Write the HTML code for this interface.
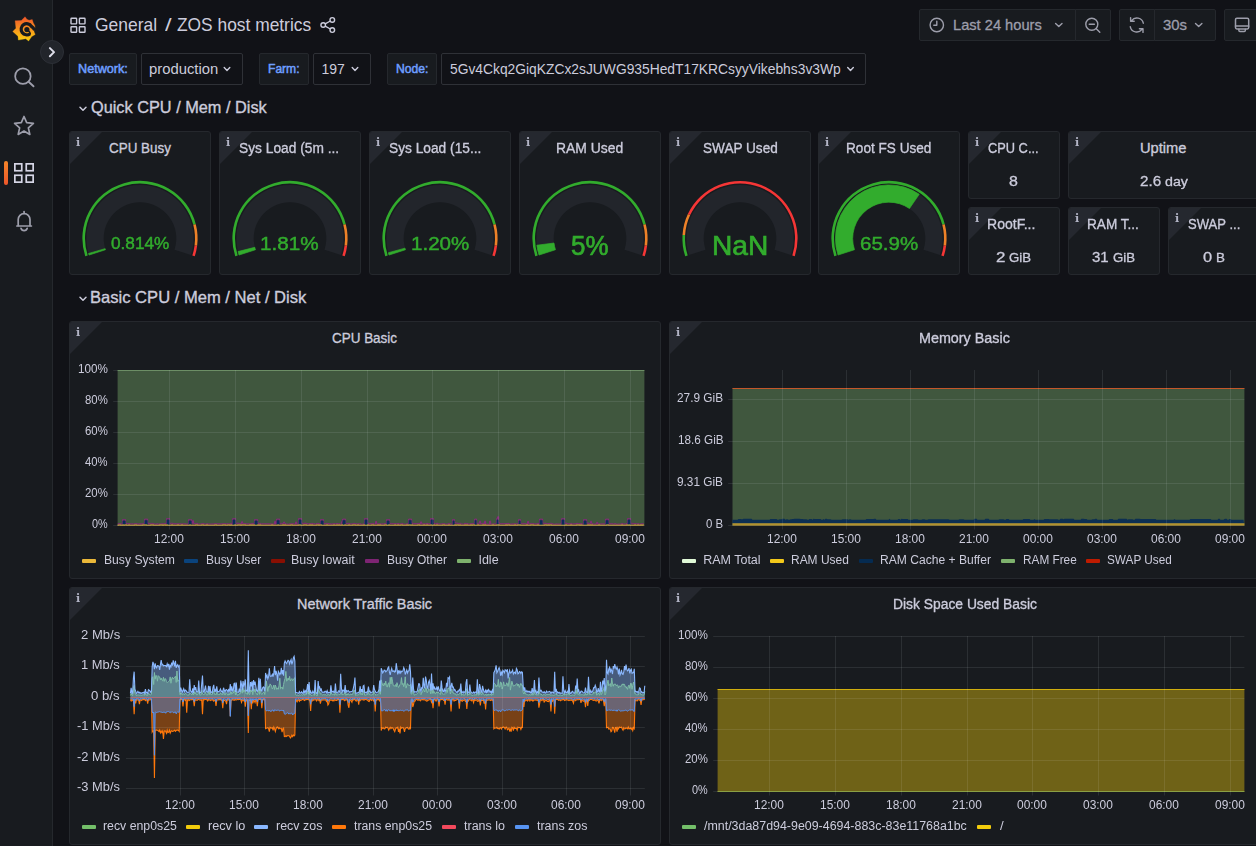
<!DOCTYPE html>
<html lang="en"><head><meta charset="utf-8"><title>ZOS host metrics - Grafana</title>
<style>
html,body{margin:0;padding:0;}
body{width:1256px;height:846px;overflow:hidden;background:#111217;position:relative;
font-family:"Liberation Sans",sans-serif;color:#ccccdc;}
.b{position:absolute;display:block;overflow:hidden;}
.t{position:absolute;display:block;white-space:pre;transform-origin:0 50%;}
</style></head><body>
<div class="b" style="left:0px;top:0px;width:53px;height:846px;background:#181b1f;border-right:1px solid #25282d;width:52px;"></div>
<svg class="b" style="left:8px;top:12px;" width="32" height="34" viewBox="0 0 32 34"><defs><linearGradient id="lg" gradientUnits="userSpaceOnUse" x1="0" y1="29" x2="0" y2="4.5"><stop offset="0" stop-color="#fdd20d"/><stop offset=".45" stop-color="#f8981d"/><stop offset="1" stop-color="#f0532a"/></linearGradient></defs><path fill="url(#lg)" stroke="url(#lg)" stroke-width=".3" stroke-linejoin="round" d="M17.09 4.74 L18.89 7.24 L21.11 8.24 L24.24 7.48 L25.25 10.65 L26.85 13.67 L27.02 15.88 L26.53 16.80 L26.05 16.40 L25.73 17.77 L26.13 20.10 L27.18 22.51 L23.72 24.60 L20.58 29.03 L17.69 26.85 L10.37 28.06 L9.97 24.20 L4.74 19.54 L7.96 16.16 L7.08 8.76 L13.27 8.52Z"/><path d="M26.61 17.93 Q25.41 15.76 23.40 14.35 A5.55 5.55 0 1 0 22.11 21.66" fill="none" stroke="#181b1f" stroke-width="3.2" stroke-linecap="butt"/><path d="M22.26 21.54 Q22.03 19.90 20.30 18.57" fill="none" stroke="#181b1f" stroke-width="1.6" stroke-linecap="round"/><circle cx="18.89" cy="17.53" r="2.6" fill="#181b1f"/></svg>
<svg class="b" style="left:12px;top:65px;" width="24" height="24" viewBox="0 0 24 24"><circle cx="10.9" cy="11.2" r="7.75" fill="none" stroke="#9d9eab" stroke-width="1.75"/><path d="M16.6 16.8 L21.5 21.3" stroke="#9d9eab" stroke-width="1.9" stroke-linecap="round"/></svg>
<svg class="b" style="left:12px;top:113px;" width="24" height="24" viewBox="0 0 24 24"><path d="M12.00 3.50 L14.70 9.68 L21.42 10.34 L16.37 14.82 L17.82 21.41 L12.00 18.00 L6.18 21.41 L7.63 14.82 L2.58 10.34 L9.30 9.68Z" fill="none" stroke="#9d9eab" stroke-width="1.7" stroke-linejoin="round"/></svg>
<div class="b" style="left:4px;top:161px;width:4px;height:24px;background:linear-gradient(#f6862a,#ee572b);border-radius:2px;"></div>
<svg class="b" style="left:12px;top:161px;" width="24" height="24" viewBox="0 0 24 24"><rect x="2.85" y="2.85" width="6.9" height="6.9" fill="none" stroke="#d6d6e6" stroke-width="1.7"/><rect x="2.85" y="14.25" width="6.9" height="6.9" fill="none" stroke="#d6d6e6" stroke-width="1.7"/><rect x="14.25" y="2.85" width="6.9" height="6.9" fill="none" stroke="#d6d6e6" stroke-width="1.7"/><rect x="14.25" y="14.25" width="6.9" height="6.9" fill="none" stroke="#d6d6e6" stroke-width="1.7"/></svg>
<svg class="b" style="left:12px;top:209px;" width="24" height="24" viewBox="0 0 24 24"><g fill="none" stroke="#9d9eab" stroke-width="1.7" stroke-linecap="round" stroke-linejoin="round"><path d="M12.1 2.6 V4.2"/><path d="M6.2 16.6 V10.6 A5.9 5.9 0 0 1 18 10.6 V16.6"/><path d="M4.9 17 H19.4"/><path d="M9 19.3 A3.2 3.2 0 0 0 15.2 19.3"/></g></svg>
<div class="b" style="left:40px;top:40px;width:24px;height:24px;background:#22252b;border:1px solid #2c2f36;border-radius:12px;box-sizing:border-box;"></div>
<svg class="b" style="left:40px;top:40px;" width="24" height="24" viewBox="0 0 24 24"><path d="M9.9 8.1 L14 12.15 L9.9 16.2" fill="none" stroke="#dedeea" stroke-width="2" stroke-linecap="round" stroke-linejoin="round"/></svg>
<svg class="b" style="left:68px;top:15px;" width="20" height="20" viewBox="0 0 20 20"><rect x="3.0" y="3.3" width="5.6" height="5.6" rx=".6" fill="none" stroke="#ccccdc" stroke-width="1.4"/><rect x="3.0" y="11.7" width="5.6" height="5.6" rx=".6" fill="none" stroke="#ccccdc" stroke-width="1.4"/><rect x="11.4" y="3.3" width="5.6" height="5.6" rx=".6" fill="none" stroke="#ccccdc" stroke-width="1.4"/><rect x="11.4" y="11.7" width="5.6" height="5.6" rx=".6" fill="none" stroke="#ccccdc" stroke-width="1.4"/></svg>
<span class="t" style="left:95.02px;top:11px;font-size:19px;line-height:28px;color:#ccccdc;transform:scaleX(0.9177);">General</span>
<span class="t" style="left:165.40px;top:11px;font-size:19px;line-height:28px;color:#ccccdc;transform:scaleX(1.2497);">/</span>
<span class="t" style="left:177.25px;top:11px;font-size:19px;line-height:28px;color:#ccccdc;transform:scaleX(0.9140);">ZOS host metrics</span>
<svg class="b" style="left:318px;top:15px;" width="20" height="20" viewBox="0 0 20 20"><g fill="none" stroke="#ccccdc" stroke-width="1.4"><circle cx="14.3" cy="4.9" r="2.3"/><circle cx="5.2" cy="10" r="2.3"/><circle cx="14.3" cy="15.1" r="2.3"/><path d="M7.2 8.9 L12.3 6 M7.2 11.1 L12.3 14"/></g></svg>
<div class="b" style="left:919px;top:9px;width:157px;height:32px;background:#181b1f;border:1px solid #25282d;box-sizing:border-box;border-radius:2px 0 0 2px;"></div>
<div class="b" style="left:1075px;top:9px;width:36px;height:32px;background:#181b1f;border:1px solid #25282d;box-sizing:border-box;border-radius:0 2px 2px 0;"></div>
<div class="b" style="left:1119px;top:9px;width:36px;height:32px;background:#181b1f;border:1px solid #25282d;box-sizing:border-box;border-radius:2px 0 0 2px;"></div>
<div class="b" style="left:1154px;top:9px;width:62px;height:32px;background:#181b1f;border:1px solid #25282d;box-sizing:border-box;border-radius:0 2px 2px 0;"></div>
<div class="b" style="left:1224px;top:9px;width:40px;height:32px;background:#181b1f;border:1px solid #25282d;box-sizing:border-box;border-radius:2px;"></div>
<svg class="b" style="left:928px;top:16px;" width="18" height="18" viewBox="0 0 18 18"><circle cx="8.8" cy="9" r="6.7" fill="none" stroke="#9d9eab" stroke-width="1.4"/><path d="M8.8 5.2 V9.2 H5.8" fill="none" stroke="#9d9eab" stroke-width="1.4" stroke-linecap="round" stroke-linejoin="round"/></svg>
<span class="t" style="left:952.80px;top:14px;font-size:15px;line-height:22px;color:#9d9eab;-webkit-text-stroke:0.3px #9d9eab;transform:scaleX(0.9761);">Last 24 hours</span>
<svg class="b" style="left:1053px;top:19px;" width="12" height="12" viewBox="0 0 12 12"><path d="M2.60 4.40 l3.2 3.2 l3.2 -3.2" fill="none" stroke="#9d9eab" stroke-width="1.4" stroke-linecap="round" stroke-linejoin="round"/></svg>
<svg class="b" style="left:1083px;top:15px;" width="20" height="20" viewBox="0 0 20 20"><circle cx="8.8" cy="9.2" r="6" fill="none" stroke="#9d9eab" stroke-width="1.4"/><path d="M6.2 9.2 H11.4 M13.3 13.7 L16.8 17.2" stroke="#9d9eab" stroke-width="1.4" stroke-linecap="round"/></svg>
<svg class="b" style="left:1127px;top:15px;" width="20" height="20" viewBox="0 0 20 20"><g fill="none" stroke="#9d9eab" stroke-width="1.4" stroke-linecap="round" stroke-linejoin="round"><path d="M16.3 8.2 A6.6 6.6 0 0 0 4.6 5.6 M3.6 2.6 V6.2 H7.2"/><path d="M3.3 11.8 A6.6 6.6 0 0 0 15 14.4 M16 17.4 V13.8 H12.4"/></g></svg>
<span class="t" style="left:1162.83px;top:14px;font-size:15px;line-height:22px;color:#9d9eab;-webkit-text-stroke:0.3px #9d9eab;transform:scaleX(0.9924);">30s</span>
<svg class="b" style="left:1193px;top:19px;" width="12" height="12" viewBox="0 0 12 12"><path d="M2.50 4.40 l3.2 3.2 l3.2 -3.2" fill="none" stroke="#9d9eab" stroke-width="1.4" stroke-linecap="round" stroke-linejoin="round"/></svg>
<svg class="b" style="left:1232px;top:15px;" width="20" height="20" viewBox="0 0 20 20"><g fill="none" stroke="#9d9eab" stroke-width="1.5" stroke-linejoin="round" stroke-linecap="round"><rect x="3.5" y="3.3" width="13.2" height="10.6" rx="1.4"/><path d="M3.6 11 H16.6" stroke-width="1.7"/><path d="M6.9 14.2 V15.6 Q6.9 16.6 7.9 16.6 H12.3 Q13.3 16.6 13.3 15.6 V14.2"/></g></svg>
<div class="b" style="left:69px;top:53px;width:68px;height:32px;background:#181b1f;border:1px solid #25282d;border-radius:2px;box-sizing:border-box;"></div>
<span class="t" style="left:77.96px;top:60px;font-size:12.5px;line-height:19px;color:#6e9fff;-webkit-text-stroke:0.5px #6e9fff;transform:scaleX(1.0114);">Network:</span>
<div class="b" style="left:141px;top:53px;width:102px;height:32px;background:#111217;border:1px solid #2f3137;border-radius:2px;box-sizing:border-box;"></div>
<span class="t" style="left:148.54px;top:59px;font-size:14px;line-height:21px;color:#ccccdc;transform:scaleX(1.0593);">production</span>
<svg class="b" style="left:221px;top:63px;" width="12" height="12" viewBox="0 0 12 12"><path d="M3.20 4.60 l2.8 2.8 l2.8 -2.8" fill="none" stroke="#ccccdc" stroke-width="1.4" stroke-linecap="round" stroke-linejoin="round"/></svg>
<div class="b" style="left:259px;top:53px;width:50px;height:32px;background:#181b1f;border:1px solid #25282d;border-radius:2px;box-sizing:border-box;"></div>
<span class="t" style="left:268.01px;top:60px;font-size:12.5px;line-height:19px;color:#6e9fff;-webkit-text-stroke:0.5px #6e9fff;transform:scaleX(0.9664);">Farm:</span>
<div class="b" style="left:313px;top:53px;width:58px;height:32px;background:#111217;border:1px solid #2f3137;border-radius:2px;box-sizing:border-box;"></div>
<span class="t" style="left:321.43px;top:59px;font-size:14px;line-height:21px;color:#ccccdc;">197</span>
<svg class="b" style="left:349px;top:63px;" width="12" height="12" viewBox="0 0 12 12"><path d="M3.20 4.60 l2.8 2.8 l2.8 -2.8" fill="none" stroke="#ccccdc" stroke-width="1.4" stroke-linecap="round" stroke-linejoin="round"/></svg>
<div class="b" style="left:387px;top:53px;width:50px;height:32px;background:#181b1f;border:1px solid #25282d;border-radius:2px;box-sizing:border-box;"></div>
<span class="t" style="left:396.01px;top:60px;font-size:12.5px;line-height:19px;color:#6e9fff;-webkit-text-stroke:0.5px #6e9fff;transform:scaleX(0.9682);">Node:</span>
<div class="b" style="left:441px;top:53px;width:425px;height:32px;background:#111217;border:1px solid #2f3137;border-radius:2px;box-sizing:border-box;"></div>
<span class="t" style="left:450.45px;top:59px;font-size:14px;line-height:21px;color:#ccccdc;transform:scaleX(0.9872);">5Gv4Ckq2GiqKZCx2sJUWG935HedT17KRCsyyVikebhs3v3Wp</span>
<svg class="b" style="left:844px;top:63px;" width="12" height="12" viewBox="0 0 12 12"><path d="M3.70 4.60 l2.8 2.8 l2.8 -2.8" fill="none" stroke="#ccccdc" stroke-width="1.4" stroke-linecap="round" stroke-linejoin="round"/></svg>
<svg class="b" style="left:77px;top:103px;" width="12" height="12" viewBox="0 0 12 12"><path d="M3.00 4.20 l3.0 3.0 l3.0 -3.0" fill="none" stroke="#ccccdc" stroke-width="1.5" stroke-linecap="round" stroke-linejoin="round"/></svg>
<span class="t" style="left:90.73px;top:95px;font-size:16.5px;line-height:25px;color:#ccccdc;-webkit-text-stroke:0.35px #ccccdc;transform:scaleX(0.9881);">Quick CPU / Mem / Disk</span>
<svg class="b" style="left:77px;top:293px;" width="12" height="12" viewBox="0 0 12 12"><path d="M3.00 4.20 l3.0 3.0 l3.0 -3.0" fill="none" stroke="#ccccdc" stroke-width="1.5" stroke-linecap="round" stroke-linejoin="round"/></svg>
<span class="t" style="left:89.89px;top:285px;font-size:16.5px;line-height:25px;color:#ccccdc;-webkit-text-stroke:0.35px #ccccdc;transform:scaleX(1.0041);">Basic CPU / Mem / Net / Disk</span>
<div class="b" style="left:69px;top:131px;width:142px;height:144px;background:#181b1f;border:1px solid #25282d;border-radius:3px;box-sizing:border-box;"></div>
<svg class="b" style="left:70px;top:132px;border-top-left-radius:2px;" width="32" height="32" viewBox="0 0 32 32"><path d="M0 0 H32 L0 32 Z" fill="#25282f"/></svg>
<span class="t" style="left:76.23px;top:135px;font-size:11px;line-height:16px;color:#b3b5c6;font-weight:700;font-family:'DejaVu Serif','Liberation Serif',serif;will-change:transform;">i</span>
<span class="t" style="left:108.57px;top:136px;font-size:15.5px;line-height:23px;color:#ccccdc;-webkit-text-stroke:0.35px #ccccdc;transform:scaleX(0.8665);">CPU Busy</span>
<svg class="b" style="left:69px;top:131px;" width="142" height="144" viewBox="0 0 142 144"><path d="M20.02 124.06 A53.6 53.6 0 1 1 121.98 124.06 L105.52 118.72 A36.3 36.3 0 1 0 36.48 118.72 Z" fill="#22252b"/><path d="M20.02 124.06 A53.6 53.6 0 0 1 19.54 122.49 L36.15 117.65 A36.3 36.3 0 0 0 36.48 118.72 Z" fill="#32ac2d" stroke="#32ac2d" stroke-width="0.7"/><path d="M16.22 125.30 A57.6 57.6 0 1 1 126.79 93.18 L124.27 93.82 A55.0 55.0 0 1 0 18.69 124.50 Z" fill="#32ac2d"/><path d="M126.79 93.18 A57.6 57.6 0 0 1 128.15 114.72 L125.57 114.39 A55.0 55.0 0 0 0 124.27 93.82 Z" fill="#ed8128"/><path d="M128.15 114.72 A57.6 57.6 0 0 1 125.78 125.30 L123.31 124.50 A55.0 55.0 0 0 0 125.57 114.39 Z" fill="#f53636"/></svg>
<span class="t" style="left:110.73px;top:232px;font-size:16px;line-height:24px;color:#32ac2d;-webkit-text-stroke:0.45px #32ac2d;transform:scaleX(1.0740);">0.814%</span>
<div class="b" style="left:219px;top:131px;width:142px;height:144px;background:#181b1f;border:1px solid #25282d;border-radius:3px;box-sizing:border-box;"></div>
<svg class="b" style="left:220px;top:132px;border-top-left-radius:2px;" width="32" height="32" viewBox="0 0 32 32"><path d="M0 0 H32 L0 32 Z" fill="#25282f"/></svg>
<span class="t" style="left:226.23px;top:135px;font-size:11px;line-height:16px;color:#b3b5c6;font-weight:700;font-family:'DejaVu Serif','Liberation Serif',serif;will-change:transform;">i</span>
<span class="t" style="left:238.63px;top:136px;font-size:15.5px;line-height:23px;color:#ccccdc;-webkit-text-stroke:0.35px #ccccdc;transform:scaleX(0.8872);">Sys Load (5m ...</span>
<svg class="b" style="left:219px;top:131px;" width="142" height="144" viewBox="0 0 142 144"><path d="M20.02 124.06 A53.6 53.6 0 1 1 121.98 124.06 L105.52 118.72 A36.3 36.3 0 1 0 36.48 118.72 Z" fill="#22252b"/><path d="M20.02 124.06 A53.6 53.6 0 0 1 19.01 120.55 L35.79 116.34 A36.3 36.3 0 0 0 36.48 118.72 Z" fill="#32ac2d" stroke="#32ac2d" stroke-width="0.7"/><path d="M16.22 125.30 A57.6 57.6 0 1 1 126.79 93.18 L124.27 93.82 A55.0 55.0 0 1 0 18.69 124.50 Z" fill="#32ac2d"/><path d="M126.79 93.18 A57.6 57.6 0 0 1 128.15 114.72 L125.57 114.39 A55.0 55.0 0 0 0 124.27 93.82 Z" fill="#ed8128"/><path d="M128.15 114.72 A57.6 57.6 0 0 1 125.78 125.30 L123.31 124.50 A55.0 55.0 0 0 0 125.57 114.39 Z" fill="#f53636"/></svg>
<span class="t" style="left:260.43px;top:230px;font-size:18.5px;line-height:28px;color:#32ac2d;-webkit-text-stroke:0.45px #32ac2d;transform:scaleX(1.1161);">1.81%</span>
<div class="b" style="left:369px;top:131px;width:142px;height:144px;background:#181b1f;border:1px solid #25282d;border-radius:3px;box-sizing:border-box;"></div>
<svg class="b" style="left:370px;top:132px;border-top-left-radius:2px;" width="32" height="32" viewBox="0 0 32 32"><path d="M0 0 H32 L0 32 Z" fill="#25282f"/></svg>
<span class="t" style="left:376.23px;top:135px;font-size:11px;line-height:16px;color:#b3b5c6;font-weight:700;font-family:'DejaVu Serif','Liberation Serif',serif;will-change:transform;">i</span>
<span class="t" style="left:388.68px;top:136px;font-size:15.5px;line-height:23px;color:#ccccdc;-webkit-text-stroke:0.35px #ccccdc;transform:scaleX(0.8860);">Sys Load (15...</span>
<svg class="b" style="left:369px;top:131px;" width="142" height="144" viewBox="0 0 142 144"><path d="M20.02 124.06 A53.6 53.6 0 1 1 121.98 124.06 L105.52 118.72 A36.3 36.3 0 1 0 36.48 118.72 Z" fill="#22252b"/><path d="M20.02 124.06 A53.6 53.6 0 0 1 19.33 121.74 L36.00 117.14 A36.3 36.3 0 0 0 36.48 118.72 Z" fill="#32ac2d" stroke="#32ac2d" stroke-width="0.7"/><path d="M16.22 125.30 A57.6 57.6 0 1 1 126.79 93.18 L124.27 93.82 A55.0 55.0 0 1 0 18.69 124.50 Z" fill="#32ac2d"/><path d="M126.79 93.18 A57.6 57.6 0 0 1 128.15 114.72 L125.57 114.39 A55.0 55.0 0 0 0 124.27 93.82 Z" fill="#ed8128"/><path d="M128.15 114.72 A57.6 57.6 0 0 1 125.78 125.30 L123.31 124.50 A55.0 55.0 0 0 0 125.57 114.39 Z" fill="#f53636"/></svg>
<span class="t" style="left:410.83px;top:230px;font-size:18.5px;line-height:28px;color:#32ac2d;-webkit-text-stroke:0.45px #32ac2d;transform:scaleX(1.1111);">1.20%</span>
<div class="b" style="left:519px;top:131px;width:142px;height:144px;background:#181b1f;border:1px solid #25282d;border-radius:3px;box-sizing:border-box;"></div>
<svg class="b" style="left:520px;top:132px;border-top-left-radius:2px;" width="32" height="32" viewBox="0 0 32 32"><path d="M0 0 H32 L0 32 Z" fill="#25282f"/></svg>
<span class="t" style="left:526.23px;top:135px;font-size:11px;line-height:16px;color:#b3b5c6;font-weight:700;font-family:'DejaVu Serif','Liberation Serif',serif;will-change:transform;">i</span>
<span class="t" style="left:556.26px;top:136px;font-size:15.5px;line-height:23px;color:#ccccdc;-webkit-text-stroke:0.35px #ccccdc;transform:scaleX(0.8972);">RAM Used</span>
<svg class="b" style="left:519px;top:131px;" width="142" height="144" viewBox="0 0 142 144"><path d="M20.02 124.06 A53.6 53.6 0 1 1 121.98 124.06 L105.52 118.72 A36.3 36.3 0 1 0 36.48 118.72 Z" fill="#22252b"/><path d="M20.02 124.06 A53.6 53.6 0 0 1 17.82 114.22 L34.99 112.05 A36.3 36.3 0 0 0 36.48 118.72 Z" fill="#32ac2d" stroke="#32ac2d" stroke-width="0.7"/><path d="M16.22 125.30 A57.6 57.6 0 1 1 126.79 93.18 L124.27 93.82 A55.0 55.0 0 1 0 18.69 124.50 Z" fill="#32ac2d"/><path d="M126.79 93.18 A57.6 57.6 0 0 1 128.15 114.72 L125.57 114.39 A55.0 55.0 0 0 0 124.27 93.82 Z" fill="#ed8128"/><path d="M128.15 114.72 A57.6 57.6 0 0 1 125.78 125.30 L123.31 124.50 A55.0 55.0 0 0 0 125.57 114.39 Z" fill="#f53636"/></svg>
<span class="t" style="left:571.46px;top:226px;font-size:27px;line-height:40px;color:#32ac2d;-webkit-text-stroke:0.7px #32ac2d;transform:scaleX(0.9598);">5%</span>
<div class="b" style="left:669px;top:131px;width:142px;height:144px;background:#181b1f;border:1px solid #25282d;border-radius:3px;box-sizing:border-box;"></div>
<svg class="b" style="left:670px;top:132px;border-top-left-radius:2px;" width="32" height="32" viewBox="0 0 32 32"><path d="M0 0 H32 L0 32 Z" fill="#25282f"/></svg>
<span class="t" style="left:676.23px;top:135px;font-size:11px;line-height:16px;color:#b3b5c6;font-weight:700;font-family:'DejaVu Serif','Liberation Serif',serif;will-change:transform;">i</span>
<span class="t" style="left:702.58px;top:136px;font-size:15.5px;line-height:23px;color:#ccccdc;-webkit-text-stroke:0.35px #ccccdc;transform:scaleX(0.8770);">SWAP Used</span>
<svg class="b" style="left:669px;top:131px;" width="142" height="144" viewBox="0 0 142 144"><path d="M20.02 124.06 A53.6 53.6 0 1 1 121.98 124.06 L105.52 118.72 A36.3 36.3 0 1 0 36.48 118.72 Z" fill="#22252b"/><path d="M16.22 125.30 A57.6 57.6 0 0 1 13.51 103.88 L16.11 104.05 A55.0 55.0 0 0 0 18.69 124.50 Z" fill="#32ac2d"/><path d="M13.51 103.88 A57.6 57.6 0 0 1 18.88 82.98 L21.23 84.08 A55.0 55.0 0 0 0 16.11 104.05 Z" fill="#ed8128"/><path d="M18.88 82.98 A57.6 57.6 0 0 1 125.78 125.30 L123.31 124.50 A55.0 55.0 0 0 0 21.23 84.08 Z" fill="#f53636"/></svg>
<span class="t" style="left:711.59px;top:226px;font-size:27px;line-height:40px;color:#32ac2d;-webkit-text-stroke:0.7px #32ac2d;transform:scaleX(1.0424);">NaN</span>
<div class="b" style="left:818px;top:131px;width:142px;height:144px;background:#181b1f;border:1px solid #25282d;border-radius:3px;box-sizing:border-box;"></div>
<svg class="b" style="left:819px;top:132px;border-top-left-radius:2px;" width="32" height="32" viewBox="0 0 32 32"><path d="M0 0 H32 L0 32 Z" fill="#25282f"/></svg>
<span class="t" style="left:825.23px;top:135px;font-size:11px;line-height:16px;color:#b3b5c6;font-weight:700;font-family:'DejaVu Serif','Liberation Serif',serif;will-change:transform;">i</span>
<span class="t" style="left:846.18px;top:136px;font-size:15.5px;line-height:23px;color:#ccccdc;-webkit-text-stroke:0.35px #ccccdc;transform:scaleX(0.8771);">Root FS Used</span>
<svg class="b" style="left:818px;top:131px;" width="142" height="144" viewBox="0 0 142 144"><path d="M20.02 124.06 A53.6 53.6 0 1 1 121.98 124.06 L105.52 118.72 A36.3 36.3 0 1 0 36.48 118.72 Z" fill="#22252b"/><path d="M20.02 124.06 A53.6 53.6 0 0 1 101.24 63.24 L91.48 77.53 A36.3 36.3 0 0 0 36.48 118.72 Z" fill="#32ac2d" stroke="#32ac2d" stroke-width="0.7"/><path d="M16.22 125.30 A57.6 57.6 0 1 1 126.79 93.18 L124.27 93.82 A55.0 55.0 0 1 0 18.69 124.50 Z" fill="#32ac2d"/><path d="M126.79 93.18 A57.6 57.6 0 0 1 128.15 114.72 L125.57 114.39 A55.0 55.0 0 0 0 124.27 93.82 Z" fill="#ed8128"/><path d="M128.15 114.72 A57.6 57.6 0 0 1 125.78 125.30 L123.31 124.50 A55.0 55.0 0 0 0 125.57 114.39 Z" fill="#f53636"/></svg>
<span class="t" style="left:859.96px;top:230px;font-size:18.5px;line-height:28px;color:#32ac2d;-webkit-text-stroke:0.45px #32ac2d;transform:scaleX(1.1107);">65.9%</span>
<div class="b" style="left:968px;top:131px;width:92px;height:68px;background:#181b1f;border:1px solid #25282d;border-radius:3px;box-sizing:border-box;"></div>
<svg class="b" style="left:969px;top:132px;border-top-left-radius:2px;" width="32" height="32" viewBox="0 0 32 32"><path d="M0 0 H32 L0 32 Z" fill="#25282f"/></svg>
<span class="t" style="left:975.23px;top:135px;font-size:11px;line-height:16px;color:#b3b5c6;font-weight:700;font-family:'DejaVu Serif','Liberation Serif',serif;will-change:transform;">i</span>
<span class="t" style="left:987.60px;top:136px;font-size:15.5px;line-height:23px;color:#ccccdc;-webkit-text-stroke:0.35px #ccccdc;transform:scaleX(0.8269);">CPU C...</span>
<span class="t" style="left:1009.31px;top:170px;font-size:14.5px;line-height:22px;color:#ccccdc;-webkit-text-stroke:0.3px #ccccdc;transform:scaleX(1.1001);">8</span>
<div class="b" style="left:1068px;top:131px;width:192px;height:68px;background:#181b1f;border:1px solid #25282d;border-radius:3px;box-sizing:border-box;"></div>
<svg class="b" style="left:1069px;top:132px;border-top-left-radius:2px;" width="32" height="32" viewBox="0 0 32 32"><path d="M0 0 H32 L0 32 Z" fill="#25282f"/></svg>
<span class="t" style="left:1075.23px;top:135px;font-size:11px;line-height:16px;color:#b3b5c6;font-weight:700;font-family:'DejaVu Serif','Liberation Serif',serif;will-change:transform;">i</span>
<span class="t" style="left:1140.37px;top:136px;font-size:15.5px;line-height:23px;color:#ccccdc;-webkit-text-stroke:0.35px #ccccdc;transform:scaleX(0.9476);">Uptime</span>
<span class="t" style="left:1139.98px;top:170px;font-size:14.5px;line-height:22px;color:#ccccdc;-webkit-text-stroke:0.3px #ccccdc;transform:scaleX(1.0502);">2.6</span>
<span class="t" style="left:1164.60px;top:173px;font-size:12.5px;line-height:19px;color:#ccccdc;-webkit-text-stroke:0.3px #ccccdc;transform:scaleX(1.1374);">day</span>
<div class="b" style="left:968px;top:207px;width:92px;height:68px;background:#181b1f;border:1px solid #25282d;border-radius:3px;box-sizing:border-box;"></div>
<svg class="b" style="left:969px;top:208px;border-top-left-radius:2px;" width="32" height="32" viewBox="0 0 32 32"><path d="M0 0 H32 L0 32 Z" fill="#25282f"/></svg>
<span class="t" style="left:975.23px;top:211px;font-size:11px;line-height:16px;color:#b3b5c6;font-weight:700;font-family:'DejaVu Serif','Liberation Serif',serif;will-change:transform;">i</span>
<span class="t" style="left:987.35px;top:212px;font-size:15.5px;line-height:23px;color:#ccccdc;-webkit-text-stroke:0.35px #ccccdc;transform:scaleX(0.9067);">RootF...</span>
<span class="t" style="left:996.40px;top:246px;font-size:14.5px;line-height:22px;color:#ccccdc;-webkit-text-stroke:0.3px #ccccdc;transform:scaleX(1.1708);">2</span>
<span class="t" style="left:1008.94px;top:249px;font-size:12px;line-height:18px;color:#ccccdc;-webkit-text-stroke:0.3px #ccccdc;transform:scaleX(1.0996);">GiB</span>
<div class="b" style="left:1068px;top:207px;width:92px;height:68px;background:#181b1f;border:1px solid #25282d;border-radius:3px;box-sizing:border-box;"></div>
<svg class="b" style="left:1069px;top:208px;border-top-left-radius:2px;" width="32" height="32" viewBox="0 0 32 32"><path d="M0 0 H32 L0 32 Z" fill="#25282f"/></svg>
<span class="t" style="left:1075.23px;top:211px;font-size:11px;line-height:16px;color:#b3b5c6;font-weight:700;font-family:'DejaVu Serif','Liberation Serif',serif;will-change:transform;">i</span>
<span class="t" style="left:1087.14px;top:212px;font-size:15.5px;line-height:23px;color:#ccccdc;-webkit-text-stroke:0.35px #ccccdc;transform:scaleX(0.8768);">RAM T...</span>
<span class="t" style="left:1092.43px;top:246px;font-size:14.5px;line-height:22px;color:#ccccdc;-webkit-text-stroke:0.3px #ccccdc;transform:scaleX(1.0349);">31</span>
<span class="t" style="left:1113.13px;top:249px;font-size:12px;line-height:18px;color:#ccccdc;-webkit-text-stroke:0.3px #ccccdc;transform:scaleX(1.1023);">GiB</span>
<div class="b" style="left:1168px;top:207px;width:92px;height:68px;background:#181b1f;border:1px solid #25282d;border-radius:3px;box-sizing:border-box;"></div>
<svg class="b" style="left:1169px;top:208px;border-top-left-radius:2px;" width="32" height="32" viewBox="0 0 32 32"><path d="M0 0 H32 L0 32 Z" fill="#25282f"/></svg>
<span class="t" style="left:1175.23px;top:211px;font-size:11px;line-height:16px;color:#b3b5c6;font-weight:700;font-family:'DejaVu Serif','Liberation Serif',serif;will-change:transform;">i</span>
<span class="t" style="left:1187.66px;top:212px;font-size:15.5px;line-height:23px;color:#ccccdc;-webkit-text-stroke:0.35px #ccccdc;transform:scaleX(0.8431);">SWAP ...</span>
<span class="t" style="left:1203.11px;top:246px;font-size:14.5px;line-height:22px;color:#ccccdc;-webkit-text-stroke:0.3px #ccccdc;transform:scaleX(1.1303);">0</span>
<span class="t" style="left:1215.50px;top:249px;font-size:12px;line-height:18px;color:#ccccdc;-webkit-text-stroke:0.3px #ccccdc;transform:scaleX(1.1175);">B</span>
<div class="b" style="left:69px;top:321px;width:592px;height:258px;background:#181b1f;border:1px solid #25282d;border-radius:3px;box-sizing:border-box;"></div>
<svg class="b" style="left:70px;top:322px;border-top-left-radius:2px;" width="32" height="32" viewBox="0 0 32 32"><path d="M0 0 H32 L0 32 Z" fill="#25282f"/></svg>
<span class="t" style="left:76.23px;top:325px;font-size:11px;line-height:16px;color:#b3b5c6;font-weight:700;font-family:'DejaVu Serif','Liberation Serif',serif;will-change:transform;">i</span>
<span class="t" style="left:332.32px;top:326px;font-size:15.5px;line-height:23px;color:#ccccdc;-webkit-text-stroke:0.35px #ccccdc;transform:scaleX(0.8679);">CPU Basic</span>
<svg class="b" style="left:69px;top:321px;" width="592" height="258" viewBox="0 0 592 258"><rect x="48.60" y="49.00" width="526.80" height="156.00" fill="#7eb26d" fill-opacity="0.4"/><path d="M48.60 49.50 H575.40" stroke="#7eb26d" stroke-opacity=".5" stroke-width="1"/><polygon points="48.6,205.00 48.6,203.21 49.6,203.21 49.6,202.58 50.6,202.58 50.6,202.60 51.6,202.60 51.6,203.26 52.6,203.26 52.6,202.80 53.6,202.80 53.6,198.60 54.6,198.60 54.6,198.60 55.6,198.60 55.6,198.60 56.6,198.60 56.6,202.15 57.6,202.15 57.6,202.61 58.6,202.61 58.6,202.59 59.6,202.59 59.6,202.47 60.6,202.47 60.6,202.75 61.6,202.75 61.6,202.82 62.6,202.82 62.6,202.77 63.6,202.77 63.6,202.97 64.6,202.97 64.6,203.13 65.6,203.13 65.6,202.65 66.6,202.65 66.6,202.61 67.6,202.61 67.6,202.84 68.6,202.84 68.6,203.11 69.6,203.11 69.6,202.95 70.6,202.95 70.6,202.73 71.6,202.73 71.6,203.26 72.6,203.26 72.6,202.70 73.6,202.70 73.6,202.67 74.6,202.67 74.6,202.62 75.6,202.62 75.6,198.10 76.6,198.10 76.6,198.10 77.6,198.10 77.6,198.10 78.6,198.10 78.6,202.10 79.6,202.10 79.6,202.56 80.6,202.56 80.6,202.29 81.6,202.29 81.6,202.41 82.6,202.41 82.6,202.32 83.6,202.32 83.6,202.70 84.6,202.70 84.6,202.86 85.6,202.86 85.6,202.98 86.6,202.98 86.6,203.27 87.6,203.27 87.6,202.78 88.6,202.78 88.6,203.06 89.6,203.06 89.6,203.26 90.6,203.26 90.6,202.80 91.6,202.80 91.6,202.90 92.6,202.90 92.6,202.68 93.6,202.68 93.6,202.93 94.6,202.93 94.6,202.69 95.6,202.69 95.6,202.39 96.6,202.39 96.6,203.01 97.6,203.01 97.6,197.60 98.6,197.60 98.6,197.60 99.6,197.60 99.6,197.60 100.6,197.60 100.6,202.62 101.6,202.62 101.6,202.21 102.6,202.21 102.6,202.20 103.6,202.20 103.6,202.60 104.6,202.60 104.6,202.88 105.6,202.88 105.6,202.59 106.6,202.59 106.6,202.76 107.6,202.76 107.6,203.08 108.6,203.08 108.6,202.73 109.6,202.73 109.6,202.73 110.6,202.73 110.6,202.71 111.6,202.71 111.6,203.17 112.6,203.17 112.6,202.78 113.6,202.78 113.6,202.80 114.6,202.80 114.6,202.82 115.6,202.82 115.6,202.75 116.6,202.75 116.6,203.01 117.6,203.01 117.6,203.10 118.6,203.10 118.6,203.06 119.6,203.06 119.6,198.60 120.6,198.60 120.6,198.60 121.6,198.60 121.6,198.60 122.6,198.60 122.6,202.24 123.6,202.24 123.6,199.70 124.6,199.70 124.6,202.51 125.6,202.51 125.6,202.40 126.6,202.40 126.6,202.47 127.6,202.47 127.6,202.36 128.6,202.36 128.6,203.13 129.6,203.13 129.6,203.03 130.6,203.03 130.6,203.05 131.6,203.05 131.6,202.98 132.6,202.98 132.6,202.64 133.6,202.64 133.6,202.42 134.6,202.42 134.6,202.86 135.6,202.86 135.6,202.99 136.6,202.99 136.6,203.24 137.6,203.24 137.6,202.73 138.6,202.73 138.6,202.96 139.6,202.96 139.6,203.03 140.6,203.03 140.6,202.99 141.6,202.99 141.6,202.98 142.6,202.98 142.6,202.88 143.6,202.88 143.6,203.14 144.6,203.14 144.6,202.80 145.6,202.80 145.6,202.63 146.6,202.63 146.6,202.86 147.6,202.86 147.6,202.76 148.6,202.76 148.6,202.90 149.6,202.90 149.6,202.72 150.6,202.72 150.6,203.06 151.6,203.06 151.6,202.80 152.6,202.80 152.6,202.99 153.6,202.99 153.6,202.71 154.6,202.71 154.6,202.57 155.6,202.57 155.6,202.70 156.6,202.70 156.6,203.26 157.6,203.26 157.6,202.72 158.6,202.72 158.6,202.88 159.6,202.88 159.6,202.82 160.6,202.82 160.6,202.81 161.6,202.81 161.6,202.35 162.6,202.35 162.6,203.25 163.6,203.25 163.6,197.60 164.6,197.60 164.6,197.60 165.6,197.60 165.6,197.60 166.6,197.60 166.6,202.38 167.6,202.38 167.6,202.19 168.6,202.19 168.6,202.12 169.6,202.12 169.6,202.43 170.6,202.43 170.6,202.44 171.6,202.44 171.6,202.95 172.6,202.95 172.6,200.73 173.6,200.73 173.6,202.46 174.6,202.46 174.6,202.62 175.6,202.62 175.6,202.41 176.6,202.41 176.6,202.80 177.6,202.80 177.6,202.89 178.6,202.89 178.6,202.80 179.6,202.80 179.6,203.06 180.6,203.06 180.6,202.82 181.6,202.82 181.6,203.15 182.6,203.15 182.6,202.40 183.6,202.40 183.6,203.13 184.6,203.13 184.6,202.62 185.6,202.62 185.6,198.60 186.6,198.60 186.6,198.60 187.6,198.60 187.6,198.60 188.6,198.60 188.6,202.02 189.6,202.02 189.6,202.63 190.6,202.63 190.6,202.28 191.6,202.28 191.6,202.91 192.6,202.91 192.6,202.89 193.6,202.89 193.6,202.67 194.6,202.67 194.6,202.69 195.6,202.69 195.6,202.71 196.6,202.71 196.6,202.91 197.6,202.91 197.6,202.76 198.6,202.76 198.6,202.81 199.6,202.81 199.6,203.00 200.6,203.00 200.6,202.80 201.6,202.80 201.6,202.89 202.6,202.89 202.6,202.88 203.6,202.88 203.6,203.24 204.6,203.24 204.6,202.92 205.6,202.92 205.6,200.31 206.6,200.31 206.6,203.00 207.6,203.00 207.6,198.10 208.6,198.10 208.6,198.10 209.6,198.10 209.6,198.10 210.6,198.10 210.6,202.36 211.6,202.36 211.6,202.34 212.6,202.34 212.6,202.46 213.6,202.46 213.6,202.39 214.6,202.39 214.6,201.10 215.6,201.10 215.6,202.33 216.6,202.33 216.6,203.05 217.6,203.05 217.6,203.02 218.6,203.02 218.6,203.18 219.6,203.18 219.6,203.29 220.6,203.29 220.6,202.72 221.6,202.72 221.6,202.77 222.6,202.77 222.6,202.55 223.6,202.55 223.6,202.73 224.6,202.73 224.6,202.99 225.6,202.99 225.6,203.16 226.6,203.16 226.6,201.05 227.6,201.05 227.6,203.12 228.6,203.12 228.6,203.11 229.6,203.11 229.6,197.60 230.6,197.60 230.6,197.60 231.6,197.60 231.6,197.60 232.6,197.60 232.6,202.06 233.6,202.06 233.6,202.50 234.6,202.50 234.6,202.39 235.6,202.39 235.6,201.98 236.6,201.98 236.6,202.33 237.6,202.33 237.6,202.56 238.6,202.56 238.6,202.85 239.6,202.85 239.6,202.97 240.6,202.97 240.6,202.46 241.6,202.46 241.6,202.91 242.6,202.91 242.6,202.34 243.6,202.34 243.6,203.09 244.6,203.09 244.6,202.71 245.6,202.71 245.6,203.12 246.6,203.12 246.6,203.20 247.6,203.20 247.6,202.36 248.6,202.36 248.6,202.36 249.6,202.36 249.6,203.22 250.6,203.22 250.6,202.69 251.6,202.69 251.6,198.60 252.6,198.60 252.6,198.60 253.6,198.60 253.6,198.60 254.6,198.60 254.6,202.63 255.6,202.63 255.6,202.69 256.6,202.69 256.6,202.34 257.6,202.34 257.6,202.40 258.6,202.40 258.6,202.47 259.6,202.47 259.6,203.13 260.6,203.13 260.6,202.70 261.6,202.70 261.6,203.30 262.6,203.30 262.6,202.80 263.6,202.80 263.6,203.15 264.6,203.15 264.6,202.59 265.6,202.59 265.6,202.87 266.6,202.87 266.6,203.03 267.6,203.03 267.6,202.43 268.6,202.43 268.6,202.91 269.6,202.91 269.6,202.75 270.6,202.75 270.6,203.23 271.6,203.23 271.6,202.95 272.6,202.95 272.6,200.59 273.6,200.59 273.6,198.10 274.6,198.10 274.6,198.10 275.6,198.10 275.6,198.10 276.6,198.10 276.6,202.66 277.6,202.66 277.6,202.51 278.6,202.51 278.6,202.31 279.6,202.31 279.6,202.35 280.6,202.35 280.6,202.93 281.6,202.93 281.6,202.84 282.6,202.84 282.6,203.05 283.6,203.05 283.6,202.77 284.6,202.77 284.6,202.33 285.6,202.33 285.6,202.77 286.6,202.77 286.6,202.73 287.6,202.73 287.6,203.17 288.6,203.17 288.6,202.87 289.6,202.87 289.6,202.76 290.6,202.76 290.6,202.70 291.6,202.70 291.6,203.19 292.6,203.19 292.6,203.28 293.6,203.28 293.6,203.08 294.6,203.08 294.6,202.90 295.6,202.90 295.6,197.60 296.6,197.60 296.6,197.60 297.6,197.60 297.6,197.60 298.6,197.60 298.6,201.99 299.6,201.99 299.6,202.65 300.6,202.65 300.6,202.85 301.6,202.85 301.6,202.50 302.6,202.50 302.6,202.62 303.6,202.62 303.6,202.30 304.6,202.30 304.6,203.08 305.6,203.08 305.6,203.14 306.6,203.14 306.6,200.50 307.6,200.50 307.6,202.92 308.6,202.92 308.6,202.76 309.6,202.76 309.6,202.73 310.6,202.73 310.6,202.64 311.6,202.64 311.6,203.19 312.6,203.19 312.6,202.81 313.6,202.81 313.6,203.10 314.6,203.10 314.6,202.83 315.6,202.83 315.6,202.45 316.6,202.45 316.6,202.88 317.6,202.88 317.6,198.60 318.6,198.60 318.6,198.60 319.6,198.60 319.6,198.60 320.6,198.60 320.6,202.54 321.6,202.54 321.6,202.37 322.6,202.37 322.6,202.47 323.6,202.47 323.6,202.79 324.6,202.79 324.6,202.62 325.6,202.62 325.6,202.61 326.6,202.61 326.6,202.90 327.6,202.90 327.6,202.70 328.6,202.70 328.6,202.41 329.6,202.41 329.6,203.24 330.6,203.24 330.6,202.80 331.6,202.80 331.6,202.72 332.6,202.72 332.6,202.32 333.6,202.32 333.6,203.08 334.6,203.08 334.6,203.14 335.6,203.14 335.6,203.24 336.6,203.24 336.6,203.17 337.6,203.17 337.6,202.78 338.6,202.78 338.6,202.91 339.6,202.91 339.6,198.10 340.6,198.10 340.6,198.10 341.6,198.10 341.6,198.10 342.6,198.10 342.6,202.05 343.6,202.05 343.6,202.73 344.6,202.73 344.6,202.63 345.6,202.63 345.6,202.40 346.6,202.40 346.6,202.85 347.6,202.85 347.6,202.56 348.6,202.56 348.6,202.42 349.6,202.42 349.6,202.36 350.6,202.36 350.6,203.06 351.6,203.06 351.6,200.88 352.6,200.88 352.6,202.75 353.6,202.75 353.6,203.08 354.6,203.08 354.6,202.73 355.6,202.73 355.6,203.23 356.6,203.23 356.6,202.72 357.6,202.72 357.6,202.33 358.6,202.33 358.6,203.27 359.6,203.27 359.6,202.76 360.6,202.76 360.6,203.20 361.6,203.20 361.6,197.60 362.6,197.60 362.6,197.60 363.6,197.60 363.6,197.60 364.6,197.60 364.6,202.14 365.6,202.14 365.6,202.76 366.6,202.76 366.6,202.86 367.6,202.86 367.6,202.21 368.6,202.21 368.6,202.88 369.6,202.88 369.6,202.91 370.6,202.91 370.6,202.99 371.6,202.99 371.6,203.01 372.6,203.01 372.6,202.83 373.6,202.83 373.6,202.62 374.6,202.62 374.6,202.64 375.6,202.64 375.6,202.99 376.6,202.99 376.6,203.25 377.6,203.25 377.6,202.99 378.6,202.99 378.6,203.07 379.6,203.07 379.6,202.39 380.6,202.39 380.6,202.81 381.6,202.81 381.6,203.00 382.6,203.00 382.6,203.20 383.6,203.20 383.6,198.60 384.6,198.60 384.6,198.60 385.6,198.60 385.6,201.71 386.6,201.71 386.6,202.14 387.6,202.14 387.6,202.09 388.6,202.09 388.6,202.37 389.6,202.37 389.6,202.57 390.6,202.57 390.6,202.20 391.6,202.20 391.6,202.79 392.6,202.79 392.6,202.93 393.6,202.93 393.6,203.24 394.6,203.24 394.6,203.06 395.6,203.06 395.6,202.31 396.6,202.31 396.6,202.84 397.6,202.84 397.6,202.45 398.6,202.45 398.6,203.15 399.6,203.15 399.6,202.95 400.6,202.95 400.6,203.30 401.6,203.30 401.6,202.53 402.6,202.53 402.6,202.76 403.6,202.76 403.6,202.51 404.6,202.51 404.6,202.69 405.6,202.69 405.6,198.10 406.6,198.10 406.6,198.10 407.6,198.10 407.6,202.52 408.6,202.52 408.6,202.21 409.6,202.21 409.6,202.27 410.6,202.27 410.6,200.26 411.6,200.26 411.6,202.77 412.6,202.77 412.6,202.52 413.6,202.52 413.6,202.23 414.6,202.23 414.6,203.02 415.6,203.02 415.6,200.11 416.6,200.11 416.6,203.21 417.6,203.21 417.6,203.00 418.6,203.00 418.6,203.20 419.6,203.20 419.6,203.27 420.6,203.27 420.6,200.10 421.6,200.10 421.6,203.02 422.6,203.02 422.6,203.16 423.6,203.16 423.6,202.88 424.6,202.88 424.6,202.88 425.6,202.88 425.6,203.14 426.6,203.14 426.6,202.83 427.6,202.83 427.6,197.60 428.6,197.60 428.6,195.71 429.6,195.71 429.6,201.76 430.6,201.76 430.6,202.51 431.6,202.51 431.6,202.66 432.6,202.66 432.6,202.48 433.6,202.48 433.6,202.71 434.6,202.71 434.6,202.57 435.6,202.57 435.6,202.83 436.6,202.83 436.6,202.50 437.6,202.50 437.6,203.21 438.6,203.21 438.6,202.34 439.6,202.34 439.6,202.88 440.6,202.88 440.6,202.92 441.6,202.92 441.6,203.26 442.6,203.26 442.6,202.81 443.6,202.81 443.6,203.26 444.6,203.26 444.6,202.73 445.6,202.73 445.6,202.83 446.6,202.83 446.6,202.81 447.6,202.81 447.6,202.92 448.6,202.92 448.6,202.84 449.6,202.84 449.6,198.60 450.6,198.60 450.6,198.60 451.6,198.60 451.6,202.39 452.6,202.39 452.6,202.41 453.6,202.41 453.6,202.78 454.6,202.78 454.6,202.43 455.6,202.43 455.6,202.67 456.6,202.67 456.6,203.03 457.6,203.03 457.6,202.78 458.6,202.78 458.6,200.45 459.6,200.45 459.6,202.82 460.6,202.82 460.6,203.09 461.6,203.09 461.6,202.33 462.6,202.33 462.6,202.48 463.6,202.48 463.6,202.52 464.6,202.52 464.6,202.88 465.6,202.88 465.6,203.09 466.6,203.09 466.6,202.77 467.6,202.77 467.6,203.28 468.6,203.28 468.6,202.36 469.6,202.36 469.6,202.77 470.6,202.77 470.6,198.10 471.6,198.10 471.6,198.10 472.6,198.10 472.6,198.10 473.6,198.10 473.6,202.17 474.6,202.17 474.6,202.25 475.6,202.25 475.6,202.13 476.6,202.13 476.6,202.39 477.6,202.39 477.6,202.49 478.6,202.49 478.6,202.54 479.6,202.54 479.6,203.09 480.6,203.09 480.6,202.30 481.6,202.30 481.6,202.32 482.6,202.32 482.6,202.71 483.6,202.71 483.6,203.04 484.6,203.04 484.6,203.24 485.6,203.24 485.6,203.28 486.6,203.28 486.6,202.88 487.6,202.88 487.6,203.02 488.6,203.02 488.6,203.06 489.6,203.06 489.6,203.04 490.6,203.04 490.6,203.05 491.6,203.05 491.6,202.77 492.6,202.77 492.6,197.60 493.6,197.60 493.6,197.60 494.6,197.60 494.6,197.60 495.6,197.60 495.6,202.20 496.6,202.20 496.6,202.06 497.6,202.06 497.6,202.57 498.6,202.57 498.6,202.80 499.6,202.80 499.6,202.77 500.6,202.77 500.6,203.07 501.6,203.07 501.6,202.32 502.6,202.32 502.6,203.23 503.6,203.23 503.6,202.87 504.6,202.87 504.6,202.80 505.6,202.80 505.6,202.73 506.6,202.73 506.6,203.06 507.6,203.06 507.6,202.31 508.6,202.31 508.6,202.74 509.6,202.74 509.6,202.65 510.6,202.65 510.6,203.09 511.6,203.09 511.6,202.46 512.6,202.46 512.6,203.17 513.6,203.17 513.6,203.17 514.6,203.17 514.6,198.60 515.6,198.60 515.6,198.60 516.6,198.60 516.6,198.60 517.6,198.60 517.6,202.14 518.6,202.14 518.6,201.99 519.6,201.99 519.6,202.60 520.6,202.60 520.6,202.29 521.6,202.29 521.6,200.31 522.6,200.31 522.6,202.55 523.6,202.55 523.6,202.94 524.6,202.94 524.6,203.07 525.6,203.07 525.6,203.27 526.6,203.27 526.6,202.83 527.6,202.83 527.6,201.40 528.6,201.40 528.6,202.91 529.6,202.91 529.6,202.81 530.6,202.81 530.6,203.09 531.6,203.09 531.6,202.82 532.6,202.82 532.6,202.93 533.6,202.93 533.6,202.76 534.6,202.76 534.6,203.18 535.6,203.18 535.6,202.85 536.6,202.85 536.6,198.10 537.6,198.10 537.6,198.10 538.6,198.10 538.6,198.10 539.6,198.10 539.6,202.33 540.6,202.33 540.6,202.72 541.6,202.72 541.6,202.48 542.6,202.48 542.6,202.69 543.6,202.69 543.6,202.97 544.6,202.97 544.6,203.09 545.6,203.09 545.6,202.64 546.6,202.64 546.6,202.99 547.6,202.99 547.6,203.28 548.6,203.28 548.6,203.10 549.6,203.10 549.6,203.02 550.6,203.02 550.6,203.17 551.6,203.17 551.6,202.97 552.6,202.97 552.6,202.40 553.6,202.40 553.6,203.14 554.6,203.14 554.6,202.91 555.6,202.91 555.6,203.11 556.6,203.11 556.6,202.92 557.6,202.92 557.6,202.47 558.6,202.47 558.6,197.60 559.6,197.60 559.6,197.60 560.6,197.60 560.6,197.60 561.6,197.60 561.6,202.27 562.6,202.27 562.6,202.31 563.6,202.31 563.6,202.70 564.6,202.70 564.6,202.46 565.6,202.46 565.6,202.59 566.6,202.59 566.6,202.72 567.6,202.72 567.6,202.73 568.6,202.73 568.6,202.72 569.6,202.72 569.6,203.04 570.6,203.04 570.6,203.27 571.6,203.27 571.6,202.83 572.6,202.83 572.6,202.75 573.6,202.75 573.6,202.67 574.6,202.67 574.6,202.71 575.4,205.00" fill="#6d1f62" fill-opacity=".45"/><polyline points="48.6,203.21 49.6,203.21 49.6,202.58 50.6,202.58 50.6,202.60 51.6,202.60 51.6,203.26 52.6,203.26 52.6,202.80 53.6,202.80 53.6,198.60 54.6,198.60 54.6,198.60 55.6,198.60 55.6,198.60 56.6,198.60 56.6,202.15 57.6,202.15 57.6,202.61 58.6,202.61 58.6,202.59 59.6,202.59 59.6,202.47 60.6,202.47 60.6,202.75 61.6,202.75 61.6,202.82 62.6,202.82 62.6,202.77 63.6,202.77 63.6,202.97 64.6,202.97 64.6,203.13 65.6,203.13 65.6,202.65 66.6,202.65 66.6,202.61 67.6,202.61 67.6,202.84 68.6,202.84 68.6,203.11 69.6,203.11 69.6,202.95 70.6,202.95 70.6,202.73 71.6,202.73 71.6,203.26 72.6,203.26 72.6,202.70 73.6,202.70 73.6,202.67 74.6,202.67 74.6,202.62 75.6,202.62 75.6,198.10 76.6,198.10 76.6,198.10 77.6,198.10 77.6,198.10 78.6,198.10 78.6,202.10 79.6,202.10 79.6,202.56 80.6,202.56 80.6,202.29 81.6,202.29 81.6,202.41 82.6,202.41 82.6,202.32 83.6,202.32 83.6,202.70 84.6,202.70 84.6,202.86 85.6,202.86 85.6,202.98 86.6,202.98 86.6,203.27 87.6,203.27 87.6,202.78 88.6,202.78 88.6,203.06 89.6,203.06 89.6,203.26 90.6,203.26 90.6,202.80 91.6,202.80 91.6,202.90 92.6,202.90 92.6,202.68 93.6,202.68 93.6,202.93 94.6,202.93 94.6,202.69 95.6,202.69 95.6,202.39 96.6,202.39 96.6,203.01 97.6,203.01 97.6,197.60 98.6,197.60 98.6,197.60 99.6,197.60 99.6,197.60 100.6,197.60 100.6,202.62 101.6,202.62 101.6,202.21 102.6,202.21 102.6,202.20 103.6,202.20 103.6,202.60 104.6,202.60 104.6,202.88 105.6,202.88 105.6,202.59 106.6,202.59 106.6,202.76 107.6,202.76 107.6,203.08 108.6,203.08 108.6,202.73 109.6,202.73 109.6,202.73 110.6,202.73 110.6,202.71 111.6,202.71 111.6,203.17 112.6,203.17 112.6,202.78 113.6,202.78 113.6,202.80 114.6,202.80 114.6,202.82 115.6,202.82 115.6,202.75 116.6,202.75 116.6,203.01 117.6,203.01 117.6,203.10 118.6,203.10 118.6,203.06 119.6,203.06 119.6,198.60 120.6,198.60 120.6,198.60 121.6,198.60 121.6,198.60 122.6,198.60 122.6,202.24 123.6,202.24 123.6,199.70 124.6,199.70 124.6,202.51 125.6,202.51 125.6,202.40 126.6,202.40 126.6,202.47 127.6,202.47 127.6,202.36 128.6,202.36 128.6,203.13 129.6,203.13 129.6,203.03 130.6,203.03 130.6,203.05 131.6,203.05 131.6,202.98 132.6,202.98 132.6,202.64 133.6,202.64 133.6,202.42 134.6,202.42 134.6,202.86 135.6,202.86 135.6,202.99 136.6,202.99 136.6,203.24 137.6,203.24 137.6,202.73 138.6,202.73 138.6,202.96 139.6,202.96 139.6,203.03 140.6,203.03 140.6,202.99 141.6,202.99 141.6,202.98 142.6,202.98 142.6,202.88 143.6,202.88 143.6,203.14 144.6,203.14 144.6,202.80 145.6,202.80 145.6,202.63 146.6,202.63 146.6,202.86 147.6,202.86 147.6,202.76 148.6,202.76 148.6,202.90 149.6,202.90 149.6,202.72 150.6,202.72 150.6,203.06 151.6,203.06 151.6,202.80 152.6,202.80 152.6,202.99 153.6,202.99 153.6,202.71 154.6,202.71 154.6,202.57 155.6,202.57 155.6,202.70 156.6,202.70 156.6,203.26 157.6,203.26 157.6,202.72 158.6,202.72 158.6,202.88 159.6,202.88 159.6,202.82 160.6,202.82 160.6,202.81 161.6,202.81 161.6,202.35 162.6,202.35 162.6,203.25 163.6,203.25 163.6,197.60 164.6,197.60 164.6,197.60 165.6,197.60 165.6,197.60 166.6,197.60 166.6,202.38 167.6,202.38 167.6,202.19 168.6,202.19 168.6,202.12 169.6,202.12 169.6,202.43 170.6,202.43 170.6,202.44 171.6,202.44 171.6,202.95 172.6,202.95 172.6,200.73 173.6,200.73 173.6,202.46 174.6,202.46 174.6,202.62 175.6,202.62 175.6,202.41 176.6,202.41 176.6,202.80 177.6,202.80 177.6,202.89 178.6,202.89 178.6,202.80 179.6,202.80 179.6,203.06 180.6,203.06 180.6,202.82 181.6,202.82 181.6,203.15 182.6,203.15 182.6,202.40 183.6,202.40 183.6,203.13 184.6,203.13 184.6,202.62 185.6,202.62 185.6,198.60 186.6,198.60 186.6,198.60 187.6,198.60 187.6,198.60 188.6,198.60 188.6,202.02 189.6,202.02 189.6,202.63 190.6,202.63 190.6,202.28 191.6,202.28 191.6,202.91 192.6,202.91 192.6,202.89 193.6,202.89 193.6,202.67 194.6,202.67 194.6,202.69 195.6,202.69 195.6,202.71 196.6,202.71 196.6,202.91 197.6,202.91 197.6,202.76 198.6,202.76 198.6,202.81 199.6,202.81 199.6,203.00 200.6,203.00 200.6,202.80 201.6,202.80 201.6,202.89 202.6,202.89 202.6,202.88 203.6,202.88 203.6,203.24 204.6,203.24 204.6,202.92 205.6,202.92 205.6,200.31 206.6,200.31 206.6,203.00 207.6,203.00 207.6,198.10 208.6,198.10 208.6,198.10 209.6,198.10 209.6,198.10 210.6,198.10 210.6,202.36 211.6,202.36 211.6,202.34 212.6,202.34 212.6,202.46 213.6,202.46 213.6,202.39 214.6,202.39 214.6,201.10 215.6,201.10 215.6,202.33 216.6,202.33 216.6,203.05 217.6,203.05 217.6,203.02 218.6,203.02 218.6,203.18 219.6,203.18 219.6,203.29 220.6,203.29 220.6,202.72 221.6,202.72 221.6,202.77 222.6,202.77 222.6,202.55 223.6,202.55 223.6,202.73 224.6,202.73 224.6,202.99 225.6,202.99 225.6,203.16 226.6,203.16 226.6,201.05 227.6,201.05 227.6,203.12 228.6,203.12 228.6,203.11 229.6,203.11 229.6,197.60 230.6,197.60 230.6,197.60 231.6,197.60 231.6,197.60 232.6,197.60 232.6,202.06 233.6,202.06 233.6,202.50 234.6,202.50 234.6,202.39 235.6,202.39 235.6,201.98 236.6,201.98 236.6,202.33 237.6,202.33 237.6,202.56 238.6,202.56 238.6,202.85 239.6,202.85 239.6,202.97 240.6,202.97 240.6,202.46 241.6,202.46 241.6,202.91 242.6,202.91 242.6,202.34 243.6,202.34 243.6,203.09 244.6,203.09 244.6,202.71 245.6,202.71 245.6,203.12 246.6,203.12 246.6,203.20 247.6,203.20 247.6,202.36 248.6,202.36 248.6,202.36 249.6,202.36 249.6,203.22 250.6,203.22 250.6,202.69 251.6,202.69 251.6,198.60 252.6,198.60 252.6,198.60 253.6,198.60 253.6,198.60 254.6,198.60 254.6,202.63 255.6,202.63 255.6,202.69 256.6,202.69 256.6,202.34 257.6,202.34 257.6,202.40 258.6,202.40 258.6,202.47 259.6,202.47 259.6,203.13 260.6,203.13 260.6,202.70 261.6,202.70 261.6,203.30 262.6,203.30 262.6,202.80 263.6,202.80 263.6,203.15 264.6,203.15 264.6,202.59 265.6,202.59 265.6,202.87 266.6,202.87 266.6,203.03 267.6,203.03 267.6,202.43 268.6,202.43 268.6,202.91 269.6,202.91 269.6,202.75 270.6,202.75 270.6,203.23 271.6,203.23 271.6,202.95 272.6,202.95 272.6,200.59 273.6,200.59 273.6,198.10 274.6,198.10 274.6,198.10 275.6,198.10 275.6,198.10 276.6,198.10 276.6,202.66 277.6,202.66 277.6,202.51 278.6,202.51 278.6,202.31 279.6,202.31 279.6,202.35 280.6,202.35 280.6,202.93 281.6,202.93 281.6,202.84 282.6,202.84 282.6,203.05 283.6,203.05 283.6,202.77 284.6,202.77 284.6,202.33 285.6,202.33 285.6,202.77 286.6,202.77 286.6,202.73 287.6,202.73 287.6,203.17 288.6,203.17 288.6,202.87 289.6,202.87 289.6,202.76 290.6,202.76 290.6,202.70 291.6,202.70 291.6,203.19 292.6,203.19 292.6,203.28 293.6,203.28 293.6,203.08 294.6,203.08 294.6,202.90 295.6,202.90 295.6,197.60 296.6,197.60 296.6,197.60 297.6,197.60 297.6,197.60 298.6,197.60 298.6,201.99 299.6,201.99 299.6,202.65 300.6,202.65 300.6,202.85 301.6,202.85 301.6,202.50 302.6,202.50 302.6,202.62 303.6,202.62 303.6,202.30 304.6,202.30 304.6,203.08 305.6,203.08 305.6,203.14 306.6,203.14 306.6,200.50 307.6,200.50 307.6,202.92 308.6,202.92 308.6,202.76 309.6,202.76 309.6,202.73 310.6,202.73 310.6,202.64 311.6,202.64 311.6,203.19 312.6,203.19 312.6,202.81 313.6,202.81 313.6,203.10 314.6,203.10 314.6,202.83 315.6,202.83 315.6,202.45 316.6,202.45 316.6,202.88 317.6,202.88 317.6,198.60 318.6,198.60 318.6,198.60 319.6,198.60 319.6,198.60 320.6,198.60 320.6,202.54 321.6,202.54 321.6,202.37 322.6,202.37 322.6,202.47 323.6,202.47 323.6,202.79 324.6,202.79 324.6,202.62 325.6,202.62 325.6,202.61 326.6,202.61 326.6,202.90 327.6,202.90 327.6,202.70 328.6,202.70 328.6,202.41 329.6,202.41 329.6,203.24 330.6,203.24 330.6,202.80 331.6,202.80 331.6,202.72 332.6,202.72 332.6,202.32 333.6,202.32 333.6,203.08 334.6,203.08 334.6,203.14 335.6,203.14 335.6,203.24 336.6,203.24 336.6,203.17 337.6,203.17 337.6,202.78 338.6,202.78 338.6,202.91 339.6,202.91 339.6,198.10 340.6,198.10 340.6,198.10 341.6,198.10 341.6,198.10 342.6,198.10 342.6,202.05 343.6,202.05 343.6,202.73 344.6,202.73 344.6,202.63 345.6,202.63 345.6,202.40 346.6,202.40 346.6,202.85 347.6,202.85 347.6,202.56 348.6,202.56 348.6,202.42 349.6,202.42 349.6,202.36 350.6,202.36 350.6,203.06 351.6,203.06 351.6,200.88 352.6,200.88 352.6,202.75 353.6,202.75 353.6,203.08 354.6,203.08 354.6,202.73 355.6,202.73 355.6,203.23 356.6,203.23 356.6,202.72 357.6,202.72 357.6,202.33 358.6,202.33 358.6,203.27 359.6,203.27 359.6,202.76 360.6,202.76 360.6,203.20 361.6,203.20 361.6,197.60 362.6,197.60 362.6,197.60 363.6,197.60 363.6,197.60 364.6,197.60 364.6,202.14 365.6,202.14 365.6,202.76 366.6,202.76 366.6,202.86 367.6,202.86 367.6,202.21 368.6,202.21 368.6,202.88 369.6,202.88 369.6,202.91 370.6,202.91 370.6,202.99 371.6,202.99 371.6,203.01 372.6,203.01 372.6,202.83 373.6,202.83 373.6,202.62 374.6,202.62 374.6,202.64 375.6,202.64 375.6,202.99 376.6,202.99 376.6,203.25 377.6,203.25 377.6,202.99 378.6,202.99 378.6,203.07 379.6,203.07 379.6,202.39 380.6,202.39 380.6,202.81 381.6,202.81 381.6,203.00 382.6,203.00 382.6,203.20 383.6,203.20 383.6,198.60 384.6,198.60 384.6,198.60 385.6,198.60 385.6,201.71 386.6,201.71 386.6,202.14 387.6,202.14 387.6,202.09 388.6,202.09 388.6,202.37 389.6,202.37 389.6,202.57 390.6,202.57 390.6,202.20 391.6,202.20 391.6,202.79 392.6,202.79 392.6,202.93 393.6,202.93 393.6,203.24 394.6,203.24 394.6,203.06 395.6,203.06 395.6,202.31 396.6,202.31 396.6,202.84 397.6,202.84 397.6,202.45 398.6,202.45 398.6,203.15 399.6,203.15 399.6,202.95 400.6,202.95 400.6,203.30 401.6,203.30 401.6,202.53 402.6,202.53 402.6,202.76 403.6,202.76 403.6,202.51 404.6,202.51 404.6,202.69 405.6,202.69 405.6,198.10 406.6,198.10 406.6,198.10 407.6,198.10 407.6,202.52 408.6,202.52 408.6,202.21 409.6,202.21 409.6,202.27 410.6,202.27 410.6,200.26 411.6,200.26 411.6,202.77 412.6,202.77 412.6,202.52 413.6,202.52 413.6,202.23 414.6,202.23 414.6,203.02 415.6,203.02 415.6,200.11 416.6,200.11 416.6,203.21 417.6,203.21 417.6,203.00 418.6,203.00 418.6,203.20 419.6,203.20 419.6,203.27 420.6,203.27 420.6,200.10 421.6,200.10 421.6,203.02 422.6,203.02 422.6,203.16 423.6,203.16 423.6,202.88 424.6,202.88 424.6,202.88 425.6,202.88 425.6,203.14 426.6,203.14 426.6,202.83 427.6,202.83 427.6,197.60 428.6,197.60 428.6,195.71 429.6,195.71 429.6,201.76 430.6,201.76 430.6,202.51 431.6,202.51 431.6,202.66 432.6,202.66 432.6,202.48 433.6,202.48 433.6,202.71 434.6,202.71 434.6,202.57 435.6,202.57 435.6,202.83 436.6,202.83 436.6,202.50 437.6,202.50 437.6,203.21 438.6,203.21 438.6,202.34 439.6,202.34 439.6,202.88 440.6,202.88 440.6,202.92 441.6,202.92 441.6,203.26 442.6,203.26 442.6,202.81 443.6,202.81 443.6,203.26 444.6,203.26 444.6,202.73 445.6,202.73 445.6,202.83 446.6,202.83 446.6,202.81 447.6,202.81 447.6,202.92 448.6,202.92 448.6,202.84 449.6,202.84 449.6,198.60 450.6,198.60 450.6,198.60 451.6,198.60 451.6,202.39 452.6,202.39 452.6,202.41 453.6,202.41 453.6,202.78 454.6,202.78 454.6,202.43 455.6,202.43 455.6,202.67 456.6,202.67 456.6,203.03 457.6,203.03 457.6,202.78 458.6,202.78 458.6,200.45 459.6,200.45 459.6,202.82 460.6,202.82 460.6,203.09 461.6,203.09 461.6,202.33 462.6,202.33 462.6,202.48 463.6,202.48 463.6,202.52 464.6,202.52 464.6,202.88 465.6,202.88 465.6,203.09 466.6,203.09 466.6,202.77 467.6,202.77 467.6,203.28 468.6,203.28 468.6,202.36 469.6,202.36 469.6,202.77 470.6,202.77 470.6,198.10 471.6,198.10 471.6,198.10 472.6,198.10 472.6,198.10 473.6,198.10 473.6,202.17 474.6,202.17 474.6,202.25 475.6,202.25 475.6,202.13 476.6,202.13 476.6,202.39 477.6,202.39 477.6,202.49 478.6,202.49 478.6,202.54 479.6,202.54 479.6,203.09 480.6,203.09 480.6,202.30 481.6,202.30 481.6,202.32 482.6,202.32 482.6,202.71 483.6,202.71 483.6,203.04 484.6,203.04 484.6,203.24 485.6,203.24 485.6,203.28 486.6,203.28 486.6,202.88 487.6,202.88 487.6,203.02 488.6,203.02 488.6,203.06 489.6,203.06 489.6,203.04 490.6,203.04 490.6,203.05 491.6,203.05 491.6,202.77 492.6,202.77 492.6,197.60 493.6,197.60 493.6,197.60 494.6,197.60 494.6,197.60 495.6,197.60 495.6,202.20 496.6,202.20 496.6,202.06 497.6,202.06 497.6,202.57 498.6,202.57 498.6,202.80 499.6,202.80 499.6,202.77 500.6,202.77 500.6,203.07 501.6,203.07 501.6,202.32 502.6,202.32 502.6,203.23 503.6,203.23 503.6,202.87 504.6,202.87 504.6,202.80 505.6,202.80 505.6,202.73 506.6,202.73 506.6,203.06 507.6,203.06 507.6,202.31 508.6,202.31 508.6,202.74 509.6,202.74 509.6,202.65 510.6,202.65 510.6,203.09 511.6,203.09 511.6,202.46 512.6,202.46 512.6,203.17 513.6,203.17 513.6,203.17 514.6,203.17 514.6,198.60 515.6,198.60 515.6,198.60 516.6,198.60 516.6,198.60 517.6,198.60 517.6,202.14 518.6,202.14 518.6,201.99 519.6,201.99 519.6,202.60 520.6,202.60 520.6,202.29 521.6,202.29 521.6,200.31 522.6,200.31 522.6,202.55 523.6,202.55 523.6,202.94 524.6,202.94 524.6,203.07 525.6,203.07 525.6,203.27 526.6,203.27 526.6,202.83 527.6,202.83 527.6,201.40 528.6,201.40 528.6,202.91 529.6,202.91 529.6,202.81 530.6,202.81 530.6,203.09 531.6,203.09 531.6,202.82 532.6,202.82 532.6,202.93 533.6,202.93 533.6,202.76 534.6,202.76 534.6,203.18 535.6,203.18 535.6,202.85 536.6,202.85 536.6,198.10 537.6,198.10 537.6,198.10 538.6,198.10 538.6,198.10 539.6,198.10 539.6,202.33 540.6,202.33 540.6,202.72 541.6,202.72 541.6,202.48 542.6,202.48 542.6,202.69 543.6,202.69 543.6,202.97 544.6,202.97 544.6,203.09 545.6,203.09 545.6,202.64 546.6,202.64 546.6,202.99 547.6,202.99 547.6,203.28 548.6,203.28 548.6,203.10 549.6,203.10 549.6,203.02 550.6,203.02 550.6,203.17 551.6,203.17 551.6,202.97 552.6,202.97 552.6,202.40 553.6,202.40 553.6,203.14 554.6,203.14 554.6,202.91 555.6,202.91 555.6,203.11 556.6,203.11 556.6,202.92 557.6,202.92 557.6,202.47 558.6,202.47 558.6,197.60 559.6,197.60 559.6,197.60 560.6,197.60 560.6,197.60 561.6,197.60 561.6,202.27 562.6,202.27 562.6,202.31 563.6,202.31 563.6,202.70 564.6,202.70 564.6,202.46 565.6,202.46 565.6,202.59 566.6,202.59 566.6,202.72 567.6,202.72 567.6,202.73 568.6,202.73 568.6,202.72 569.6,202.72 569.6,203.04 570.6,203.04 570.6,203.27 571.6,203.27 571.6,202.83 572.6,202.83 572.6,202.75 573.6,202.75 573.6,202.67 574.6,202.67 574.6,202.71" fill="none" stroke="#8a2a7e" stroke-width="1"/><polygon points="48.6,205.00 48.6,204.20 49.6,204.20 49.6,203.80 50.6,203.80 50.6,203.80 51.6,203.80 51.6,204.20 52.6,204.20 52.6,204.20 53.6,204.20 53.6,199.80 54.6,199.80 54.6,199.80 55.6,199.80 55.6,199.80 56.6,199.80 56.6,203.80 57.6,203.80 57.6,204.20 58.6,204.20 58.6,204.20 59.6,204.20 59.6,203.80 60.6,203.80 60.6,204.20 61.6,204.20 61.6,204.20 62.6,204.20 62.6,204.20 63.6,204.20 63.6,204.20 64.6,204.20 64.6,204.20 65.6,204.20 65.6,203.80 66.6,203.80 66.6,203.80 67.6,203.80 67.6,204.20 68.6,204.20 68.6,204.20 69.6,204.20 69.6,204.20 70.6,204.20 70.6,204.20 71.6,204.20 71.6,204.20 72.6,204.20 72.6,204.20 73.6,204.20 73.6,203.80 74.6,203.80 74.6,203.80 75.6,203.80 75.6,199.30 76.6,199.30 76.6,199.30 77.6,199.30 77.6,199.30 78.6,199.30 78.6,204.20 79.6,204.20 79.6,204.20 80.6,204.20 80.6,204.20 81.6,204.20 81.6,203.80 82.6,203.80 82.6,203.80 83.6,203.80 83.6,203.80 84.6,203.80 84.6,204.20 85.6,204.20 85.6,204.20 86.6,204.20 86.6,204.20 87.6,204.20 87.6,204.20 88.6,204.20 88.6,204.20 89.6,204.20 89.6,204.20 90.6,204.20 90.6,203.80 91.6,203.80 91.6,203.80 92.6,203.80 92.6,203.80 93.6,203.80 93.6,204.20 94.6,204.20 94.6,203.80 95.6,203.80 95.6,203.80 96.6,203.80 96.6,204.20 97.6,204.20 97.6,198.80 98.6,198.80 98.6,198.80 99.6,198.80 99.6,198.80 100.6,198.80 100.6,204.20 101.6,204.20 101.6,204.20 102.6,204.20 102.6,203.80 103.6,203.80 103.6,204.20 104.6,204.20 104.6,204.20 105.6,204.20 105.6,204.20 106.6,204.20 106.6,204.20 107.6,204.20 107.6,204.20 108.6,204.20 108.6,203.80 109.6,203.80 109.6,204.20 110.6,204.20 110.6,204.20 111.6,204.20 111.6,204.20 112.6,204.20 112.6,203.80 113.6,203.80 113.6,204.20 114.6,204.20 114.6,204.20 115.6,204.20 115.6,204.20 116.6,204.20 116.6,204.20 117.6,204.20 117.6,204.20 118.6,204.20 118.6,204.20 119.6,204.20 119.6,199.80 120.6,199.80 120.6,199.80 121.6,199.80 121.6,199.80 122.6,199.80 122.6,204.20 123.6,204.20 123.6,204.20 124.6,204.20 124.6,204.20 125.6,204.20 125.6,204.20 126.6,204.20 126.6,203.80 127.6,203.80 127.6,203.80 128.6,203.80 128.6,204.20 129.6,204.20 129.6,204.20 130.6,204.20 130.6,204.20 131.6,204.20 131.6,204.20 132.6,204.20 132.6,203.80 133.6,203.80 133.6,203.80 134.6,203.80 134.6,204.20 135.6,204.20 135.6,204.20 136.6,204.20 136.6,204.20 137.6,204.20 137.6,203.80 138.6,203.80 138.6,204.20 139.6,204.20 139.6,204.20 140.6,204.20 140.6,204.20 141.6,204.20 141.6,204.20 142.6,204.20 142.6,204.20 143.6,204.20 143.6,204.20 144.6,204.20 144.6,204.20 145.6,204.20 145.6,203.80 146.6,203.80 146.6,203.80 147.6,203.80 147.6,204.20 148.6,204.20 148.6,204.20 149.6,204.20 149.6,204.20 150.6,204.20 150.6,204.20 151.6,204.20 151.6,204.20 152.6,204.20 152.6,204.20 153.6,204.20 153.6,203.80 154.6,203.80 154.6,203.80 155.6,203.80 155.6,203.80 156.6,203.80 156.6,204.20 157.6,204.20 157.6,204.20 158.6,204.20 158.6,203.80 159.6,203.80 159.6,203.80 160.6,203.80 160.6,204.20 161.6,204.20 161.6,203.80 162.6,203.80 162.6,204.20 163.6,204.20 163.6,198.80 164.6,198.80 164.6,198.80 165.6,198.80 165.6,198.80 166.6,198.80 166.6,204.20 167.6,204.20 167.6,204.20 168.6,204.20 168.6,203.80 169.6,203.80 169.6,203.80 170.6,203.80 170.6,203.80 171.6,203.80 171.6,204.20 172.6,204.20 172.6,203.80 173.6,203.80 173.6,203.80 174.6,203.80 174.6,203.80 175.6,203.80 175.6,203.80 176.6,203.80 176.6,204.20 177.6,204.20 177.6,204.20 178.6,204.20 178.6,204.20 179.6,204.20 179.6,204.20 180.6,204.20 180.6,203.80 181.6,203.80 181.6,204.20 182.6,204.20 182.6,203.80 183.6,203.80 183.6,204.20 184.6,204.20 184.6,203.80 185.6,203.80 185.6,199.80 186.6,199.80 186.6,199.80 187.6,199.80 187.6,199.80 188.6,199.80 188.6,203.80 189.6,203.80 189.6,204.20 190.6,204.20 190.6,203.80 191.6,203.80 191.6,204.20 192.6,204.20 192.6,204.20 193.6,204.20 193.6,204.20 194.6,204.20 194.6,204.20 195.6,204.20 195.6,204.20 196.6,204.20 196.6,204.20 197.6,204.20 197.6,204.20 198.6,204.20 198.6,204.20 199.6,204.20 199.6,204.20 200.6,204.20 200.6,204.20 201.6,204.20 201.6,204.20 202.6,204.20 202.6,203.80 203.6,203.80 203.6,204.20 204.6,204.20 204.6,204.20 205.6,204.20 205.6,204.20 206.6,204.20 206.6,204.20 207.6,204.20 207.6,199.30 208.6,199.30 208.6,199.30 209.6,199.30 209.6,199.30 210.6,199.30 210.6,204.20 211.6,204.20 211.6,204.20 212.6,204.20 212.6,204.20 213.6,204.20 213.6,203.80 214.6,203.80 214.6,204.20 215.6,204.20 215.6,203.80 216.6,203.80 216.6,204.20 217.6,204.20 217.6,204.20 218.6,204.20 218.6,204.20 219.6,204.20 219.6,204.20 220.6,204.20 220.6,204.20 221.6,204.20 221.6,203.80 222.6,203.80 222.6,203.80 223.6,203.80 223.6,204.20 224.6,204.20 224.6,204.20 225.6,204.20 225.6,204.20 226.6,204.20 226.6,204.20 227.6,204.20 227.6,204.20 228.6,204.20 228.6,204.20 229.6,204.20 229.6,198.80 230.6,198.80 230.6,198.80 231.6,198.80 231.6,198.80 232.6,198.80 232.6,204.20 233.6,204.20 233.6,204.20 234.6,204.20 234.6,203.80 235.6,203.80 235.6,203.80 236.6,203.80 236.6,203.80 237.6,203.80 237.6,204.20 238.6,204.20 238.6,204.20 239.6,204.20 239.6,204.20 240.6,204.20 240.6,203.80 241.6,203.80 241.6,204.20 242.6,204.20 242.6,203.80 243.6,203.80 243.6,204.20 244.6,204.20 244.6,204.20 245.6,204.20 245.6,204.20 246.6,204.20 246.6,204.20 247.6,204.20 247.6,203.80 248.6,203.80 248.6,203.80 249.6,203.80 249.6,204.20 250.6,204.20 250.6,203.80 251.6,203.80 251.6,199.80 252.6,199.80 252.6,199.80 253.6,199.80 253.6,199.80 254.6,199.80 254.6,204.20 255.6,204.20 255.6,204.20 256.6,204.20 256.6,204.20 257.6,204.20 257.6,203.80 258.6,203.80 258.6,204.20 259.6,204.20 259.6,204.20 260.6,204.20 260.6,204.20 261.6,204.20 261.6,204.20 262.6,204.20 262.6,204.20 263.6,204.20 263.6,204.20 264.6,204.20 264.6,203.80 265.6,203.80 265.6,204.20 266.6,204.20 266.6,204.20 267.6,204.20 267.6,203.80 268.6,203.80 268.6,204.20 269.6,204.20 269.6,203.80 270.6,203.80 270.6,204.20 271.6,204.20 271.6,204.20 272.6,204.20 272.6,203.80 273.6,203.80 273.6,199.30 274.6,199.30 274.6,199.30 275.6,199.30 275.6,199.30 276.6,199.30 276.6,204.20 277.6,204.20 277.6,204.20 278.6,204.20 278.6,204.20 279.6,204.20 279.6,203.80 280.6,203.80 280.6,204.20 281.6,204.20 281.6,204.20 282.6,204.20 282.6,204.20 283.6,204.20 283.6,203.80 284.6,203.80 284.6,203.80 285.6,203.80 285.6,203.80 286.6,203.80 286.6,204.20 287.6,204.20 287.6,204.20 288.6,204.20 288.6,203.80 289.6,203.80 289.6,204.20 290.6,204.20 290.6,204.20 291.6,204.20 291.6,204.20 292.6,204.20 292.6,204.20 293.6,204.20 293.6,204.20 294.6,204.20 294.6,203.80 295.6,203.80 295.6,198.80 296.6,198.80 296.6,198.80 297.6,198.80 297.6,198.80 298.6,198.80 298.6,203.80 299.6,203.80 299.6,204.20 300.6,204.20 300.6,204.20 301.6,204.20 301.6,204.20 302.6,204.20 302.6,203.80 303.6,203.80 303.6,203.80 304.6,203.80 304.6,204.20 305.6,204.20 305.6,204.20 306.6,204.20 306.6,204.20 307.6,204.20 307.6,204.20 308.6,204.20 308.6,203.80 309.6,203.80 309.6,204.20 310.6,204.20 310.6,203.80 311.6,203.80 311.6,204.20 312.6,204.20 312.6,204.20 313.6,204.20 313.6,204.20 314.6,204.20 314.6,204.20 315.6,204.20 315.6,203.80 316.6,203.80 316.6,203.80 317.6,203.80 317.6,199.80 318.6,199.80 318.6,199.80 319.6,199.80 319.6,199.80 320.6,199.80 320.6,204.20 321.6,204.20 321.6,204.20 322.6,204.20 322.6,204.20 323.6,204.20 323.6,204.20 324.6,204.20 324.6,204.20 325.6,204.20 325.6,203.80 326.6,203.80 326.6,204.20 327.6,204.20 327.6,204.20 328.6,204.20 328.6,203.80 329.6,203.80 329.6,204.20 330.6,204.20 330.6,204.20 331.6,204.20 331.6,203.80 332.6,203.80 332.6,203.80 333.6,203.80 333.6,204.20 334.6,204.20 334.6,204.20 335.6,204.20 335.6,204.20 336.6,204.20 336.6,204.20 337.6,204.20 337.6,203.80 338.6,203.80 338.6,204.20 339.6,204.20 339.6,199.30 340.6,199.30 340.6,199.30 341.6,199.30 341.6,199.30 342.6,199.30 342.6,203.80 343.6,203.80 343.6,204.20 344.6,204.20 344.6,204.20 345.6,204.20 345.6,204.20 346.6,204.20 346.6,204.20 347.6,204.20 347.6,204.20 348.6,204.20 348.6,203.80 349.6,203.80 349.6,203.80 350.6,203.80 350.6,204.20 351.6,204.20 351.6,204.20 352.6,204.20 352.6,204.20 353.6,204.20 353.6,204.20 354.6,204.20 354.6,203.80 355.6,203.80 355.6,204.20 356.6,204.20 356.6,204.20 357.6,204.20 357.6,203.80 358.6,203.80 358.6,204.20 359.6,204.20 359.6,204.20 360.6,204.20 360.6,204.20 361.6,204.20 361.6,198.80 362.6,198.80 362.6,198.80 363.6,198.80 363.6,198.80 364.6,198.80 364.6,203.80 365.6,203.80 365.6,204.20 366.6,204.20 366.6,204.20 367.6,204.20 367.6,203.80 368.6,203.80 368.6,204.20 369.6,204.20 369.6,204.20 370.6,204.20 370.6,204.20 371.6,204.20 371.6,204.20 372.6,204.20 372.6,204.20 373.6,204.20 373.6,203.80 374.6,203.80 374.6,203.80 375.6,203.80 375.6,204.20 376.6,204.20 376.6,204.20 377.6,204.20 377.6,204.20 378.6,204.20 378.6,204.20 379.6,204.20 379.6,203.80 380.6,203.80 380.6,204.20 381.6,204.20 381.6,204.20 382.6,204.20 382.6,204.20 383.6,204.20 383.6,199.80 384.6,199.80 384.6,199.80 385.6,199.80 385.6,203.80 386.6,203.80 386.6,204.20 387.6,204.20 387.6,203.80 388.6,203.80 388.6,203.80 389.6,203.80 389.6,204.20 390.6,204.20 390.6,203.80 391.6,203.80 391.6,204.20 392.6,204.20 392.6,204.20 393.6,204.20 393.6,204.20 394.6,204.20 394.6,204.20 395.6,204.20 395.6,203.80 396.6,203.80 396.6,204.20 397.6,204.20 397.6,203.80 398.6,203.80 398.6,204.20 399.6,204.20 399.6,204.20 400.6,204.20 400.6,204.20 401.6,204.20 401.6,203.80 402.6,203.80 402.6,204.20 403.6,204.20 403.6,203.80 404.6,203.80 404.6,203.80 405.6,203.80 405.6,199.30 406.6,199.30 406.6,199.30 407.6,199.30 407.6,204.20 408.6,204.20 408.6,203.80 409.6,203.80 409.6,204.20 410.6,204.20 410.6,204.20 411.6,204.20 411.6,204.20 412.6,204.20 412.6,204.20 413.6,204.20 413.6,203.80 414.6,203.80 414.6,204.20 415.6,204.20 415.6,203.80 416.6,203.80 416.6,204.20 417.6,204.20 417.6,204.20 418.6,204.20 418.6,204.20 419.6,204.20 419.6,204.20 420.6,204.20 420.6,204.20 421.6,204.20 421.6,204.20 422.6,204.20 422.6,204.20 423.6,204.20 423.6,203.80 424.6,203.80 424.6,204.20 425.6,204.20 425.6,204.20 426.6,204.20 426.6,204.20 427.6,204.20 427.6,198.80 428.6,198.80 428.6,198.80 429.6,198.80 429.6,203.80 430.6,203.80 430.6,204.20 431.6,204.20 431.6,204.20 432.6,204.20 432.6,204.20 433.6,204.20 433.6,204.20 434.6,204.20 434.6,204.20 435.6,204.20 435.6,204.20 436.6,204.20 436.6,203.80 437.6,203.80 437.6,204.20 438.6,204.20 438.6,203.80 439.6,203.80 439.6,203.80 440.6,203.80 440.6,204.20 441.6,204.20 441.6,204.20 442.6,204.20 442.6,204.20 443.6,204.20 443.6,204.20 444.6,204.20 444.6,204.20 445.6,204.20 445.6,203.80 446.6,203.80 446.6,204.20 447.6,204.20 447.6,204.20 448.6,204.20 448.6,203.80 449.6,203.80 449.6,199.80 450.6,199.80 450.6,199.80 451.6,199.80 451.6,204.20 452.6,204.20 452.6,204.20 453.6,204.20 453.6,204.20 454.6,204.20 454.6,204.20 455.6,204.20 455.6,204.20 456.6,204.20 456.6,204.20 457.6,204.20 457.6,203.80 458.6,203.80 458.6,204.20 459.6,204.20 459.6,204.20 460.6,204.20 460.6,204.20 461.6,204.20 461.6,203.80 462.6,203.80 462.6,203.80 463.6,203.80 463.6,203.80 464.6,203.80 464.6,204.20 465.6,204.20 465.6,204.20 466.6,204.20 466.6,204.20 467.6,204.20 467.6,204.20 468.6,204.20 468.6,203.80 469.6,203.80 469.6,204.20 470.6,204.20 470.6,199.30 471.6,199.30 471.6,199.30 472.6,199.30 472.6,199.30 473.6,199.30 473.6,204.20 474.6,204.20 474.6,204.20 475.6,204.20 475.6,203.80 476.6,203.80 476.6,203.80 477.6,203.80 477.6,204.20 478.6,204.20 478.6,203.80 479.6,203.80 479.6,204.20 480.6,204.20 480.6,203.80 481.6,203.80 481.6,203.80 482.6,203.80 482.6,204.20 483.6,204.20 483.6,204.20 484.6,204.20 484.6,204.20 485.6,204.20 485.6,204.20 486.6,204.20 486.6,204.20 487.6,204.20 487.6,204.20 488.6,204.20 488.6,204.20 489.6,204.20 489.6,204.20 490.6,204.20 490.6,204.20 491.6,204.20 491.6,204.20 492.6,204.20 492.6,198.80 493.6,198.80 493.6,198.80 494.6,198.80 494.6,198.80 495.6,198.80 495.6,204.20 496.6,204.20 496.6,203.80 497.6,203.80 497.6,204.20 498.6,204.20 498.6,204.20 499.6,204.20 499.6,204.20 500.6,204.20 500.6,204.20 501.6,204.20 501.6,203.80 502.6,203.80 502.6,204.20 503.6,204.20 503.6,204.20 504.6,204.20 504.6,204.20 505.6,204.20 505.6,204.20 506.6,204.20 506.6,204.20 507.6,204.20 507.6,203.80 508.6,203.80 508.6,203.80 509.6,203.80 509.6,203.80 510.6,203.80 510.6,204.20 511.6,204.20 511.6,203.80 512.6,203.80 512.6,204.20 513.6,204.20 513.6,204.20 514.6,204.20 514.6,199.80 515.6,199.80 515.6,199.80 516.6,199.80 516.6,199.80 517.6,199.80 517.6,204.20 518.6,204.20 518.6,203.80 519.6,203.80 519.6,204.20 520.6,204.20 520.6,203.80 521.6,203.80 521.6,204.20 522.6,204.20 522.6,203.80 523.6,203.80 523.6,204.20 524.6,204.20 524.6,204.20 525.6,204.20 525.6,204.20 526.6,204.20 526.6,204.20 527.6,204.20 527.6,204.20 528.6,204.20 528.6,204.20 529.6,204.20 529.6,203.80 530.6,203.80 530.6,204.20 531.6,204.20 531.6,204.20 532.6,204.20 532.6,204.20 533.6,204.20 533.6,204.20 534.6,204.20 534.6,204.20 535.6,204.20 535.6,204.20 536.6,204.20 536.6,199.30 537.6,199.30 537.6,199.30 538.6,199.30 538.6,199.30 539.6,199.30 539.6,204.20 540.6,204.20 540.6,204.20 541.6,204.20 541.6,204.20 542.6,204.20 542.6,204.20 543.6,204.20 543.6,204.20 544.6,204.20 544.6,204.20 545.6,204.20 545.6,204.20 546.6,204.20 546.6,204.20 547.6,204.20 547.6,204.20 548.6,204.20 548.6,204.20 549.6,204.20 549.6,204.20 550.6,204.20 550.6,204.20 551.6,204.20 551.6,204.20 552.6,204.20 552.6,203.80 553.6,203.80 553.6,204.20 554.6,204.20 554.6,204.20 555.6,204.20 555.6,204.20 556.6,204.20 556.6,204.20 557.6,204.20 557.6,203.80 558.6,203.80 558.6,198.80 559.6,198.80 559.6,198.80 560.6,198.80 560.6,198.80 561.6,198.80 561.6,204.20 562.6,204.20 562.6,204.20 563.6,204.20 563.6,204.20 564.6,204.20 564.6,204.20 565.6,204.20 565.6,203.80 566.6,203.80 566.6,204.20 567.6,204.20 567.6,204.20 568.6,204.20 568.6,203.80 569.6,203.80 569.6,204.20 570.6,204.20 570.6,204.20 571.6,204.20 571.6,203.80 572.6,203.80 572.6,204.20 573.6,204.20 573.6,203.80 574.6,203.80 574.6,204.20 575.4,205.00" fill="#0a2c5a"/><polygon points="48.6,205.00 48.6,204.20 49.6,204.20 49.6,203.80 50.6,203.80 50.6,203.80 51.6,203.80 51.6,204.20 52.6,204.20 52.6,204.20 53.6,204.20 53.6,203.80 54.6,203.80 54.6,204.20 55.6,204.20 55.6,203.80 56.6,203.80 56.6,203.80 57.6,203.80 57.6,204.20 58.6,204.20 58.6,204.20 59.6,204.20 59.6,203.80 60.6,203.80 60.6,204.20 61.6,204.20 61.6,204.20 62.6,204.20 62.6,204.20 63.6,204.20 63.6,204.20 64.6,204.20 64.6,204.20 65.6,204.20 65.6,203.80 66.6,203.80 66.6,203.80 67.6,203.80 67.6,204.20 68.6,204.20 68.6,204.20 69.6,204.20 69.6,204.20 70.6,204.20 70.6,204.20 71.6,204.20 71.6,204.20 72.6,204.20 72.6,204.20 73.6,204.20 73.6,203.80 74.6,203.80 74.6,203.80 75.6,203.80 75.6,203.80 76.6,203.80 76.6,203.80 77.6,203.80 77.6,204.20 78.6,204.20 78.6,204.20 79.6,204.20 79.6,204.20 80.6,204.20 80.6,204.20 81.6,204.20 81.6,203.80 82.6,203.80 82.6,203.80 83.6,203.80 83.6,203.80 84.6,203.80 84.6,204.20 85.6,204.20 85.6,204.20 86.6,204.20 86.6,204.20 87.6,204.20 87.6,204.20 88.6,204.20 88.6,204.20 89.6,204.20 89.6,204.20 90.6,204.20 90.6,203.80 91.6,203.80 91.6,203.80 92.6,203.80 92.6,203.80 93.6,203.80 93.6,204.20 94.6,204.20 94.6,203.80 95.6,203.80 95.6,203.80 96.6,203.80 96.6,204.20 97.6,204.20 97.6,203.80 98.6,203.80 98.6,204.20 99.6,204.20 99.6,204.20 100.6,204.20 100.6,204.20 101.6,204.20 101.6,204.20 102.6,204.20 102.6,203.80 103.6,203.80 103.6,204.20 104.6,204.20 104.6,204.20 105.6,204.20 105.6,204.20 106.6,204.20 106.6,204.20 107.6,204.20 107.6,204.20 108.6,204.20 108.6,203.80 109.6,203.80 109.6,204.20 110.6,204.20 110.6,204.20 111.6,204.20 111.6,204.20 112.6,204.20 112.6,203.80 113.6,203.80 113.6,204.20 114.6,204.20 114.6,204.20 115.6,204.20 115.6,204.20 116.6,204.20 116.6,204.20 117.6,204.20 117.6,204.20 118.6,204.20 118.6,204.20 119.6,204.20 119.6,204.20 120.6,204.20 120.6,203.80 121.6,203.80 121.6,204.20 122.6,204.20 122.6,204.20 123.6,204.20 123.6,204.20 124.6,204.20 124.6,204.20 125.6,204.20 125.6,204.20 126.6,204.20 126.6,203.80 127.6,203.80 127.6,203.80 128.6,203.80 128.6,204.20 129.6,204.20 129.6,204.20 130.6,204.20 130.6,204.20 131.6,204.20 131.6,204.20 132.6,204.20 132.6,203.80 133.6,203.80 133.6,203.80 134.6,203.80 134.6,204.20 135.6,204.20 135.6,204.20 136.6,204.20 136.6,204.20 137.6,204.20 137.6,203.80 138.6,203.80 138.6,204.20 139.6,204.20 139.6,204.20 140.6,204.20 140.6,204.20 141.6,204.20 141.6,204.20 142.6,204.20 142.6,204.20 143.6,204.20 143.6,204.20 144.6,204.20 144.6,204.20 145.6,204.20 145.6,203.80 146.6,203.80 146.6,203.80 147.6,203.80 147.6,204.20 148.6,204.20 148.6,204.20 149.6,204.20 149.6,204.20 150.6,204.20 150.6,204.20 151.6,204.20 151.6,204.20 152.6,204.20 152.6,204.20 153.6,204.20 153.6,203.80 154.6,203.80 154.6,203.80 155.6,203.80 155.6,203.80 156.6,203.80 156.6,204.20 157.6,204.20 157.6,204.20 158.6,204.20 158.6,203.80 159.6,203.80 159.6,203.80 160.6,203.80 160.6,204.20 161.6,204.20 161.6,203.80 162.6,203.80 162.6,204.20 163.6,204.20 163.6,204.20 164.6,204.20 164.6,204.20 165.6,204.20 165.6,203.80 166.6,203.80 166.6,204.20 167.6,204.20 167.6,204.20 168.6,204.20 168.6,203.80 169.6,203.80 169.6,203.80 170.6,203.80 170.6,203.80 171.6,203.80 171.6,204.20 172.6,204.20 172.6,203.80 173.6,203.80 173.6,203.80 174.6,203.80 174.6,203.80 175.6,203.80 175.6,203.80 176.6,203.80 176.6,204.20 177.6,204.20 177.6,204.20 178.6,204.20 178.6,204.20 179.6,204.20 179.6,204.20 180.6,204.20 180.6,203.80 181.6,203.80 181.6,204.20 182.6,204.20 182.6,203.80 183.6,203.80 183.6,204.20 184.6,204.20 184.6,203.80 185.6,203.80 185.6,204.20 186.6,204.20 186.6,204.20 187.6,204.20 187.6,204.20 188.6,204.20 188.6,203.80 189.6,203.80 189.6,204.20 190.6,204.20 190.6,203.80 191.6,203.80 191.6,204.20 192.6,204.20 192.6,204.20 193.6,204.20 193.6,204.20 194.6,204.20 194.6,204.20 195.6,204.20 195.6,204.20 196.6,204.20 196.6,204.20 197.6,204.20 197.6,204.20 198.6,204.20 198.6,204.20 199.6,204.20 199.6,204.20 200.6,204.20 200.6,204.20 201.6,204.20 201.6,204.20 202.6,204.20 202.6,203.80 203.6,203.80 203.6,204.20 204.6,204.20 204.6,204.20 205.6,204.20 205.6,204.20 206.6,204.20 206.6,204.20 207.6,204.20 207.6,204.20 208.6,204.20 208.6,203.80 209.6,203.80 209.6,204.20 210.6,204.20 210.6,204.20 211.6,204.20 211.6,204.20 212.6,204.20 212.6,204.20 213.6,204.20 213.6,203.80 214.6,203.80 214.6,204.20 215.6,204.20 215.6,203.80 216.6,203.80 216.6,204.20 217.6,204.20 217.6,204.20 218.6,204.20 218.6,204.20 219.6,204.20 219.6,204.20 220.6,204.20 220.6,204.20 221.6,204.20 221.6,203.80 222.6,203.80 222.6,203.80 223.6,203.80 223.6,204.20 224.6,204.20 224.6,204.20 225.6,204.20 225.6,204.20 226.6,204.20 226.6,204.20 227.6,204.20 227.6,204.20 228.6,204.20 228.6,204.20 229.6,204.20 229.6,203.80 230.6,203.80 230.6,203.80 231.6,203.80 231.6,204.20 232.6,204.20 232.6,204.20 233.6,204.20 233.6,204.20 234.6,204.20 234.6,203.80 235.6,203.80 235.6,203.80 236.6,203.80 236.6,203.80 237.6,203.80 237.6,204.20 238.6,204.20 238.6,204.20 239.6,204.20 239.6,204.20 240.6,204.20 240.6,203.80 241.6,203.80 241.6,204.20 242.6,204.20 242.6,203.80 243.6,203.80 243.6,204.20 244.6,204.20 244.6,204.20 245.6,204.20 245.6,204.20 246.6,204.20 246.6,204.20 247.6,204.20 247.6,203.80 248.6,203.80 248.6,203.80 249.6,203.80 249.6,204.20 250.6,204.20 250.6,203.80 251.6,203.80 251.6,203.80 252.6,203.80 252.6,204.20 253.6,204.20 253.6,204.20 254.6,204.20 254.6,204.20 255.6,204.20 255.6,204.20 256.6,204.20 256.6,204.20 257.6,204.20 257.6,203.80 258.6,203.80 258.6,204.20 259.6,204.20 259.6,204.20 260.6,204.20 260.6,204.20 261.6,204.20 261.6,204.20 262.6,204.20 262.6,204.20 263.6,204.20 263.6,204.20 264.6,204.20 264.6,203.80 265.6,203.80 265.6,204.20 266.6,204.20 266.6,204.20 267.6,204.20 267.6,203.80 268.6,203.80 268.6,204.20 269.6,204.20 269.6,203.80 270.6,203.80 270.6,204.20 271.6,204.20 271.6,204.20 272.6,204.20 272.6,203.80 273.6,203.80 273.6,204.20 274.6,204.20 274.6,204.20 275.6,204.20 275.6,203.80 276.6,203.80 276.6,204.20 277.6,204.20 277.6,204.20 278.6,204.20 278.6,204.20 279.6,204.20 279.6,203.80 280.6,203.80 280.6,204.20 281.6,204.20 281.6,204.20 282.6,204.20 282.6,204.20 283.6,204.20 283.6,203.80 284.6,203.80 284.6,203.80 285.6,203.80 285.6,203.80 286.6,203.80 286.6,204.20 287.6,204.20 287.6,204.20 288.6,204.20 288.6,203.80 289.6,203.80 289.6,204.20 290.6,204.20 290.6,204.20 291.6,204.20 291.6,204.20 292.6,204.20 292.6,204.20 293.6,204.20 293.6,204.20 294.6,204.20 294.6,203.80 295.6,203.80 295.6,204.20 296.6,204.20 296.6,204.20 297.6,204.20 297.6,204.20 298.6,204.20 298.6,203.80 299.6,203.80 299.6,204.20 300.6,204.20 300.6,204.20 301.6,204.20 301.6,204.20 302.6,204.20 302.6,203.80 303.6,203.80 303.6,203.80 304.6,203.80 304.6,204.20 305.6,204.20 305.6,204.20 306.6,204.20 306.6,204.20 307.6,204.20 307.6,204.20 308.6,204.20 308.6,203.80 309.6,203.80 309.6,204.20 310.6,204.20 310.6,203.80 311.6,203.80 311.6,204.20 312.6,204.20 312.6,204.20 313.6,204.20 313.6,204.20 314.6,204.20 314.6,204.20 315.6,204.20 315.6,203.80 316.6,203.80 316.6,203.80 317.6,203.80 317.6,204.20 318.6,204.20 318.6,204.20 319.6,204.20 319.6,203.80 320.6,203.80 320.6,204.20 321.6,204.20 321.6,204.20 322.6,204.20 322.6,204.20 323.6,204.20 323.6,204.20 324.6,204.20 324.6,204.20 325.6,204.20 325.6,203.80 326.6,203.80 326.6,204.20 327.6,204.20 327.6,204.20 328.6,204.20 328.6,203.80 329.6,203.80 329.6,204.20 330.6,204.20 330.6,204.20 331.6,204.20 331.6,203.80 332.6,203.80 332.6,203.80 333.6,203.80 333.6,204.20 334.6,204.20 334.6,204.20 335.6,204.20 335.6,204.20 336.6,204.20 336.6,204.20 337.6,204.20 337.6,203.80 338.6,203.80 338.6,204.20 339.6,204.20 339.6,203.80 340.6,203.80 340.6,203.80 341.6,203.80 341.6,204.20 342.6,204.20 342.6,203.80 343.6,203.80 343.6,204.20 344.6,204.20 344.6,204.20 345.6,204.20 345.6,204.20 346.6,204.20 346.6,204.20 347.6,204.20 347.6,204.20 348.6,204.20 348.6,203.80 349.6,203.80 349.6,203.80 350.6,203.80 350.6,204.20 351.6,204.20 351.6,204.20 352.6,204.20 352.6,204.20 353.6,204.20 353.6,204.20 354.6,204.20 354.6,203.80 355.6,203.80 355.6,204.20 356.6,204.20 356.6,204.20 357.6,204.20 357.6,203.80 358.6,203.80 358.6,204.20 359.6,204.20 359.6,204.20 360.6,204.20 360.6,204.20 361.6,204.20 361.6,203.80 362.6,203.80 362.6,204.20 363.6,204.20 363.6,204.20 364.6,204.20 364.6,203.80 365.6,203.80 365.6,204.20 366.6,204.20 366.6,204.20 367.6,204.20 367.6,203.80 368.6,203.80 368.6,204.20 369.6,204.20 369.6,204.20 370.6,204.20 370.6,204.20 371.6,204.20 371.6,204.20 372.6,204.20 372.6,204.20 373.6,204.20 373.6,203.80 374.6,203.80 374.6,203.80 375.6,203.80 375.6,204.20 376.6,204.20 376.6,204.20 377.6,204.20 377.6,204.20 378.6,204.20 378.6,204.20 379.6,204.20 379.6,203.80 380.6,203.80 380.6,204.20 381.6,204.20 381.6,204.20 382.6,204.20 382.6,204.20 383.6,204.20 383.6,204.20 384.6,204.20 384.6,204.20 385.6,204.20 385.6,203.80 386.6,203.80 386.6,204.20 387.6,204.20 387.6,203.80 388.6,203.80 388.6,203.80 389.6,203.80 389.6,204.20 390.6,204.20 390.6,203.80 391.6,203.80 391.6,204.20 392.6,204.20 392.6,204.20 393.6,204.20 393.6,204.20 394.6,204.20 394.6,204.20 395.6,204.20 395.6,203.80 396.6,203.80 396.6,204.20 397.6,204.20 397.6,203.80 398.6,203.80 398.6,204.20 399.6,204.20 399.6,204.20 400.6,204.20 400.6,204.20 401.6,204.20 401.6,203.80 402.6,203.80 402.6,204.20 403.6,204.20 403.6,203.80 404.6,203.80 404.6,203.80 405.6,203.80 405.6,204.20 406.6,204.20 406.6,204.20 407.6,204.20 407.6,204.20 408.6,204.20 408.6,203.80 409.6,203.80 409.6,204.20 410.6,204.20 410.6,204.20 411.6,204.20 411.6,204.20 412.6,204.20 412.6,204.20 413.6,204.20 413.6,203.80 414.6,203.80 414.6,204.20 415.6,204.20 415.6,203.80 416.6,203.80 416.6,204.20 417.6,204.20 417.6,204.20 418.6,204.20 418.6,204.20 419.6,204.20 419.6,204.20 420.6,204.20 420.6,204.20 421.6,204.20 421.6,204.20 422.6,204.20 422.6,204.20 423.6,204.20 423.6,203.80 424.6,203.80 424.6,204.20 425.6,204.20 425.6,204.20 426.6,204.20 426.6,204.20 427.6,204.20 427.6,203.80 428.6,203.80 428.6,203.80 429.6,203.80 429.6,203.80 430.6,203.80 430.6,204.20 431.6,204.20 431.6,204.20 432.6,204.20 432.6,204.20 433.6,204.20 433.6,204.20 434.6,204.20 434.6,204.20 435.6,204.20 435.6,204.20 436.6,204.20 436.6,203.80 437.6,203.80 437.6,204.20 438.6,204.20 438.6,203.80 439.6,203.80 439.6,203.80 440.6,203.80 440.6,204.20 441.6,204.20 441.6,204.20 442.6,204.20 442.6,204.20 443.6,204.20 443.6,204.20 444.6,204.20 444.6,204.20 445.6,204.20 445.6,203.80 446.6,203.80 446.6,204.20 447.6,204.20 447.6,204.20 448.6,204.20 448.6,203.80 449.6,203.80 449.6,203.80 450.6,203.80 450.6,203.80 451.6,203.80 451.6,204.20 452.6,204.20 452.6,204.20 453.6,204.20 453.6,204.20 454.6,204.20 454.6,204.20 455.6,204.20 455.6,204.20 456.6,204.20 456.6,204.20 457.6,204.20 457.6,203.80 458.6,203.80 458.6,204.20 459.6,204.20 459.6,204.20 460.6,204.20 460.6,204.20 461.6,204.20 461.6,203.80 462.6,203.80 462.6,203.80 463.6,203.80 463.6,203.80 464.6,203.80 464.6,204.20 465.6,204.20 465.6,204.20 466.6,204.20 466.6,204.20 467.6,204.20 467.6,204.20 468.6,204.20 468.6,203.80 469.6,203.80 469.6,204.20 470.6,204.20 470.6,204.20 471.6,204.20 471.6,204.20 472.6,204.20 472.6,204.20 473.6,204.20 473.6,204.20 474.6,204.20 474.6,204.20 475.6,204.20 475.6,203.80 476.6,203.80 476.6,203.80 477.6,203.80 477.6,204.20 478.6,204.20 478.6,203.80 479.6,203.80 479.6,204.20 480.6,204.20 480.6,203.80 481.6,203.80 481.6,203.80 482.6,203.80 482.6,204.20 483.6,204.20 483.6,204.20 484.6,204.20 484.6,204.20 485.6,204.20 485.6,204.20 486.6,204.20 486.6,204.20 487.6,204.20 487.6,204.20 488.6,204.20 488.6,204.20 489.6,204.20 489.6,204.20 490.6,204.20 490.6,204.20 491.6,204.20 491.6,204.20 492.6,204.20 492.6,204.20 493.6,204.20 493.6,204.20 494.6,204.20 494.6,204.20 495.6,204.20 495.6,204.20 496.6,204.20 496.6,203.80 497.6,203.80 497.6,204.20 498.6,204.20 498.6,204.20 499.6,204.20 499.6,204.20 500.6,204.20 500.6,204.20 501.6,204.20 501.6,203.80 502.6,203.80 502.6,204.20 503.6,204.20 503.6,204.20 504.6,204.20 504.6,204.20 505.6,204.20 505.6,204.20 506.6,204.20 506.6,204.20 507.6,204.20 507.6,203.80 508.6,203.80 508.6,203.80 509.6,203.80 509.6,203.80 510.6,203.80 510.6,204.20 511.6,204.20 511.6,203.80 512.6,203.80 512.6,204.20 513.6,204.20 513.6,204.20 514.6,204.20 514.6,204.20 515.6,204.20 515.6,204.20 516.6,204.20 516.6,204.20 517.6,204.20 517.6,204.20 518.6,204.20 518.6,203.80 519.6,203.80 519.6,204.20 520.6,204.20 520.6,203.80 521.6,203.80 521.6,204.20 522.6,204.20 522.6,203.80 523.6,203.80 523.6,204.20 524.6,204.20 524.6,204.20 525.6,204.20 525.6,204.20 526.6,204.20 526.6,204.20 527.6,204.20 527.6,204.20 528.6,204.20 528.6,204.20 529.6,204.20 529.6,203.80 530.6,203.80 530.6,204.20 531.6,204.20 531.6,204.20 532.6,204.20 532.6,204.20 533.6,204.20 533.6,204.20 534.6,204.20 534.6,204.20 535.6,204.20 535.6,204.20 536.6,204.20 536.6,204.20 537.6,204.20 537.6,203.80 538.6,203.80 538.6,203.80 539.6,203.80 539.6,204.20 540.6,204.20 540.6,204.20 541.6,204.20 541.6,204.20 542.6,204.20 542.6,204.20 543.6,204.20 543.6,204.20 544.6,204.20 544.6,204.20 545.6,204.20 545.6,204.20 546.6,204.20 546.6,204.20 547.6,204.20 547.6,204.20 548.6,204.20 548.6,204.20 549.6,204.20 549.6,204.20 550.6,204.20 550.6,204.20 551.6,204.20 551.6,204.20 552.6,204.20 552.6,203.80 553.6,203.80 553.6,204.20 554.6,204.20 554.6,204.20 555.6,204.20 555.6,204.20 556.6,204.20 556.6,204.20 557.6,204.20 557.6,203.80 558.6,203.80 558.6,204.20 559.6,204.20 559.6,203.80 560.6,203.80 560.6,204.20 561.6,204.20 561.6,204.20 562.6,204.20 562.6,204.20 563.6,204.20 563.6,204.20 564.6,204.20 564.6,204.20 565.6,204.20 565.6,203.80 566.6,203.80 566.6,204.20 567.6,204.20 567.6,204.20 568.6,204.20 568.6,203.80 569.6,203.80 569.6,204.20 570.6,204.20 570.6,204.20 571.6,204.20 571.6,203.80 572.6,203.80 572.6,204.20 573.6,204.20 573.6,203.80 574.6,203.80 574.6,204.20 575.4,205.00" fill="#8a7127" fill-opacity=".8"/><polyline points="48.6,204.20 49.6,204.20 49.6,203.80 50.6,203.80 50.6,203.80 51.6,203.80 51.6,204.20 52.6,204.20 52.6,204.20 53.6,204.20 53.6,203.80 54.6,203.80 54.6,204.20 55.6,204.20 55.6,203.80 56.6,203.80 56.6,203.80 57.6,203.80 57.6,204.20 58.6,204.20 58.6,204.20 59.6,204.20 59.6,203.80 60.6,203.80 60.6,204.20 61.6,204.20 61.6,204.20 62.6,204.20 62.6,204.20 63.6,204.20 63.6,204.20 64.6,204.20 64.6,204.20 65.6,204.20 65.6,203.80 66.6,203.80 66.6,203.80 67.6,203.80 67.6,204.20 68.6,204.20 68.6,204.20 69.6,204.20 69.6,204.20 70.6,204.20 70.6,204.20 71.6,204.20 71.6,204.20 72.6,204.20 72.6,204.20 73.6,204.20 73.6,203.80 74.6,203.80 74.6,203.80 75.6,203.80 75.6,203.80 76.6,203.80 76.6,203.80 77.6,203.80 77.6,204.20 78.6,204.20 78.6,204.20 79.6,204.20 79.6,204.20 80.6,204.20 80.6,204.20 81.6,204.20 81.6,203.80 82.6,203.80 82.6,203.80 83.6,203.80 83.6,203.80 84.6,203.80 84.6,204.20 85.6,204.20 85.6,204.20 86.6,204.20 86.6,204.20 87.6,204.20 87.6,204.20 88.6,204.20 88.6,204.20 89.6,204.20 89.6,204.20 90.6,204.20 90.6,203.80 91.6,203.80 91.6,203.80 92.6,203.80 92.6,203.80 93.6,203.80 93.6,204.20 94.6,204.20 94.6,203.80 95.6,203.80 95.6,203.80 96.6,203.80 96.6,204.20 97.6,204.20 97.6,203.80 98.6,203.80 98.6,204.20 99.6,204.20 99.6,204.20 100.6,204.20 100.6,204.20 101.6,204.20 101.6,204.20 102.6,204.20 102.6,203.80 103.6,203.80 103.6,204.20 104.6,204.20 104.6,204.20 105.6,204.20 105.6,204.20 106.6,204.20 106.6,204.20 107.6,204.20 107.6,204.20 108.6,204.20 108.6,203.80 109.6,203.80 109.6,204.20 110.6,204.20 110.6,204.20 111.6,204.20 111.6,204.20 112.6,204.20 112.6,203.80 113.6,203.80 113.6,204.20 114.6,204.20 114.6,204.20 115.6,204.20 115.6,204.20 116.6,204.20 116.6,204.20 117.6,204.20 117.6,204.20 118.6,204.20 118.6,204.20 119.6,204.20 119.6,204.20 120.6,204.20 120.6,203.80 121.6,203.80 121.6,204.20 122.6,204.20 122.6,204.20 123.6,204.20 123.6,204.20 124.6,204.20 124.6,204.20 125.6,204.20 125.6,204.20 126.6,204.20 126.6,203.80 127.6,203.80 127.6,203.80 128.6,203.80 128.6,204.20 129.6,204.20 129.6,204.20 130.6,204.20 130.6,204.20 131.6,204.20 131.6,204.20 132.6,204.20 132.6,203.80 133.6,203.80 133.6,203.80 134.6,203.80 134.6,204.20 135.6,204.20 135.6,204.20 136.6,204.20 136.6,204.20 137.6,204.20 137.6,203.80 138.6,203.80 138.6,204.20 139.6,204.20 139.6,204.20 140.6,204.20 140.6,204.20 141.6,204.20 141.6,204.20 142.6,204.20 142.6,204.20 143.6,204.20 143.6,204.20 144.6,204.20 144.6,204.20 145.6,204.20 145.6,203.80 146.6,203.80 146.6,203.80 147.6,203.80 147.6,204.20 148.6,204.20 148.6,204.20 149.6,204.20 149.6,204.20 150.6,204.20 150.6,204.20 151.6,204.20 151.6,204.20 152.6,204.20 152.6,204.20 153.6,204.20 153.6,203.80 154.6,203.80 154.6,203.80 155.6,203.80 155.6,203.80 156.6,203.80 156.6,204.20 157.6,204.20 157.6,204.20 158.6,204.20 158.6,203.80 159.6,203.80 159.6,203.80 160.6,203.80 160.6,204.20 161.6,204.20 161.6,203.80 162.6,203.80 162.6,204.20 163.6,204.20 163.6,204.20 164.6,204.20 164.6,204.20 165.6,204.20 165.6,203.80 166.6,203.80 166.6,204.20 167.6,204.20 167.6,204.20 168.6,204.20 168.6,203.80 169.6,203.80 169.6,203.80 170.6,203.80 170.6,203.80 171.6,203.80 171.6,204.20 172.6,204.20 172.6,203.80 173.6,203.80 173.6,203.80 174.6,203.80 174.6,203.80 175.6,203.80 175.6,203.80 176.6,203.80 176.6,204.20 177.6,204.20 177.6,204.20 178.6,204.20 178.6,204.20 179.6,204.20 179.6,204.20 180.6,204.20 180.6,203.80 181.6,203.80 181.6,204.20 182.6,204.20 182.6,203.80 183.6,203.80 183.6,204.20 184.6,204.20 184.6,203.80 185.6,203.80 185.6,204.20 186.6,204.20 186.6,204.20 187.6,204.20 187.6,204.20 188.6,204.20 188.6,203.80 189.6,203.80 189.6,204.20 190.6,204.20 190.6,203.80 191.6,203.80 191.6,204.20 192.6,204.20 192.6,204.20 193.6,204.20 193.6,204.20 194.6,204.20 194.6,204.20 195.6,204.20 195.6,204.20 196.6,204.20 196.6,204.20 197.6,204.20 197.6,204.20 198.6,204.20 198.6,204.20 199.6,204.20 199.6,204.20 200.6,204.20 200.6,204.20 201.6,204.20 201.6,204.20 202.6,204.20 202.6,203.80 203.6,203.80 203.6,204.20 204.6,204.20 204.6,204.20 205.6,204.20 205.6,204.20 206.6,204.20 206.6,204.20 207.6,204.20 207.6,204.20 208.6,204.20 208.6,203.80 209.6,203.80 209.6,204.20 210.6,204.20 210.6,204.20 211.6,204.20 211.6,204.20 212.6,204.20 212.6,204.20 213.6,204.20 213.6,203.80 214.6,203.80 214.6,204.20 215.6,204.20 215.6,203.80 216.6,203.80 216.6,204.20 217.6,204.20 217.6,204.20 218.6,204.20 218.6,204.20 219.6,204.20 219.6,204.20 220.6,204.20 220.6,204.20 221.6,204.20 221.6,203.80 222.6,203.80 222.6,203.80 223.6,203.80 223.6,204.20 224.6,204.20 224.6,204.20 225.6,204.20 225.6,204.20 226.6,204.20 226.6,204.20 227.6,204.20 227.6,204.20 228.6,204.20 228.6,204.20 229.6,204.20 229.6,203.80 230.6,203.80 230.6,203.80 231.6,203.80 231.6,204.20 232.6,204.20 232.6,204.20 233.6,204.20 233.6,204.20 234.6,204.20 234.6,203.80 235.6,203.80 235.6,203.80 236.6,203.80 236.6,203.80 237.6,203.80 237.6,204.20 238.6,204.20 238.6,204.20 239.6,204.20 239.6,204.20 240.6,204.20 240.6,203.80 241.6,203.80 241.6,204.20 242.6,204.20 242.6,203.80 243.6,203.80 243.6,204.20 244.6,204.20 244.6,204.20 245.6,204.20 245.6,204.20 246.6,204.20 246.6,204.20 247.6,204.20 247.6,203.80 248.6,203.80 248.6,203.80 249.6,203.80 249.6,204.20 250.6,204.20 250.6,203.80 251.6,203.80 251.6,203.80 252.6,203.80 252.6,204.20 253.6,204.20 253.6,204.20 254.6,204.20 254.6,204.20 255.6,204.20 255.6,204.20 256.6,204.20 256.6,204.20 257.6,204.20 257.6,203.80 258.6,203.80 258.6,204.20 259.6,204.20 259.6,204.20 260.6,204.20 260.6,204.20 261.6,204.20 261.6,204.20 262.6,204.20 262.6,204.20 263.6,204.20 263.6,204.20 264.6,204.20 264.6,203.80 265.6,203.80 265.6,204.20 266.6,204.20 266.6,204.20 267.6,204.20 267.6,203.80 268.6,203.80 268.6,204.20 269.6,204.20 269.6,203.80 270.6,203.80 270.6,204.20 271.6,204.20 271.6,204.20 272.6,204.20 272.6,203.80 273.6,203.80 273.6,204.20 274.6,204.20 274.6,204.20 275.6,204.20 275.6,203.80 276.6,203.80 276.6,204.20 277.6,204.20 277.6,204.20 278.6,204.20 278.6,204.20 279.6,204.20 279.6,203.80 280.6,203.80 280.6,204.20 281.6,204.20 281.6,204.20 282.6,204.20 282.6,204.20 283.6,204.20 283.6,203.80 284.6,203.80 284.6,203.80 285.6,203.80 285.6,203.80 286.6,203.80 286.6,204.20 287.6,204.20 287.6,204.20 288.6,204.20 288.6,203.80 289.6,203.80 289.6,204.20 290.6,204.20 290.6,204.20 291.6,204.20 291.6,204.20 292.6,204.20 292.6,204.20 293.6,204.20 293.6,204.20 294.6,204.20 294.6,203.80 295.6,203.80 295.6,204.20 296.6,204.20 296.6,204.20 297.6,204.20 297.6,204.20 298.6,204.20 298.6,203.80 299.6,203.80 299.6,204.20 300.6,204.20 300.6,204.20 301.6,204.20 301.6,204.20 302.6,204.20 302.6,203.80 303.6,203.80 303.6,203.80 304.6,203.80 304.6,204.20 305.6,204.20 305.6,204.20 306.6,204.20 306.6,204.20 307.6,204.20 307.6,204.20 308.6,204.20 308.6,203.80 309.6,203.80 309.6,204.20 310.6,204.20 310.6,203.80 311.6,203.80 311.6,204.20 312.6,204.20 312.6,204.20 313.6,204.20 313.6,204.20 314.6,204.20 314.6,204.20 315.6,204.20 315.6,203.80 316.6,203.80 316.6,203.80 317.6,203.80 317.6,204.20 318.6,204.20 318.6,204.20 319.6,204.20 319.6,203.80 320.6,203.80 320.6,204.20 321.6,204.20 321.6,204.20 322.6,204.20 322.6,204.20 323.6,204.20 323.6,204.20 324.6,204.20 324.6,204.20 325.6,204.20 325.6,203.80 326.6,203.80 326.6,204.20 327.6,204.20 327.6,204.20 328.6,204.20 328.6,203.80 329.6,203.80 329.6,204.20 330.6,204.20 330.6,204.20 331.6,204.20 331.6,203.80 332.6,203.80 332.6,203.80 333.6,203.80 333.6,204.20 334.6,204.20 334.6,204.20 335.6,204.20 335.6,204.20 336.6,204.20 336.6,204.20 337.6,204.20 337.6,203.80 338.6,203.80 338.6,204.20 339.6,204.20 339.6,203.80 340.6,203.80 340.6,203.80 341.6,203.80 341.6,204.20 342.6,204.20 342.6,203.80 343.6,203.80 343.6,204.20 344.6,204.20 344.6,204.20 345.6,204.20 345.6,204.20 346.6,204.20 346.6,204.20 347.6,204.20 347.6,204.20 348.6,204.20 348.6,203.80 349.6,203.80 349.6,203.80 350.6,203.80 350.6,204.20 351.6,204.20 351.6,204.20 352.6,204.20 352.6,204.20 353.6,204.20 353.6,204.20 354.6,204.20 354.6,203.80 355.6,203.80 355.6,204.20 356.6,204.20 356.6,204.20 357.6,204.20 357.6,203.80 358.6,203.80 358.6,204.20 359.6,204.20 359.6,204.20 360.6,204.20 360.6,204.20 361.6,204.20 361.6,203.80 362.6,203.80 362.6,204.20 363.6,204.20 363.6,204.20 364.6,204.20 364.6,203.80 365.6,203.80 365.6,204.20 366.6,204.20 366.6,204.20 367.6,204.20 367.6,203.80 368.6,203.80 368.6,204.20 369.6,204.20 369.6,204.20 370.6,204.20 370.6,204.20 371.6,204.20 371.6,204.20 372.6,204.20 372.6,204.20 373.6,204.20 373.6,203.80 374.6,203.80 374.6,203.80 375.6,203.80 375.6,204.20 376.6,204.20 376.6,204.20 377.6,204.20 377.6,204.20 378.6,204.20 378.6,204.20 379.6,204.20 379.6,203.80 380.6,203.80 380.6,204.20 381.6,204.20 381.6,204.20 382.6,204.20 382.6,204.20 383.6,204.20 383.6,204.20 384.6,204.20 384.6,204.20 385.6,204.20 385.6,203.80 386.6,203.80 386.6,204.20 387.6,204.20 387.6,203.80 388.6,203.80 388.6,203.80 389.6,203.80 389.6,204.20 390.6,204.20 390.6,203.80 391.6,203.80 391.6,204.20 392.6,204.20 392.6,204.20 393.6,204.20 393.6,204.20 394.6,204.20 394.6,204.20 395.6,204.20 395.6,203.80 396.6,203.80 396.6,204.20 397.6,204.20 397.6,203.80 398.6,203.80 398.6,204.20 399.6,204.20 399.6,204.20 400.6,204.20 400.6,204.20 401.6,204.20 401.6,203.80 402.6,203.80 402.6,204.20 403.6,204.20 403.6,203.80 404.6,203.80 404.6,203.80 405.6,203.80 405.6,204.20 406.6,204.20 406.6,204.20 407.6,204.20 407.6,204.20 408.6,204.20 408.6,203.80 409.6,203.80 409.6,204.20 410.6,204.20 410.6,204.20 411.6,204.20 411.6,204.20 412.6,204.20 412.6,204.20 413.6,204.20 413.6,203.80 414.6,203.80 414.6,204.20 415.6,204.20 415.6,203.80 416.6,203.80 416.6,204.20 417.6,204.20 417.6,204.20 418.6,204.20 418.6,204.20 419.6,204.20 419.6,204.20 420.6,204.20 420.6,204.20 421.6,204.20 421.6,204.20 422.6,204.20 422.6,204.20 423.6,204.20 423.6,203.80 424.6,203.80 424.6,204.20 425.6,204.20 425.6,204.20 426.6,204.20 426.6,204.20 427.6,204.20 427.6,203.80 428.6,203.80 428.6,203.80 429.6,203.80 429.6,203.80 430.6,203.80 430.6,204.20 431.6,204.20 431.6,204.20 432.6,204.20 432.6,204.20 433.6,204.20 433.6,204.20 434.6,204.20 434.6,204.20 435.6,204.20 435.6,204.20 436.6,204.20 436.6,203.80 437.6,203.80 437.6,204.20 438.6,204.20 438.6,203.80 439.6,203.80 439.6,203.80 440.6,203.80 440.6,204.20 441.6,204.20 441.6,204.20 442.6,204.20 442.6,204.20 443.6,204.20 443.6,204.20 444.6,204.20 444.6,204.20 445.6,204.20 445.6,203.80 446.6,203.80 446.6,204.20 447.6,204.20 447.6,204.20 448.6,204.20 448.6,203.80 449.6,203.80 449.6,203.80 450.6,203.80 450.6,203.80 451.6,203.80 451.6,204.20 452.6,204.20 452.6,204.20 453.6,204.20 453.6,204.20 454.6,204.20 454.6,204.20 455.6,204.20 455.6,204.20 456.6,204.20 456.6,204.20 457.6,204.20 457.6,203.80 458.6,203.80 458.6,204.20 459.6,204.20 459.6,204.20 460.6,204.20 460.6,204.20 461.6,204.20 461.6,203.80 462.6,203.80 462.6,203.80 463.6,203.80 463.6,203.80 464.6,203.80 464.6,204.20 465.6,204.20 465.6,204.20 466.6,204.20 466.6,204.20 467.6,204.20 467.6,204.20 468.6,204.20 468.6,203.80 469.6,203.80 469.6,204.20 470.6,204.20 470.6,204.20 471.6,204.20 471.6,204.20 472.6,204.20 472.6,204.20 473.6,204.20 473.6,204.20 474.6,204.20 474.6,204.20 475.6,204.20 475.6,203.80 476.6,203.80 476.6,203.80 477.6,203.80 477.6,204.20 478.6,204.20 478.6,203.80 479.6,203.80 479.6,204.20 480.6,204.20 480.6,203.80 481.6,203.80 481.6,203.80 482.6,203.80 482.6,204.20 483.6,204.20 483.6,204.20 484.6,204.20 484.6,204.20 485.6,204.20 485.6,204.20 486.6,204.20 486.6,204.20 487.6,204.20 487.6,204.20 488.6,204.20 488.6,204.20 489.6,204.20 489.6,204.20 490.6,204.20 490.6,204.20 491.6,204.20 491.6,204.20 492.6,204.20 492.6,204.20 493.6,204.20 493.6,204.20 494.6,204.20 494.6,204.20 495.6,204.20 495.6,204.20 496.6,204.20 496.6,203.80 497.6,203.80 497.6,204.20 498.6,204.20 498.6,204.20 499.6,204.20 499.6,204.20 500.6,204.20 500.6,204.20 501.6,204.20 501.6,203.80 502.6,203.80 502.6,204.20 503.6,204.20 503.6,204.20 504.6,204.20 504.6,204.20 505.6,204.20 505.6,204.20 506.6,204.20 506.6,204.20 507.6,204.20 507.6,203.80 508.6,203.80 508.6,203.80 509.6,203.80 509.6,203.80 510.6,203.80 510.6,204.20 511.6,204.20 511.6,203.80 512.6,203.80 512.6,204.20 513.6,204.20 513.6,204.20 514.6,204.20 514.6,204.20 515.6,204.20 515.6,204.20 516.6,204.20 516.6,204.20 517.6,204.20 517.6,204.20 518.6,204.20 518.6,203.80 519.6,203.80 519.6,204.20 520.6,204.20 520.6,203.80 521.6,203.80 521.6,204.20 522.6,204.20 522.6,203.80 523.6,203.80 523.6,204.20 524.6,204.20 524.6,204.20 525.6,204.20 525.6,204.20 526.6,204.20 526.6,204.20 527.6,204.20 527.6,204.20 528.6,204.20 528.6,204.20 529.6,204.20 529.6,203.80 530.6,203.80 530.6,204.20 531.6,204.20 531.6,204.20 532.6,204.20 532.6,204.20 533.6,204.20 533.6,204.20 534.6,204.20 534.6,204.20 535.6,204.20 535.6,204.20 536.6,204.20 536.6,204.20 537.6,204.20 537.6,203.80 538.6,203.80 538.6,203.80 539.6,203.80 539.6,204.20 540.6,204.20 540.6,204.20 541.6,204.20 541.6,204.20 542.6,204.20 542.6,204.20 543.6,204.20 543.6,204.20 544.6,204.20 544.6,204.20 545.6,204.20 545.6,204.20 546.6,204.20 546.6,204.20 547.6,204.20 547.6,204.20 548.6,204.20 548.6,204.20 549.6,204.20 549.6,204.20 550.6,204.20 550.6,204.20 551.6,204.20 551.6,204.20 552.6,204.20 552.6,203.80 553.6,203.80 553.6,204.20 554.6,204.20 554.6,204.20 555.6,204.20 555.6,204.20 556.6,204.20 556.6,204.20 557.6,204.20 557.6,203.80 558.6,203.80 558.6,204.20 559.6,204.20 559.6,203.80 560.6,203.80 560.6,204.20 561.6,204.20 561.6,204.20 562.6,204.20 562.6,204.20 563.6,204.20 563.6,204.20 564.6,204.20 564.6,204.20 565.6,204.20 565.6,203.80 566.6,203.80 566.6,204.20 567.6,204.20 567.6,204.20 568.6,204.20 568.6,203.80 569.6,203.80 569.6,204.20 570.6,204.20 570.6,204.20 571.6,204.20 571.6,203.80 572.6,203.80 572.6,204.20 573.6,204.20 573.6,203.80 574.6,203.80 574.6,204.20" fill="none" stroke="#d9aa33" stroke-width=".9"/><path d="M100.50 49.00 V208.50" stroke="rgba(240,250,255,0.09)" stroke-width="1"/><path d="M166.50 49.00 V208.50" stroke="rgba(240,250,255,0.09)" stroke-width="1"/><path d="M232.50 49.00 V208.50" stroke="rgba(240,250,255,0.09)" stroke-width="1"/><path d="M298.50 49.00 V208.50" stroke="rgba(240,250,255,0.09)" stroke-width="1"/><path d="M363.50 49.00 V208.50" stroke="rgba(240,250,255,0.09)" stroke-width="1"/><path d="M429.50 49.00 V208.50" stroke="rgba(240,250,255,0.09)" stroke-width="1"/><path d="M495.50 49.00 V208.50" stroke="rgba(240,250,255,0.09)" stroke-width="1"/><path d="M561.50 49.00 V208.50" stroke="rgba(240,250,255,0.09)" stroke-width="1"/><path d="M44.20 49.50 H575.40" stroke="rgba(240,250,255,0.09)" stroke-width="1"/><path d="M44.20 80.50 H575.40" stroke="rgba(240,250,255,0.09)" stroke-width="1"/><path d="M44.20 111.50 H575.40" stroke="rgba(240,250,255,0.09)" stroke-width="1"/><path d="M44.20 142.50 H575.40" stroke="rgba(240,250,255,0.09)" stroke-width="1"/><path d="M44.20 173.50 H575.40" stroke="rgba(240,250,255,0.09)" stroke-width="1"/><path d="M44.20 204.50 H575.40" stroke="rgba(240,250,255,0.09)" stroke-width="1"/></svg>
<span class="t" style="left:78.01px;top:360px;font-size:12.5px;line-height:19px;color:#ccccdc;transform:scaleX(0.9350);">100%</span>
<span class="t" style="left:85.11px;top:391px;font-size:12.5px;line-height:19px;color:#ccccdc;transform:scaleX(0.9109);">80%</span>
<span class="t" style="left:85.02px;top:422px;font-size:12.5px;line-height:19px;color:#ccccdc;transform:scaleX(0.9144);">60%</span>
<span class="t" style="left:85.34px;top:453px;font-size:12.5px;line-height:19px;color:#ccccdc;transform:scaleX(0.9013);">40%</span>
<span class="t" style="left:85.03px;top:484px;font-size:12.5px;line-height:19px;color:#ccccdc;transform:scaleX(0.9141);">20%</span>
<span class="t" style="left:92.18px;top:515px;font-size:12.5px;line-height:19px;color:#ccccdc;transform:scaleX(0.8691);">0%</span>
<span class="t" style="left:154.04px;top:530px;font-size:12.5px;line-height:19px;color:#ccccdc;transform:scaleX(0.9550);">12:00</span>
<span class="t" style="left:220.04px;top:530px;font-size:12.5px;line-height:19px;color:#ccccdc;transform:scaleX(0.9550);">15:00</span>
<span class="t" style="left:286.04px;top:530px;font-size:12.5px;line-height:19px;color:#ccccdc;transform:scaleX(0.9550);">18:00</span>
<span class="t" style="left:352.20px;top:530px;font-size:12.5px;line-height:19px;color:#ccccdc;transform:scaleX(0.9550);">21:00</span>
<span class="t" style="left:417.26px;top:530px;font-size:12.5px;line-height:19px;color:#ccccdc;transform:scaleX(0.9550);">00:00</span>
<span class="t" style="left:483.26px;top:530px;font-size:12.5px;line-height:19px;color:#ccccdc;transform:scaleX(0.9550);">03:00</span>
<span class="t" style="left:549.26px;top:530px;font-size:12.5px;line-height:19px;color:#ccccdc;transform:scaleX(0.9550);">06:00</span>
<span class="t" style="left:615.26px;top:530px;font-size:12.5px;line-height:19px;color:#ccccdc;transform:scaleX(0.9550);">09:00</span>
<div class="b" style="left:82px;top:559px;width:14px;height:4px;background:#eab839;border-radius:1px;"></div>
<span class="t" style="left:103.50px;top:551px;font-size:12.5px;line-height:19px;color:#ccccdc;transform:scaleX(0.9720);">Busy System</span>
<div class="b" style="left:184.25px;top:559px;width:14px;height:4px;background:#0a437c;border-radius:1px;"></div>
<span class="t" style="left:205.52px;top:551px;font-size:12.5px;line-height:19px;color:#ccccdc;transform:scaleX(0.9571);">Busy User</span>
<div class="b" style="left:271.25px;top:559px;width:14px;height:4px;background:#890f02;border-radius:1px;"></div>
<span class="t" style="left:291.48px;top:551px;font-size:12.5px;line-height:19px;color:#ccccdc;transform:scaleX(0.9951);">Busy Iowait</span>
<div class="b" style="left:365.2px;top:559px;width:14px;height:4px;background:#7d2473;border-radius:1px;"></div>
<span class="t" style="left:386.92px;top:551px;font-size:12.5px;line-height:19px;color:#ccccdc;transform:scaleX(0.9592);">Busy Other</span>
<div class="b" style="left:457.2px;top:559px;width:14px;height:4px;background:#7eb26d;border-radius:1px;"></div>
<span class="t" style="left:478.45px;top:551px;font-size:12.5px;line-height:19px;color:#ccccdc;">Idle</span>
<div class="b" style="left:669px;top:321px;width:592px;height:258px;background:#181b1f;border:1px solid #25282d;border-radius:3px;box-sizing:border-box;"></div>
<svg class="b" style="left:670px;top:322px;border-top-left-radius:2px;" width="32" height="32" viewBox="0 0 32 32"><path d="M0 0 H32 L0 32 Z" fill="#25282f"/></svg>
<span class="t" style="left:676.23px;top:325px;font-size:11px;line-height:16px;color:#b3b5c6;font-weight:700;font-family:'DejaVu Serif','Liberation Serif',serif;will-change:transform;">i</span>
<span class="t" style="left:919.32px;top:326px;font-size:15.5px;line-height:23px;color:#ccccdc;-webkit-text-stroke:0.35px #ccccdc;transform:scaleX(0.9253);">Memory Basic</span>
<svg class="b" style="left:669px;top:321px;" width="587" height="258" viewBox="0 0 587 258"><rect x="63.50" y="67.00" width="511.90" height="138.00" fill="#7eb26d" fill-opacity="0.4"/><path d="M63.50 67.50 H575.40" stroke="#c4572a" stroke-width="1"/><polygon points="63.5,205.00 63.5,198.80 64.5,198.80 65.5,198.80 66.5,198.80 67.5,198.80 68.5,198.80 69.5,198.00 70.5,198.00 71.5,198.00 72.5,198.30 73.5,198.30 74.5,197.70 75.5,197.70 76.5,197.70 77.5,197.70 78.5,197.70 79.5,197.70 80.5,197.70 81.5,197.70 82.5,197.70 83.5,198.80 84.5,198.80 85.5,198.80 86.5,198.80 87.5,198.80 88.5,198.80 89.5,198.80 90.5,198.80 91.5,198.80 92.5,198.80 93.5,198.80 94.5,198.80 95.5,198.80 96.5,198.80 97.5,198.80 98.5,198.80 99.5,198.80 100.5,198.80 101.5,198.00 102.5,198.00 103.5,198.00 104.5,198.00 105.5,198.00 106.5,198.00 107.5,198.00 108.5,198.80 109.5,198.80 110.5,198.30 111.5,198.30 112.5,198.30 113.5,197.70 114.5,197.70 115.5,197.70 116.5,198.80 117.5,198.30 118.5,198.30 119.5,198.80 120.5,198.80 121.5,198.30 122.5,198.30 123.5,198.00 124.5,198.00 125.5,197.70 126.5,197.70 127.5,197.70 128.5,197.70 129.5,197.70 130.5,197.70 131.5,198.00 132.5,198.00 133.5,198.00 134.5,198.30 135.5,198.30 136.5,198.30 137.5,198.30 138.5,198.80 139.5,198.80 140.5,198.00 141.5,198.00 142.5,198.00 143.5,198.80 144.5,197.70 145.5,198.00 146.5,198.00 147.5,198.00 148.5,198.00 149.5,198.00 150.5,198.00 151.5,198.00 152.5,198.80 153.5,198.80 154.5,198.00 155.5,198.80 156.5,197.70 157.5,197.70 158.5,198.30 159.5,198.30 160.5,198.30 161.5,198.30 162.5,198.80 163.5,198.80 164.5,198.80 165.5,198.80 166.5,198.80 167.5,198.80 168.5,198.80 169.5,198.80 170.5,198.80 171.5,198.80 172.5,198.80 173.5,198.30 174.5,198.30 175.5,198.30 176.5,198.30 177.5,198.30 178.5,198.30 179.5,198.80 180.5,198.30 181.5,198.30 182.5,198.80 183.5,198.80 184.5,198.80 185.5,198.80 186.5,198.80 187.5,198.80 188.5,198.80 189.5,198.80 190.5,198.80 191.5,198.80 192.5,198.80 193.5,198.80 194.5,198.80 195.5,198.80 196.5,198.80 197.5,198.00 198.5,198.00 199.5,198.00 200.5,198.00 201.5,198.00 202.5,198.00 203.5,198.00 204.5,198.00 205.5,197.70 206.5,197.70 207.5,198.80 208.5,198.80 209.5,198.80 210.5,198.80 211.5,198.80 212.5,198.80 213.5,198.80 214.5,198.80 215.5,198.80 216.5,198.80 217.5,198.80 218.5,198.80 219.5,198.80 220.5,197.70 221.5,198.80 222.5,198.80 223.5,198.80 224.5,198.80 225.5,198.80 226.5,198.80 227.5,198.80 228.5,198.80 229.5,198.00 230.5,198.00 231.5,198.80 232.5,197.70 233.5,198.00 234.5,198.00 235.5,198.00 236.5,198.00 237.5,198.00 238.5,198.00 239.5,198.80 240.5,198.80 241.5,198.80 242.5,198.80 243.5,198.80 244.5,198.30 245.5,198.30 246.5,198.30 247.5,198.30 248.5,198.30 249.5,198.80 250.5,198.80 251.5,198.80 252.5,198.80 253.5,198.30 254.5,198.30 255.5,198.30 256.5,198.80 257.5,198.80 258.5,198.80 259.5,198.30 260.5,198.30 261.5,198.30 262.5,198.30 263.5,198.30 264.5,198.30 265.5,198.30 266.5,198.30 267.5,198.30 268.5,198.30 269.5,198.30 270.5,198.30 271.5,198.30 272.5,198.30 273.5,198.30 274.5,198.30 275.5,198.30 276.5,198.30 277.5,198.30 278.5,198.30 279.5,198.30 280.5,198.80 281.5,198.80 282.5,198.80 283.5,198.80 284.5,198.80 285.5,198.80 286.5,198.80 287.5,198.80 288.5,198.80 289.5,198.80 290.5,198.30 291.5,198.30 292.5,198.30 293.5,198.30 294.5,198.30 295.5,198.80 296.5,198.80 297.5,198.80 298.5,198.80 299.5,198.80 300.5,198.80 301.5,198.80 302.5,198.80 303.5,198.80 304.5,198.80 305.5,197.70 306.5,197.70 307.5,197.70 308.5,198.80 309.5,198.80 310.5,198.80 311.5,198.80 312.5,198.80 313.5,198.80 314.5,198.80 315.5,198.80 316.5,197.70 317.5,197.70 318.5,197.70 319.5,197.70 320.5,198.80 321.5,198.80 322.5,198.80 323.5,198.80 324.5,198.80 325.5,198.80 326.5,198.80 327.5,198.80 328.5,198.80 329.5,198.80 330.5,198.30 331.5,198.30 332.5,198.30 333.5,198.30 334.5,198.30 335.5,198.80 336.5,198.80 337.5,198.00 338.5,198.00 339.5,198.00 340.5,198.80 341.5,198.80 342.5,198.80 343.5,198.80 344.5,198.80 345.5,198.80 346.5,198.80 347.5,198.80 348.5,198.80 349.5,198.80 350.5,198.80 351.5,198.80 352.5,198.80 353.5,198.80 354.5,198.00 355.5,198.00 356.5,198.00 357.5,198.00 358.5,198.00 359.5,198.00 360.5,198.00 361.5,198.80 362.5,198.80 363.5,198.80 364.5,198.80 365.5,198.00 366.5,198.80 367.5,198.80 368.5,198.80 369.5,198.80 370.5,198.80 371.5,198.80 372.5,198.80 373.5,198.80 374.5,198.80 375.5,198.00 376.5,198.00 377.5,198.00 378.5,198.00 379.5,198.00 380.5,198.30 381.5,198.30 382.5,198.30 383.5,198.30 384.5,198.30 385.5,198.30 386.5,198.30 387.5,198.30 388.5,198.30 389.5,198.80 390.5,198.80 391.5,197.70 392.5,197.70 393.5,197.70 394.5,198.30 395.5,197.70 396.5,197.70 397.5,197.70 398.5,197.70 399.5,197.70 400.5,197.70 401.5,197.70 402.5,197.70 403.5,197.70 404.5,197.70 405.5,198.80 406.5,198.80 407.5,198.80 408.5,198.80 409.5,198.80 410.5,198.80 411.5,198.80 412.5,197.70 413.5,197.70 414.5,197.70 415.5,198.00 416.5,198.00 417.5,198.00 418.5,198.80 419.5,198.80 420.5,198.80 421.5,198.80 422.5,198.80 423.5,198.30 424.5,198.30 425.5,198.30 426.5,197.70 427.5,197.70 428.5,198.80 429.5,198.80 430.5,198.80 431.5,198.80 432.5,198.80 433.5,198.80 434.5,198.80 435.5,198.80 436.5,198.80 437.5,198.80 438.5,198.80 439.5,198.80 440.5,198.00 441.5,198.00 442.5,198.00 443.5,198.00 444.5,198.80 445.5,198.80 446.5,198.80 447.5,198.80 448.5,198.80 449.5,197.70 450.5,197.70 451.5,197.70 452.5,197.70 453.5,197.70 454.5,197.70 455.5,197.70 456.5,197.70 457.5,197.70 458.5,198.80 459.5,198.30 460.5,198.30 461.5,198.30 462.5,198.30 463.5,198.30 464.5,198.80 465.5,198.80 466.5,197.70 467.5,197.70 468.5,197.70 469.5,197.70 470.5,197.70 471.5,198.00 472.5,198.00 473.5,198.00 474.5,198.00 475.5,198.00 476.5,198.00 477.5,198.00 478.5,198.00 479.5,198.00 480.5,198.00 481.5,198.00 482.5,198.00 483.5,198.00 484.5,198.00 485.5,198.00 486.5,198.00 487.5,198.80 488.5,198.80 489.5,198.80 490.5,198.80 491.5,198.80 492.5,198.80 493.5,198.80 494.5,198.80 495.5,198.80 496.5,198.80 497.5,198.80 498.5,198.80 499.5,198.80 500.5,198.80 501.5,198.80 502.5,198.80 503.5,198.80 504.5,198.80 505.5,198.00 506.5,198.80 507.5,198.80 508.5,198.80 509.5,198.80 510.5,198.80 511.5,198.80 512.5,198.80 513.5,198.80 514.5,198.80 515.5,198.80 516.5,198.80 517.5,198.80 518.5,198.80 519.5,198.80 520.5,198.80 521.5,198.00 522.5,198.00 523.5,198.00 524.5,198.00 525.5,198.00 526.5,198.00 527.5,198.00 528.5,198.00 529.5,198.00 530.5,198.00 531.5,198.00 532.5,198.00 533.5,198.00 534.5,198.00 535.5,198.00 536.5,198.00 537.5,198.00 538.5,198.00 539.5,198.00 540.5,198.00 541.5,198.00 542.5,198.80 543.5,198.80 544.5,198.80 545.5,198.80 546.5,198.80 547.5,198.80 548.5,198.80 549.5,197.70 550.5,197.70 551.5,198.80 552.5,198.80 553.5,198.80 554.5,198.80 555.5,198.00 556.5,197.70 557.5,197.70 558.5,198.80 559.5,198.80 560.5,198.00 561.5,198.00 562.5,198.80 563.5,198.80 564.5,198.80 565.5,198.80 566.5,198.80 567.5,198.80 568.5,198.80 569.5,198.80 570.5,198.80 571.5,198.80 572.5,198.80 573.5,198.80 574.5,198.80 575.4,205.00" fill="#0c2f52"/><rect x="63.50" y="202.60" width="511.90" height="2.4" fill="#7d6a27"/><path d="M63.50 203.00 H575.40" stroke="#e5b735" stroke-width="1.1"/><path d="M113.50 49.00 V208.50" stroke="rgba(240,250,255,0.09)" stroke-width="1"/><path d="M177.50 49.00 V208.50" stroke="rgba(240,250,255,0.09)" stroke-width="1"/><path d="M241.50 49.00 V208.50" stroke="rgba(240,250,255,0.09)" stroke-width="1"/><path d="M305.50 49.00 V208.50" stroke="rgba(240,250,255,0.09)" stroke-width="1"/><path d="M369.50 49.00 V208.50" stroke="rgba(240,250,255,0.09)" stroke-width="1"/><path d="M433.50 49.00 V208.50" stroke="rgba(240,250,255,0.09)" stroke-width="1"/><path d="M497.50 49.00 V208.50" stroke="rgba(240,250,255,0.09)" stroke-width="1"/><path d="M561.50 49.00 V208.50" stroke="rgba(240,250,255,0.09)" stroke-width="1"/><path d="M59.10 78.50 H575.40" stroke="rgba(240,250,255,0.09)" stroke-width="1"/><path d="M59.10 120.50 H575.40" stroke="rgba(240,250,255,0.09)" stroke-width="1"/><path d="M59.10 162.50 H575.40" stroke="rgba(240,250,255,0.09)" stroke-width="1"/><path d="M59.10 204.50 H575.40" stroke="rgba(240,250,255,0.09)" stroke-width="1"/></svg>
<span class="t" style="left:677.11px;top:389px;font-size:12.5px;line-height:19px;color:#ccccdc;transform:scaleX(0.9461);">27.9 GiB</span>
<span class="t" style="left:677.51px;top:431px;font-size:12.5px;line-height:19px;color:#ccccdc;transform:scaleX(0.9377);">18.6 GiB</span>
<span class="t" style="left:677.15px;top:473px;font-size:12.5px;line-height:19px;color:#ccccdc;transform:scaleX(0.9452);">9.31 GiB</span>
<span class="t" style="left:705.95px;top:515px;font-size:12.5px;line-height:19px;color:#ccccdc;transform:scaleX(0.9138);">0 B</span>
<span class="t" style="left:767.04px;top:530px;font-size:12.5px;line-height:19px;color:#ccccdc;transform:scaleX(0.9550);">12:00</span>
<span class="t" style="left:831.04px;top:530px;font-size:12.5px;line-height:19px;color:#ccccdc;transform:scaleX(0.9550);">15:00</span>
<span class="t" style="left:895.04px;top:530px;font-size:12.5px;line-height:19px;color:#ccccdc;transform:scaleX(0.9550);">18:00</span>
<span class="t" style="left:959.20px;top:530px;font-size:12.5px;line-height:19px;color:#ccccdc;transform:scaleX(0.9550);">21:00</span>
<span class="t" style="left:1023.26px;top:530px;font-size:12.5px;line-height:19px;color:#ccccdc;transform:scaleX(0.9550);">00:00</span>
<span class="t" style="left:1087.26px;top:530px;font-size:12.5px;line-height:19px;color:#ccccdc;transform:scaleX(0.9550);">03:00</span>
<span class="t" style="left:1151.26px;top:530px;font-size:12.5px;line-height:19px;color:#ccccdc;transform:scaleX(0.9550);">06:00</span>
<span class="t" style="left:1215.26px;top:530px;font-size:12.5px;line-height:19px;color:#ccccdc;transform:scaleX(0.9550);">09:00</span>
<div class="b" style="left:682px;top:559px;width:14px;height:4px;background:#e0f9d7;border-radius:1px;"></div>
<span class="t" style="left:703.17px;top:551px;font-size:12.5px;line-height:19px;color:#ccccdc;">RAM Total</span>
<div class="b" style="left:770.2px;top:559px;width:14px;height:4px;background:#f2c81a;border-radius:1px;"></div>
<span class="t" style="left:791.42px;top:551px;font-size:12.5px;line-height:19px;color:#ccccdc;transform:scaleX(0.9572);">RAM Used</span>
<div class="b" style="left:859.2px;top:559px;width:14px;height:4px;background:#052b51;border-radius:1px;"></div>
<span class="t" style="left:880.11px;top:551px;font-size:12.5px;line-height:19px;color:#ccccdc;transform:scaleX(0.9671);">RAM Cache + Buffer</span>
<div class="b" style="left:1001px;top:559px;width:14px;height:4px;background:#7eb26d;border-radius:1px;"></div>
<span class="t" style="left:1022.53px;top:551px;font-size:12.5px;line-height:19px;color:#ccccdc;transform:scaleX(0.9436);">RAM Free</span>
<div class="b" style="left:1086.25px;top:559px;width:14px;height:4px;background:#bf1b00;border-radius:1px;"></div>
<span class="t" style="left:1107.47px;top:551px;font-size:12.5px;line-height:19px;color:#ccccdc;transform:scaleX(0.9420);">SWAP Used</span>
<div class="b" style="left:69px;top:587px;width:592px;height:258px;background:#181b1f;border:1px solid #25282d;border-radius:3px;box-sizing:border-box;"></div>
<svg class="b" style="left:70px;top:588px;border-top-left-radius:2px;" width="32" height="32" viewBox="0 0 32 32"><path d="M0 0 H32 L0 32 Z" fill="#25282f"/></svg>
<span class="t" style="left:76.23px;top:591px;font-size:11px;line-height:16px;color:#b3b5c6;font-weight:700;font-family:'DejaVu Serif','Liberation Serif',serif;will-change:transform;">i</span>
<span class="t" style="left:297.32px;top:592px;font-size:15.5px;line-height:23px;color:#ccccdc;-webkit-text-stroke:0.35px #ccccdc;transform:scaleX(0.9296);">Network Traffic Basic</span>
<svg class="b" style="left:69px;top:587px;" width="592" height="258" viewBox="0 0 592 258"><polygon points="61.40,110.5 61.40,108.57 62.15,106.39 62.90,108.17 63.65,108.66 64.40,101.22 65.15,98.34 65.91,106.17 66.66,107.00 67.41,108.70 68.16,108.21 68.91,107.71 69.66,107.93 70.41,108.08 71.16,108.14 71.91,108.04 72.66,108.40 73.42,107.99 74.17,107.84 74.92,107.68 75.67,108.26 76.42,106.27 77.17,108.28 77.92,107.88 78.67,108.37 79.42,106.03 80.17,107.35 80.92,107.58 81.68,107.89 82.43,107.31 83.18,90.80 83.93,89.71 84.68,97.52 85.43,85.52 86.18,92.23 86.93,88.27 87.68,88.99 88.43,94.18 89.19,88.64 89.94,89.60 90.69,90.01 91.44,92.82 92.19,91.12 92.94,93.15 93.69,93.87 94.44,90.30 95.19,94.44 95.94,91.54 96.69,91.96 97.45,94.55 98.20,95.63 98.95,94.88 99.70,94.51 100.45,94.02 101.20,89.88 101.95,96.26 102.70,91.60 103.45,90.23 104.20,92.11 104.96,90.93 105.71,90.33 106.46,89.26 107.21,95.45 107.96,83.97 108.71,94.46 109.46,93.20 110.21,93.08 110.96,107.59 111.71,105.99 112.46,106.08 113.22,107.92 113.97,107.36 114.72,106.69 115.47,107.71 116.22,106.30 116.97,106.43 117.72,107.33 118.47,108.23 119.22,107.97 119.97,107.97 120.72,106.16 121.48,106.38 122.23,107.29 122.98,107.84 123.73,105.92 124.48,107.89 125.23,104.64 125.98,107.08 126.73,105.48 127.48,107.82 128.23,107.87 128.99,106.59 129.74,101.13 130.49,107.84 131.24,107.98 131.99,107.96 132.74,103.46 133.49,106.93 134.24,107.31 134.99,107.83 135.74,106.71 136.49,104.71 137.25,107.59 138.00,108.11 138.75,107.65 139.50,104.38 140.25,107.61 141.00,103.66 141.75,107.49 142.50,107.44 143.25,107.59 144.00,104.61 144.76,104.54 145.51,107.30 146.26,106.95 147.01,107.90 147.76,105.07 148.51,107.32 149.26,107.41 150.01,107.34 150.76,107.52 151.51,105.73 152.26,107.28 153.02,106.83 153.77,107.70 154.52,104.71 155.27,106.23 156.02,108.08 156.77,106.29 157.52,106.04 158.27,106.67 159.02,108.24 159.77,106.77 160.53,107.86 161.28,104.54 162.03,107.44 162.78,105.00 163.53,106.61 164.28,106.17 165.03,103.49 165.78,103.85 166.53,108.00 167.28,104.21 168.03,108.01 168.79,108.09 169.54,107.83 170.29,106.57 171.04,107.28 171.79,102.19 172.54,103.68 173.29,106.23 174.04,101.10 174.79,105.21 175.54,103.26 176.30,102.61 177.05,107.11 177.80,106.58 178.55,107.31 179.30,95.30 180.05,107.26 180.80,107.52 181.55,103.20 182.30,105.00 183.05,102.69 183.80,107.71 184.56,101.67 185.31,104.58 186.06,102.13 186.81,105.75 187.56,106.97 188.31,107.92 189.06,106.03 189.81,99.98 190.56,107.36 191.31,101.49 192.07,106.35 192.82,107.53 193.57,106.15 194.32,105.22 195.07,105.08 195.82,107.54 196.57,99.64 197.32,93.94 198.07,99.73 198.82,104.46 199.57,99.44 200.33,100.16 201.08,96.88 201.83,97.95 202.58,99.09 203.33,101.99 204.08,100.74 204.83,98.00 205.58,102.54 206.33,98.01 207.08,100.15 207.84,102.43 208.59,100.89 209.34,102.22 210.09,98.28 210.84,91.26 211.59,101.83 212.34,101.17 213.09,99.94 213.84,102.18 214.59,97.46 215.34,93.82 216.10,91.36 216.85,84.41 217.60,94.12 218.35,93.67 219.10,90.97 219.85,93.07 220.60,89.41 221.35,93.99 222.10,92.54 222.85,91.60 223.60,93.75 224.36,92.91 225.11,91.39 225.86,90.70 226.61,107.73 227.36,108.20 228.11,108.22 228.86,107.85 229.61,108.45 230.36,107.73 231.11,108.45 231.87,107.95 232.62,107.39 233.37,108.09 234.12,108.13 234.87,107.19 235.62,108.29 236.37,106.59 237.12,107.63 237.87,105.80 238.62,104.12 239.37,107.11 240.13,103.33 240.88,108.14 241.63,107.30 242.38,108.47 243.13,108.48 243.88,107.71 244.63,107.82 245.38,108.45 246.13,101.26 246.88,107.34 247.64,108.74 248.39,108.68 249.14,102.09 249.89,105.19 250.64,104.62 251.39,107.05 252.14,106.53 252.89,107.26 253.64,107.97 254.39,107.54 255.14,107.91 255.90,107.55 256.65,107.61 257.40,108.39 258.15,107.62 258.90,108.03 259.65,107.49 260.40,108.12 261.15,108.30 261.90,103.46 262.65,107.18 263.41,107.64 264.16,106.79 264.91,107.82 265.66,108.12 266.41,104.12 267.16,108.01 267.91,107.79 268.66,107.75 269.41,107.03 270.16,107.34 270.91,107.79 271.67,106.57 272.42,105.06 273.17,107.88 273.92,107.10 274.67,107.26 275.42,107.02 276.17,103.16 276.92,108.38 277.67,106.89 278.42,107.92 279.18,106.40 279.93,107.83 280.68,108.03 281.43,107.01 282.18,107.07 282.93,107.91 283.68,107.10 284.43,104.94 285.18,102.92 285.93,105.27 286.68,108.59 287.44,107.85 288.19,108.10 288.94,107.67 289.69,107.77 290.44,106.65 291.19,104.13 291.94,107.71 292.69,106.43 293.44,107.87 294.19,104.98 294.95,103.42 295.70,108.18 296.45,108.09 297.20,107.62 297.95,107.87 298.70,107.36 299.45,104.01 300.20,107.69 300.95,107.35 301.70,107.98 302.45,107.97 303.21,107.41 303.96,107.80 304.71,104.26 305.46,106.36 306.21,107.07 306.96,108.38 307.71,107.64 308.46,107.74 309.21,107.31 309.96,106.52 310.72,101.94 311.47,107.24 312.22,92.87 312.97,96.03 313.72,97.96 314.47,99.00 315.22,95.96 315.97,98.28 316.72,94.15 317.47,98.82 318.22,100.13 318.98,97.14 319.73,95.70 320.48,100.23 321.23,90.36 321.98,96.94 322.73,89.98 323.48,94.17 324.23,98.57 324.98,99.01 325.73,99.09 326.48,97.59 327.24,99.87 327.99,95.67 328.74,98.45 329.49,100.45 330.24,99.33 330.99,97.52 331.74,96.69 332.49,90.62 333.24,97.61 333.99,96.29 334.75,99.70 335.50,96.98 336.25,89.81 337.00,101.17 337.75,98.61 338.50,96.62 339.25,98.12 340.00,98.25 340.75,98.68 341.50,97.33 342.25,107.18 343.01,106.84 343.76,99.30 344.51,105.35 345.26,108.23 346.01,107.71 346.76,107.24 347.51,107.26 348.26,106.74 349.01,105.90 349.76,102.91 350.52,102.53 351.27,106.52 352.02,107.73 352.77,105.23 353.52,105.19 354.27,101.79 355.02,103.40 355.77,105.03 356.52,100.80 357.27,101.12 358.02,105.73 358.78,105.20 359.53,101.80 360.28,102.43 361.03,103.57 361.78,106.93 362.53,99.74 363.28,106.42 364.03,102.44 364.78,106.30 365.53,104.65 366.29,106.80 367.04,106.41 367.79,104.80 368.54,105.73 369.29,105.04 370.04,106.51 370.79,106.89 371.54,107.49 372.29,100.35 373.04,106.03 373.79,107.34 374.55,107.13 375.30,106.77 376.05,107.49 376.80,106.66 377.55,102.76 378.30,105.51 379.05,101.11 379.80,101.98 380.55,99.51 381.30,107.00 382.06,104.87 382.81,102.14 383.56,105.65 384.31,105.38 385.06,107.08 385.81,106.73 386.56,106.80 387.31,108.12 388.06,107.92 388.81,107.43 389.56,107.52 390.32,106.61 391.07,106.84 391.82,102.98 392.57,108.22 393.32,107.69 394.07,107.17 394.82,108.53 395.57,107.90 396.32,107.74 397.07,103.87 397.83,101.67 398.58,108.38 399.33,107.39 400.08,107.93 400.83,104.74 401.58,107.28 402.33,107.83 403.08,108.05 403.83,108.55 404.58,107.79 405.33,107.95 406.09,107.55 406.84,108.02 407.59,108.02 408.34,105.30 409.09,107.57 409.84,108.20 410.59,104.27 411.34,105.12 412.09,107.56 412.84,107.74 413.60,105.41 414.35,106.86 415.10,107.90 415.85,108.23 416.60,107.26 417.35,108.47 418.10,107.17 418.85,108.40 419.60,106.96 420.35,107.55 421.10,108.11 421.86,106.92 422.61,108.46 423.36,107.20 424.11,107.85 424.86,95.72 425.61,96.66 426.36,97.38 427.11,99.90 427.86,98.41 428.61,99.22 429.36,92.39 430.12,99.89 430.87,100.12 431.62,94.97 432.37,95.64 433.12,102.06 433.87,99.60 434.62,94.85 435.37,98.84 436.12,98.23 436.87,98.83 437.63,95.77 438.38,96.83 439.13,99.51 439.88,94.68 440.63,90.48 441.38,103.11 442.13,98.93 442.88,94.23 443.63,96.97 444.38,99.11 445.13,98.43 445.89,98.80 446.64,97.57 447.39,96.98 448.14,96.59 448.89,99.07 449.64,97.04 450.39,100.43 451.14,98.18 451.89,96.35 452.64,98.35 453.40,98.10 454.15,105.39 454.90,107.03 455.65,104.36 456.40,106.98 457.15,107.41 457.90,107.11 458.65,107.77 459.40,107.87 460.15,108.16 460.90,107.17 461.66,108.35 462.41,107.90 463.16,106.19 463.91,108.23 464.66,106.92 465.41,102.39 466.16,107.42 466.91,107.18 467.66,108.23 468.41,107.65 469.17,108.23 469.92,102.12 470.67,106.66 471.42,106.98 472.17,106.98 472.92,108.06 473.67,108.26 474.42,107.70 475.17,107.30 475.92,108.24 476.67,107.94 477.43,107.51 478.18,107.47 478.93,107.44 479.68,107.47 480.43,107.18 481.18,108.12 481.93,108.25 482.68,107.92 483.43,108.01 484.18,108.29 484.94,108.12 485.69,107.89 486.44,107.38 487.19,106.37 487.94,108.25 488.69,107.96 489.44,108.58 490.19,108.05 490.94,108.51 491.69,107.87 492.44,108.50 493.20,108.49 493.95,108.30 494.70,106.53 495.45,108.23 496.20,106.86 496.95,107.70 497.70,107.64 498.45,107.06 499.20,107.67 499.95,102.93 500.71,108.13 501.46,108.54 502.21,108.44 502.96,108.07 503.71,107.82 504.46,108.15 505.21,108.66 505.96,108.06 506.71,103.58 507.46,106.35 508.21,100.38 508.97,107.58 509.72,106.94 510.47,108.11 511.22,107.88 511.97,107.63 512.72,107.66 513.47,107.66 514.22,107.95 514.97,107.92 515.72,108.12 516.48,105.95 517.23,108.20 517.98,107.23 518.73,107.55 519.48,98.76 520.23,106.46 520.98,107.89 521.73,107.10 522.48,107.85 523.23,107.22 523.98,107.25 524.74,104.92 525.49,106.22 526.24,105.25 526.99,104.56 527.74,108.17 528.49,107.56 529.24,105.92 529.99,107.50 530.74,108.15 531.49,101.74 532.24,107.67 533.00,106.51 533.75,103.02 534.50,103.07 535.25,100.18 536.00,107.92 536.75,106.42 537.50,99.92 538.25,96.77 539.00,93.18 539.75,98.81 540.51,97.88 541.26,96.56 542.01,99.68 542.76,90.99 543.51,97.52 544.26,99.29 545.01,96.89 545.76,97.40 546.51,97.06 547.26,98.81 548.01,97.90 548.77,98.15 549.52,101.00 550.27,98.96 551.02,99.18 551.77,99.91 552.52,97.81 553.27,98.02 554.02,96.78 554.77,98.04 555.52,97.32 556.28,100.13 557.03,99.41 557.78,101.12 558.53,102.34 559.28,98.99 560.03,98.06 560.78,101.36 561.53,96.53 562.28,96.24 563.03,102.28 563.78,98.29 564.54,95.09 565.29,98.64 566.04,107.04 566.79,106.99 567.54,107.67 568.29,107.64 569.04,108.08 569.79,106.89 570.54,105.60 571.29,106.14 572.05,107.91 572.80,107.34 573.55,107.89 574.30,108.04 575.05,108.00 575.80,104.19 575.80,110.5" fill="#73bf69" fill-opacity=".42"/><polyline points="61.40,108.57 62.15,106.39 62.90,108.17 63.65,108.66 64.40,101.22 65.15,98.34 65.91,106.17 66.66,107.00 67.41,108.70 68.16,108.21 68.91,107.71 69.66,107.93 70.41,108.08 71.16,108.14 71.91,108.04 72.66,108.40 73.42,107.99 74.17,107.84 74.92,107.68 75.67,108.26 76.42,106.27 77.17,108.28 77.92,107.88 78.67,108.37 79.42,106.03 80.17,107.35 80.92,107.58 81.68,107.89 82.43,107.31 83.18,90.80 83.93,89.71 84.68,97.52 85.43,85.52 86.18,92.23 86.93,88.27 87.68,88.99 88.43,94.18 89.19,88.64 89.94,89.60 90.69,90.01 91.44,92.82 92.19,91.12 92.94,93.15 93.69,93.87 94.44,90.30 95.19,94.44 95.94,91.54 96.69,91.96 97.45,94.55 98.20,95.63 98.95,94.88 99.70,94.51 100.45,94.02 101.20,89.88 101.95,96.26 102.70,91.60 103.45,90.23 104.20,92.11 104.96,90.93 105.71,90.33 106.46,89.26 107.21,95.45 107.96,83.97 108.71,94.46 109.46,93.20 110.21,93.08 110.96,107.59 111.71,105.99 112.46,106.08 113.22,107.92 113.97,107.36 114.72,106.69 115.47,107.71 116.22,106.30 116.97,106.43 117.72,107.33 118.47,108.23 119.22,107.97 119.97,107.97 120.72,106.16 121.48,106.38 122.23,107.29 122.98,107.84 123.73,105.92 124.48,107.89 125.23,104.64 125.98,107.08 126.73,105.48 127.48,107.82 128.23,107.87 128.99,106.59 129.74,101.13 130.49,107.84 131.24,107.98 131.99,107.96 132.74,103.46 133.49,106.93 134.24,107.31 134.99,107.83 135.74,106.71 136.49,104.71 137.25,107.59 138.00,108.11 138.75,107.65 139.50,104.38 140.25,107.61 141.00,103.66 141.75,107.49 142.50,107.44 143.25,107.59 144.00,104.61 144.76,104.54 145.51,107.30 146.26,106.95 147.01,107.90 147.76,105.07 148.51,107.32 149.26,107.41 150.01,107.34 150.76,107.52 151.51,105.73 152.26,107.28 153.02,106.83 153.77,107.70 154.52,104.71 155.27,106.23 156.02,108.08 156.77,106.29 157.52,106.04 158.27,106.67 159.02,108.24 159.77,106.77 160.53,107.86 161.28,104.54 162.03,107.44 162.78,105.00 163.53,106.61 164.28,106.17 165.03,103.49 165.78,103.85 166.53,108.00 167.28,104.21 168.03,108.01 168.79,108.09 169.54,107.83 170.29,106.57 171.04,107.28 171.79,102.19 172.54,103.68 173.29,106.23 174.04,101.10 174.79,105.21 175.54,103.26 176.30,102.61 177.05,107.11 177.80,106.58 178.55,107.31 179.30,95.30 180.05,107.26 180.80,107.52 181.55,103.20 182.30,105.00 183.05,102.69 183.80,107.71 184.56,101.67 185.31,104.58 186.06,102.13 186.81,105.75 187.56,106.97 188.31,107.92 189.06,106.03 189.81,99.98 190.56,107.36 191.31,101.49 192.07,106.35 192.82,107.53 193.57,106.15 194.32,105.22 195.07,105.08 195.82,107.54 196.57,99.64 197.32,93.94 198.07,99.73 198.82,104.46 199.57,99.44 200.33,100.16 201.08,96.88 201.83,97.95 202.58,99.09 203.33,101.99 204.08,100.74 204.83,98.00 205.58,102.54 206.33,98.01 207.08,100.15 207.84,102.43 208.59,100.89 209.34,102.22 210.09,98.28 210.84,91.26 211.59,101.83 212.34,101.17 213.09,99.94 213.84,102.18 214.59,97.46 215.34,93.82 216.10,91.36 216.85,84.41 217.60,94.12 218.35,93.67 219.10,90.97 219.85,93.07 220.60,89.41 221.35,93.99 222.10,92.54 222.85,91.60 223.60,93.75 224.36,92.91 225.11,91.39 225.86,90.70 226.61,107.73 227.36,108.20 228.11,108.22 228.86,107.85 229.61,108.45 230.36,107.73 231.11,108.45 231.87,107.95 232.62,107.39 233.37,108.09 234.12,108.13 234.87,107.19 235.62,108.29 236.37,106.59 237.12,107.63 237.87,105.80 238.62,104.12 239.37,107.11 240.13,103.33 240.88,108.14 241.63,107.30 242.38,108.47 243.13,108.48 243.88,107.71 244.63,107.82 245.38,108.45 246.13,101.26 246.88,107.34 247.64,108.74 248.39,108.68 249.14,102.09 249.89,105.19 250.64,104.62 251.39,107.05 252.14,106.53 252.89,107.26 253.64,107.97 254.39,107.54 255.14,107.91 255.90,107.55 256.65,107.61 257.40,108.39 258.15,107.62 258.90,108.03 259.65,107.49 260.40,108.12 261.15,108.30 261.90,103.46 262.65,107.18 263.41,107.64 264.16,106.79 264.91,107.82 265.66,108.12 266.41,104.12 267.16,108.01 267.91,107.79 268.66,107.75 269.41,107.03 270.16,107.34 270.91,107.79 271.67,106.57 272.42,105.06 273.17,107.88 273.92,107.10 274.67,107.26 275.42,107.02 276.17,103.16 276.92,108.38 277.67,106.89 278.42,107.92 279.18,106.40 279.93,107.83 280.68,108.03 281.43,107.01 282.18,107.07 282.93,107.91 283.68,107.10 284.43,104.94 285.18,102.92 285.93,105.27 286.68,108.59 287.44,107.85 288.19,108.10 288.94,107.67 289.69,107.77 290.44,106.65 291.19,104.13 291.94,107.71 292.69,106.43 293.44,107.87 294.19,104.98 294.95,103.42 295.70,108.18 296.45,108.09 297.20,107.62 297.95,107.87 298.70,107.36 299.45,104.01 300.20,107.69 300.95,107.35 301.70,107.98 302.45,107.97 303.21,107.41 303.96,107.80 304.71,104.26 305.46,106.36 306.21,107.07 306.96,108.38 307.71,107.64 308.46,107.74 309.21,107.31 309.96,106.52 310.72,101.94 311.47,107.24 312.22,92.87 312.97,96.03 313.72,97.96 314.47,99.00 315.22,95.96 315.97,98.28 316.72,94.15 317.47,98.82 318.22,100.13 318.98,97.14 319.73,95.70 320.48,100.23 321.23,90.36 321.98,96.94 322.73,89.98 323.48,94.17 324.23,98.57 324.98,99.01 325.73,99.09 326.48,97.59 327.24,99.87 327.99,95.67 328.74,98.45 329.49,100.45 330.24,99.33 330.99,97.52 331.74,96.69 332.49,90.62 333.24,97.61 333.99,96.29 334.75,99.70 335.50,96.98 336.25,89.81 337.00,101.17 337.75,98.61 338.50,96.62 339.25,98.12 340.00,98.25 340.75,98.68 341.50,97.33 342.25,107.18 343.01,106.84 343.76,99.30 344.51,105.35 345.26,108.23 346.01,107.71 346.76,107.24 347.51,107.26 348.26,106.74 349.01,105.90 349.76,102.91 350.52,102.53 351.27,106.52 352.02,107.73 352.77,105.23 353.52,105.19 354.27,101.79 355.02,103.40 355.77,105.03 356.52,100.80 357.27,101.12 358.02,105.73 358.78,105.20 359.53,101.80 360.28,102.43 361.03,103.57 361.78,106.93 362.53,99.74 363.28,106.42 364.03,102.44 364.78,106.30 365.53,104.65 366.29,106.80 367.04,106.41 367.79,104.80 368.54,105.73 369.29,105.04 370.04,106.51 370.79,106.89 371.54,107.49 372.29,100.35 373.04,106.03 373.79,107.34 374.55,107.13 375.30,106.77 376.05,107.49 376.80,106.66 377.55,102.76 378.30,105.51 379.05,101.11 379.80,101.98 380.55,99.51 381.30,107.00 382.06,104.87 382.81,102.14 383.56,105.65 384.31,105.38 385.06,107.08 385.81,106.73 386.56,106.80 387.31,108.12 388.06,107.92 388.81,107.43 389.56,107.52 390.32,106.61 391.07,106.84 391.82,102.98 392.57,108.22 393.32,107.69 394.07,107.17 394.82,108.53 395.57,107.90 396.32,107.74 397.07,103.87 397.83,101.67 398.58,108.38 399.33,107.39 400.08,107.93 400.83,104.74 401.58,107.28 402.33,107.83 403.08,108.05 403.83,108.55 404.58,107.79 405.33,107.95 406.09,107.55 406.84,108.02 407.59,108.02 408.34,105.30 409.09,107.57 409.84,108.20 410.59,104.27 411.34,105.12 412.09,107.56 412.84,107.74 413.60,105.41 414.35,106.86 415.10,107.90 415.85,108.23 416.60,107.26 417.35,108.47 418.10,107.17 418.85,108.40 419.60,106.96 420.35,107.55 421.10,108.11 421.86,106.92 422.61,108.46 423.36,107.20 424.11,107.85 424.86,95.72 425.61,96.66 426.36,97.38 427.11,99.90 427.86,98.41 428.61,99.22 429.36,92.39 430.12,99.89 430.87,100.12 431.62,94.97 432.37,95.64 433.12,102.06 433.87,99.60 434.62,94.85 435.37,98.84 436.12,98.23 436.87,98.83 437.63,95.77 438.38,96.83 439.13,99.51 439.88,94.68 440.63,90.48 441.38,103.11 442.13,98.93 442.88,94.23 443.63,96.97 444.38,99.11 445.13,98.43 445.89,98.80 446.64,97.57 447.39,96.98 448.14,96.59 448.89,99.07 449.64,97.04 450.39,100.43 451.14,98.18 451.89,96.35 452.64,98.35 453.40,98.10 454.15,105.39 454.90,107.03 455.65,104.36 456.40,106.98 457.15,107.41 457.90,107.11 458.65,107.77 459.40,107.87 460.15,108.16 460.90,107.17 461.66,108.35 462.41,107.90 463.16,106.19 463.91,108.23 464.66,106.92 465.41,102.39 466.16,107.42 466.91,107.18 467.66,108.23 468.41,107.65 469.17,108.23 469.92,102.12 470.67,106.66 471.42,106.98 472.17,106.98 472.92,108.06 473.67,108.26 474.42,107.70 475.17,107.30 475.92,108.24 476.67,107.94 477.43,107.51 478.18,107.47 478.93,107.44 479.68,107.47 480.43,107.18 481.18,108.12 481.93,108.25 482.68,107.92 483.43,108.01 484.18,108.29 484.94,108.12 485.69,107.89 486.44,107.38 487.19,106.37 487.94,108.25 488.69,107.96 489.44,108.58 490.19,108.05 490.94,108.51 491.69,107.87 492.44,108.50 493.20,108.49 493.95,108.30 494.70,106.53 495.45,108.23 496.20,106.86 496.95,107.70 497.70,107.64 498.45,107.06 499.20,107.67 499.95,102.93 500.71,108.13 501.46,108.54 502.21,108.44 502.96,108.07 503.71,107.82 504.46,108.15 505.21,108.66 505.96,108.06 506.71,103.58 507.46,106.35 508.21,100.38 508.97,107.58 509.72,106.94 510.47,108.11 511.22,107.88 511.97,107.63 512.72,107.66 513.47,107.66 514.22,107.95 514.97,107.92 515.72,108.12 516.48,105.95 517.23,108.20 517.98,107.23 518.73,107.55 519.48,98.76 520.23,106.46 520.98,107.89 521.73,107.10 522.48,107.85 523.23,107.22 523.98,107.25 524.74,104.92 525.49,106.22 526.24,105.25 526.99,104.56 527.74,108.17 528.49,107.56 529.24,105.92 529.99,107.50 530.74,108.15 531.49,101.74 532.24,107.67 533.00,106.51 533.75,103.02 534.50,103.07 535.25,100.18 536.00,107.92 536.75,106.42 537.50,99.92 538.25,96.77 539.00,93.18 539.75,98.81 540.51,97.88 541.26,96.56 542.01,99.68 542.76,90.99 543.51,97.52 544.26,99.29 545.01,96.89 545.76,97.40 546.51,97.06 547.26,98.81 548.01,97.90 548.77,98.15 549.52,101.00 550.27,98.96 551.02,99.18 551.77,99.91 552.52,97.81 553.27,98.02 554.02,96.78 554.77,98.04 555.52,97.32 556.28,100.13 557.03,99.41 557.78,101.12 558.53,102.34 559.28,98.99 560.03,98.06 560.78,101.36 561.53,96.53 562.28,96.24 563.03,102.28 563.78,98.29 564.54,95.09 565.29,98.64 566.04,107.04 566.79,106.99 567.54,107.67 568.29,107.64 569.04,108.08 569.79,106.89 570.54,105.60 571.29,106.14 572.05,107.91 572.80,107.34 573.55,107.89 574.30,108.04 575.05,108.00 575.80,104.19" fill="none" stroke="#73bf69" stroke-width="1"/><polygon points="61.40,110.5 61.40,106.30 62.15,100.84 62.90,106.16 63.65,106.14 64.40,91.18 65.15,84.66 65.91,102.17 66.66,104.10 67.41,106.38 68.16,105.50 68.91,104.32 69.66,105.70 70.41,105.26 71.16,106.42 71.91,105.61 72.66,106.50 73.42,105.59 74.17,105.77 74.92,105.03 75.67,106.38 76.42,102.07 77.17,105.60 77.92,105.56 78.67,106.36 79.42,102.66 80.17,103.27 80.92,103.90 81.68,105.23 82.43,103.81 83.18,79.77 83.93,74.92 84.68,77.44 85.43,82.24 86.18,76.34 86.93,79.90 87.68,80.92 88.43,78.61 89.19,78.75 89.94,79.23 90.69,82.88 91.44,77.44 92.19,73.08 92.94,77.93 93.69,77.32 94.44,78.83 95.19,78.52 95.94,78.44 96.69,78.59 97.45,79.62 98.20,76.80 98.95,79.10 99.70,76.91 100.45,82.61 101.20,78.53 101.95,79.68 102.70,75.50 103.45,78.73 104.20,73.37 104.96,76.05 105.71,79.49 106.46,73.85 107.21,80.91 107.96,78.76 108.71,77.70 109.46,79.78 110.21,78.77 110.96,105.20 111.71,100.71 112.46,103.07 113.22,105.43 113.97,103.57 114.72,101.71 115.47,104.62 116.22,103.04 116.97,103.42 117.72,104.78 118.47,105.44 119.22,105.70 119.97,105.46 120.72,92.26 121.48,103.45 122.23,104.71 122.98,105.64 123.73,101.30 124.48,105.93 125.23,97.98 125.98,102.95 126.73,100.04 127.48,104.82 128.23,104.99 128.99,103.96 129.74,93.65 130.49,105.97 131.24,105.74 131.99,104.70 132.74,96.70 133.49,88.61 134.24,104.27 134.99,105.10 135.74,102.51 136.49,98.50 137.25,104.10 138.00,104.91 138.75,105.21 139.50,98.86 140.25,104.75 141.00,98.99 141.75,105.24 142.50,105.01 143.25,105.53 144.00,100.30 144.76,97.89 145.51,104.81 146.26,102.85 147.01,104.92 147.76,99.24 148.51,104.94 149.26,104.58 150.01,104.62 150.76,103.54 151.51,102.04 152.26,104.56 153.02,104.20 153.77,105.42 154.52,100.77 155.27,102.99 156.02,105.01 156.77,102.85 157.52,102.58 158.27,103.21 159.02,105.17 159.77,101.85 160.53,104.56 161.28,97.08 162.03,104.33 162.78,99.35 163.53,103.92 164.28,103.23 165.03,96.54 165.78,96.16 166.53,105.03 167.28,95.54 168.03,104.99 168.79,105.30 169.54,105.31 170.29,101.56 171.04,104.91 171.79,93.62 172.54,97.61 173.29,103.36 174.04,94.11 174.79,99.03 175.54,97.08 176.30,92.43 177.05,103.99 177.80,103.44 178.55,103.91 179.30,63.38 180.05,104.83 180.80,103.49 181.55,95.16 182.30,99.33 183.05,94.28 183.80,104.08 184.56,93.11 185.31,97.93 186.06,94.64 186.81,99.23 187.56,103.57 188.31,104.46 189.06,102.34 189.81,90.69 190.56,103.72 191.31,91.72 192.07,103.39 192.82,104.07 193.57,100.88 194.32,99.96 195.07,101.07 195.82,104.27 196.57,85.94 197.32,90.05 198.07,88.29 198.82,91.82 199.57,89.86 200.33,81.18 201.08,88.68 201.83,89.42 202.58,88.91 203.33,87.31 204.08,89.75 204.83,85.90 205.58,78.99 206.33,88.20 207.08,83.85 207.84,87.00 208.59,93.65 209.34,84.43 210.09,85.80 210.84,87.74 211.59,86.31 212.34,80.76 213.09,87.45 213.84,82.99 214.59,88.67 215.34,76.08 216.10,73.90 216.85,75.48 217.60,76.39 218.35,74.79 219.10,73.23 219.85,73.80 220.60,76.96 221.35,74.45 222.10,72.52 222.85,77.43 223.60,75.09 224.36,70.99 225.11,69.38 225.86,74.13 226.61,105.46 227.36,105.54 228.11,105.66 228.86,105.99 229.61,106.30 230.36,104.63 231.11,106.10 231.87,105.82 232.62,104.75 233.37,106.11 234.12,106.46 234.87,103.25 235.62,105.42 236.37,103.82 237.12,105.71 237.87,102.49 238.62,96.95 239.37,104.59 240.13,95.12 240.88,106.25 241.63,104.25 242.38,106.13 243.13,106.24 243.88,104.02 244.63,105.89 245.38,106.18 246.13,93.03 246.88,104.65 247.64,106.44 248.39,106.28 249.14,94.14 249.89,101.11 250.64,100.09 251.39,103.92 252.14,101.31 252.89,104.69 253.64,105.32 254.39,105.00 255.14,105.49 255.90,104.28 256.65,104.28 257.40,105.71 258.15,103.69 258.90,105.98 259.65,105.26 260.40,105.51 261.15,105.57 261.90,98.34 262.65,104.92 263.41,104.72 264.16,104.02 264.91,105.35 265.66,105.28 266.41,96.46 267.16,105.01 267.91,105.80 268.66,105.86 269.41,103.94 270.16,104.02 270.91,105.18 271.67,86.79 272.42,101.26 273.17,105.13 273.92,103.20 274.67,103.30 275.42,104.55 276.17,98.06 276.92,105.91 277.67,103.71 278.42,104.37 279.18,103.62 279.93,104.42 280.68,105.22 281.43,104.66 282.18,104.53 282.93,104.48 283.68,103.98 284.43,100.85 285.18,97.47 285.93,90.44 286.68,106.10 287.44,105.94 288.19,106.13 288.94,105.55 289.69,105.62 290.44,103.97 291.19,99.20 291.94,105.27 292.69,102.09 293.44,105.44 294.19,98.96 294.95,98.35 295.70,105.28 296.45,105.65 297.20,105.09 297.95,106.05 298.70,103.96 299.45,99.50 300.20,104.55 300.95,104.04 301.70,105.71 302.45,105.47 303.21,105.05 303.96,104.68 304.71,98.17 305.46,102.50 306.21,104.09 306.96,105.56 307.71,105.69 308.46,105.12 309.21,104.79 309.96,102.46 310.72,93.44 311.47,104.53 312.22,81.22 312.97,83.43 313.72,85.96 314.47,84.84 315.22,83.17 315.97,83.21 316.72,84.80 317.47,84.08 318.22,83.42 318.98,80.77 319.73,79.85 320.48,85.46 321.23,87.90 321.98,83.96 322.73,81.37 323.48,84.36 324.23,84.48 324.98,83.51 325.73,85.20 326.48,84.51 327.24,76.19 327.99,81.50 328.74,87.35 329.49,83.41 330.24,85.78 330.99,83.80 331.74,85.95 332.49,84.27 333.24,84.47 333.99,83.79 334.75,80.51 335.50,82.28 336.25,87.50 337.00,85.41 337.75,82.94 338.50,85.93 339.25,84.15 340.00,83.59 340.75,77.20 341.50,85.07 342.25,104.58 343.01,103.33 343.76,90.50 344.51,101.85 345.26,105.22 346.01,104.74 346.76,104.72 347.51,105.02 348.26,104.00 349.01,100.49 349.76,96.68 350.52,96.88 351.27,102.32 352.02,104.27 352.77,100.68 353.52,101.05 354.27,90.83 355.02,98.65 355.77,101.30 356.52,89.54 357.27,92.97 358.02,100.28 358.78,101.35 359.53,95.38 360.28,93.45 361.03,97.93 361.78,103.77 362.53,86.50 363.28,103.10 364.03,96.40 364.78,102.54 365.53,100.27 366.29,102.02 367.04,102.32 367.79,100.24 368.54,102.47 369.29,99.47 370.04,102.61 370.79,104.10 371.54,103.82 372.29,93.52 373.04,100.91 373.79,104.06 374.55,104.49 375.30,102.15 376.05,104.73 376.80,102.65 377.55,95.88 378.30,99.71 379.05,90.72 379.80,91.32 380.55,90.00 381.30,104.21 382.06,99.48 382.81,95.85 383.56,100.16 384.31,99.98 385.06,103.43 385.81,102.49 386.56,104.06 387.31,104.88 388.06,105.69 388.81,104.04 389.56,104.34 390.32,102.59 391.07,103.67 391.82,96.45 392.57,105.70 393.32,105.52 394.07,104.31 394.82,105.89 395.57,104.85 396.32,105.11 397.07,95.53 397.83,92.13 398.58,106.07 399.33,105.10 400.08,105.46 400.83,97.54 401.58,104.08 402.33,105.49 403.08,106.10 403.83,106.03 404.58,104.95 405.33,106.03 406.09,105.08 406.84,104.98 407.59,105.80 408.34,92.26 409.09,104.55 409.84,106.13 410.59,97.13 411.34,100.49 412.09,104.69 412.84,105.38 413.60,98.90 414.35,102.51 415.10,105.02 415.85,105.11 416.60,103.26 417.35,106.10 418.10,102.69 418.85,105.71 419.60,102.64 420.35,103.74 421.10,105.40 421.86,104.14 422.61,105.96 423.36,103.21 424.11,105.86 424.86,85.66 425.61,84.34 426.36,82.15 427.11,78.38 427.86,85.80 428.61,84.58 429.36,82.21 430.12,80.72 430.87,83.06 431.62,88.80 432.37,85.36 433.12,87.51 433.87,83.41 434.62,84.37 435.37,85.81 436.12,82.74 436.87,83.46 437.63,84.42 438.38,82.28 439.13,91.41 439.88,86.40 440.63,83.45 441.38,86.06 442.13,85.72 442.88,84.61 443.63,82.97 444.38,86.87 445.13,85.61 445.89,85.14 446.64,87.16 447.39,81.42 448.14,82.67 448.89,86.88 449.64,86.36 450.39,84.57 451.14,84.99 451.89,86.41 452.64,84.82 453.40,85.30 454.15,98.62 454.90,103.84 455.65,100.24 456.40,104.26 457.15,104.88 457.90,103.58 458.65,104.99 459.40,104.34 460.15,105.22 460.90,104.29 461.66,105.84 462.41,105.80 463.16,101.17 463.91,105.50 464.66,103.85 465.41,93.08 466.16,104.81 466.91,103.67 467.66,106.35 468.41,104.80 469.17,105.77 469.92,90.60 470.67,101.67 471.42,104.07 472.17,103.45 472.92,104.76 473.67,105.25 474.42,105.50 475.17,104.72 475.92,105.83 476.67,106.14 477.43,104.18 478.18,105.15 478.93,105.03 479.68,104.73 480.43,104.37 481.18,104.86 481.93,106.53 482.68,105.00 483.43,105.05 484.18,105.75 484.94,106.10 485.69,84.66 486.44,105.13 487.19,101.73 487.94,106.05 488.69,104.87 489.44,105.95 490.19,105.25 490.94,106.39 491.69,105.91 492.44,106.17 493.20,106.39 493.95,89.22 494.70,103.29 495.45,105.88 496.20,103.68 496.95,105.73 497.70,105.69 498.45,104.37 499.20,105.62 499.95,97.11 500.71,105.02 501.46,106.31 502.21,106.26 502.96,104.76 503.71,104.34 504.46,105.97 505.21,106.39 505.96,105.31 506.71,98.46 507.46,101.65 508.21,91.54 508.97,104.35 509.72,103.17 510.47,106.32 511.22,106.07 511.97,104.29 512.72,104.18 513.47,104.78 514.22,105.80 514.97,106.00 515.72,105.43 516.48,100.46 517.23,105.35 517.98,105.05 518.73,105.50 519.48,89.80 520.23,103.27 520.98,105.83 521.73,103.36 522.48,105.35 523.23,104.80 523.98,103.27 524.74,100.55 525.49,100.70 526.24,98.32 526.99,100.55 527.74,105.38 528.49,104.71 529.24,101.02 529.99,104.73 530.74,104.90 531.49,94.86 532.24,104.73 533.00,102.16 533.75,93.62 534.50,97.48 535.25,91.00 536.00,104.56 536.75,102.25 537.50,72.66 538.25,85.84 539.00,86.97 539.75,82.10 540.51,80.44 541.26,85.70 542.01,81.96 542.76,83.90 543.51,87.05 544.26,79.09 545.01,81.67 545.76,77.17 546.51,80.67 547.26,82.09 548.01,80.11 548.77,82.77 549.52,87.43 550.27,81.52 551.02,88.05 551.77,86.31 552.52,82.80 553.27,86.84 554.02,87.35 554.77,84.87 555.52,79.08 556.28,83.25 557.03,77.55 557.78,82.34 558.53,83.82 559.28,83.25 560.03,81.04 560.78,86.38 561.53,83.32 562.28,82.18 563.03,86.22 563.78,85.69 564.54,85.73 565.29,81.73 566.04,104.54 566.79,104.16 567.54,105.01 568.29,104.58 569.04,105.95 569.79,104.23 570.54,100.89 571.29,101.32 572.05,105.31 572.80,104.77 573.55,105.91 574.30,105.61 575.05,105.91 575.80,98.78 575.80,110.5" fill="#8ab8ff" fill-opacity=".42"/><polyline points="61.40,106.30 62.15,100.84 62.90,106.16 63.65,106.14 64.40,91.18 65.15,84.66 65.91,102.17 66.66,104.10 67.41,106.38 68.16,105.50 68.91,104.32 69.66,105.70 70.41,105.26 71.16,106.42 71.91,105.61 72.66,106.50 73.42,105.59 74.17,105.77 74.92,105.03 75.67,106.38 76.42,102.07 77.17,105.60 77.92,105.56 78.67,106.36 79.42,102.66 80.17,103.27 80.92,103.90 81.68,105.23 82.43,103.81 83.18,79.77 83.93,74.92 84.68,77.44 85.43,82.24 86.18,76.34 86.93,79.90 87.68,80.92 88.43,78.61 89.19,78.75 89.94,79.23 90.69,82.88 91.44,77.44 92.19,73.08 92.94,77.93 93.69,77.32 94.44,78.83 95.19,78.52 95.94,78.44 96.69,78.59 97.45,79.62 98.20,76.80 98.95,79.10 99.70,76.91 100.45,82.61 101.20,78.53 101.95,79.68 102.70,75.50 103.45,78.73 104.20,73.37 104.96,76.05 105.71,79.49 106.46,73.85 107.21,80.91 107.96,78.76 108.71,77.70 109.46,79.78 110.21,78.77 110.96,105.20 111.71,100.71 112.46,103.07 113.22,105.43 113.97,103.57 114.72,101.71 115.47,104.62 116.22,103.04 116.97,103.42 117.72,104.78 118.47,105.44 119.22,105.70 119.97,105.46 120.72,92.26 121.48,103.45 122.23,104.71 122.98,105.64 123.73,101.30 124.48,105.93 125.23,97.98 125.98,102.95 126.73,100.04 127.48,104.82 128.23,104.99 128.99,103.96 129.74,93.65 130.49,105.97 131.24,105.74 131.99,104.70 132.74,96.70 133.49,88.61 134.24,104.27 134.99,105.10 135.74,102.51 136.49,98.50 137.25,104.10 138.00,104.91 138.75,105.21 139.50,98.86 140.25,104.75 141.00,98.99 141.75,105.24 142.50,105.01 143.25,105.53 144.00,100.30 144.76,97.89 145.51,104.81 146.26,102.85 147.01,104.92 147.76,99.24 148.51,104.94 149.26,104.58 150.01,104.62 150.76,103.54 151.51,102.04 152.26,104.56 153.02,104.20 153.77,105.42 154.52,100.77 155.27,102.99 156.02,105.01 156.77,102.85 157.52,102.58 158.27,103.21 159.02,105.17 159.77,101.85 160.53,104.56 161.28,97.08 162.03,104.33 162.78,99.35 163.53,103.92 164.28,103.23 165.03,96.54 165.78,96.16 166.53,105.03 167.28,95.54 168.03,104.99 168.79,105.30 169.54,105.31 170.29,101.56 171.04,104.91 171.79,93.62 172.54,97.61 173.29,103.36 174.04,94.11 174.79,99.03 175.54,97.08 176.30,92.43 177.05,103.99 177.80,103.44 178.55,103.91 179.30,63.38 180.05,104.83 180.80,103.49 181.55,95.16 182.30,99.33 183.05,94.28 183.80,104.08 184.56,93.11 185.31,97.93 186.06,94.64 186.81,99.23 187.56,103.57 188.31,104.46 189.06,102.34 189.81,90.69 190.56,103.72 191.31,91.72 192.07,103.39 192.82,104.07 193.57,100.88 194.32,99.96 195.07,101.07 195.82,104.27 196.57,85.94 197.32,90.05 198.07,88.29 198.82,91.82 199.57,89.86 200.33,81.18 201.08,88.68 201.83,89.42 202.58,88.91 203.33,87.31 204.08,89.75 204.83,85.90 205.58,78.99 206.33,88.20 207.08,83.85 207.84,87.00 208.59,93.65 209.34,84.43 210.09,85.80 210.84,87.74 211.59,86.31 212.34,80.76 213.09,87.45 213.84,82.99 214.59,88.67 215.34,76.08 216.10,73.90 216.85,75.48 217.60,76.39 218.35,74.79 219.10,73.23 219.85,73.80 220.60,76.96 221.35,74.45 222.10,72.52 222.85,77.43 223.60,75.09 224.36,70.99 225.11,69.38 225.86,74.13 226.61,105.46 227.36,105.54 228.11,105.66 228.86,105.99 229.61,106.30 230.36,104.63 231.11,106.10 231.87,105.82 232.62,104.75 233.37,106.11 234.12,106.46 234.87,103.25 235.62,105.42 236.37,103.82 237.12,105.71 237.87,102.49 238.62,96.95 239.37,104.59 240.13,95.12 240.88,106.25 241.63,104.25 242.38,106.13 243.13,106.24 243.88,104.02 244.63,105.89 245.38,106.18 246.13,93.03 246.88,104.65 247.64,106.44 248.39,106.28 249.14,94.14 249.89,101.11 250.64,100.09 251.39,103.92 252.14,101.31 252.89,104.69 253.64,105.32 254.39,105.00 255.14,105.49 255.90,104.28 256.65,104.28 257.40,105.71 258.15,103.69 258.90,105.98 259.65,105.26 260.40,105.51 261.15,105.57 261.90,98.34 262.65,104.92 263.41,104.72 264.16,104.02 264.91,105.35 265.66,105.28 266.41,96.46 267.16,105.01 267.91,105.80 268.66,105.86 269.41,103.94 270.16,104.02 270.91,105.18 271.67,86.79 272.42,101.26 273.17,105.13 273.92,103.20 274.67,103.30 275.42,104.55 276.17,98.06 276.92,105.91 277.67,103.71 278.42,104.37 279.18,103.62 279.93,104.42 280.68,105.22 281.43,104.66 282.18,104.53 282.93,104.48 283.68,103.98 284.43,100.85 285.18,97.47 285.93,90.44 286.68,106.10 287.44,105.94 288.19,106.13 288.94,105.55 289.69,105.62 290.44,103.97 291.19,99.20 291.94,105.27 292.69,102.09 293.44,105.44 294.19,98.96 294.95,98.35 295.70,105.28 296.45,105.65 297.20,105.09 297.95,106.05 298.70,103.96 299.45,99.50 300.20,104.55 300.95,104.04 301.70,105.71 302.45,105.47 303.21,105.05 303.96,104.68 304.71,98.17 305.46,102.50 306.21,104.09 306.96,105.56 307.71,105.69 308.46,105.12 309.21,104.79 309.96,102.46 310.72,93.44 311.47,104.53 312.22,81.22 312.97,83.43 313.72,85.96 314.47,84.84 315.22,83.17 315.97,83.21 316.72,84.80 317.47,84.08 318.22,83.42 318.98,80.77 319.73,79.85 320.48,85.46 321.23,87.90 321.98,83.96 322.73,81.37 323.48,84.36 324.23,84.48 324.98,83.51 325.73,85.20 326.48,84.51 327.24,76.19 327.99,81.50 328.74,87.35 329.49,83.41 330.24,85.78 330.99,83.80 331.74,85.95 332.49,84.27 333.24,84.47 333.99,83.79 334.75,80.51 335.50,82.28 336.25,87.50 337.00,85.41 337.75,82.94 338.50,85.93 339.25,84.15 340.00,83.59 340.75,77.20 341.50,85.07 342.25,104.58 343.01,103.33 343.76,90.50 344.51,101.85 345.26,105.22 346.01,104.74 346.76,104.72 347.51,105.02 348.26,104.00 349.01,100.49 349.76,96.68 350.52,96.88 351.27,102.32 352.02,104.27 352.77,100.68 353.52,101.05 354.27,90.83 355.02,98.65 355.77,101.30 356.52,89.54 357.27,92.97 358.02,100.28 358.78,101.35 359.53,95.38 360.28,93.45 361.03,97.93 361.78,103.77 362.53,86.50 363.28,103.10 364.03,96.40 364.78,102.54 365.53,100.27 366.29,102.02 367.04,102.32 367.79,100.24 368.54,102.47 369.29,99.47 370.04,102.61 370.79,104.10 371.54,103.82 372.29,93.52 373.04,100.91 373.79,104.06 374.55,104.49 375.30,102.15 376.05,104.73 376.80,102.65 377.55,95.88 378.30,99.71 379.05,90.72 379.80,91.32 380.55,90.00 381.30,104.21 382.06,99.48 382.81,95.85 383.56,100.16 384.31,99.98 385.06,103.43 385.81,102.49 386.56,104.06 387.31,104.88 388.06,105.69 388.81,104.04 389.56,104.34 390.32,102.59 391.07,103.67 391.82,96.45 392.57,105.70 393.32,105.52 394.07,104.31 394.82,105.89 395.57,104.85 396.32,105.11 397.07,95.53 397.83,92.13 398.58,106.07 399.33,105.10 400.08,105.46 400.83,97.54 401.58,104.08 402.33,105.49 403.08,106.10 403.83,106.03 404.58,104.95 405.33,106.03 406.09,105.08 406.84,104.98 407.59,105.80 408.34,92.26 409.09,104.55 409.84,106.13 410.59,97.13 411.34,100.49 412.09,104.69 412.84,105.38 413.60,98.90 414.35,102.51 415.10,105.02 415.85,105.11 416.60,103.26 417.35,106.10 418.10,102.69 418.85,105.71 419.60,102.64 420.35,103.74 421.10,105.40 421.86,104.14 422.61,105.96 423.36,103.21 424.11,105.86 424.86,85.66 425.61,84.34 426.36,82.15 427.11,78.38 427.86,85.80 428.61,84.58 429.36,82.21 430.12,80.72 430.87,83.06 431.62,88.80 432.37,85.36 433.12,87.51 433.87,83.41 434.62,84.37 435.37,85.81 436.12,82.74 436.87,83.46 437.63,84.42 438.38,82.28 439.13,91.41 439.88,86.40 440.63,83.45 441.38,86.06 442.13,85.72 442.88,84.61 443.63,82.97 444.38,86.87 445.13,85.61 445.89,85.14 446.64,87.16 447.39,81.42 448.14,82.67 448.89,86.88 449.64,86.36 450.39,84.57 451.14,84.99 451.89,86.41 452.64,84.82 453.40,85.30 454.15,98.62 454.90,103.84 455.65,100.24 456.40,104.26 457.15,104.88 457.90,103.58 458.65,104.99 459.40,104.34 460.15,105.22 460.90,104.29 461.66,105.84 462.41,105.80 463.16,101.17 463.91,105.50 464.66,103.85 465.41,93.08 466.16,104.81 466.91,103.67 467.66,106.35 468.41,104.80 469.17,105.77 469.92,90.60 470.67,101.67 471.42,104.07 472.17,103.45 472.92,104.76 473.67,105.25 474.42,105.50 475.17,104.72 475.92,105.83 476.67,106.14 477.43,104.18 478.18,105.15 478.93,105.03 479.68,104.73 480.43,104.37 481.18,104.86 481.93,106.53 482.68,105.00 483.43,105.05 484.18,105.75 484.94,106.10 485.69,84.66 486.44,105.13 487.19,101.73 487.94,106.05 488.69,104.87 489.44,105.95 490.19,105.25 490.94,106.39 491.69,105.91 492.44,106.17 493.20,106.39 493.95,89.22 494.70,103.29 495.45,105.88 496.20,103.68 496.95,105.73 497.70,105.69 498.45,104.37 499.20,105.62 499.95,97.11 500.71,105.02 501.46,106.31 502.21,106.26 502.96,104.76 503.71,104.34 504.46,105.97 505.21,106.39 505.96,105.31 506.71,98.46 507.46,101.65 508.21,91.54 508.97,104.35 509.72,103.17 510.47,106.32 511.22,106.07 511.97,104.29 512.72,104.18 513.47,104.78 514.22,105.80 514.97,106.00 515.72,105.43 516.48,100.46 517.23,105.35 517.98,105.05 518.73,105.50 519.48,89.80 520.23,103.27 520.98,105.83 521.73,103.36 522.48,105.35 523.23,104.80 523.98,103.27 524.74,100.55 525.49,100.70 526.24,98.32 526.99,100.55 527.74,105.38 528.49,104.71 529.24,101.02 529.99,104.73 530.74,104.90 531.49,94.86 532.24,104.73 533.00,102.16 533.75,93.62 534.50,97.48 535.25,91.00 536.00,104.56 536.75,102.25 537.50,72.66 538.25,85.84 539.00,86.97 539.75,82.10 540.51,80.44 541.26,85.70 542.01,81.96 542.76,83.90 543.51,87.05 544.26,79.09 545.01,81.67 545.76,77.17 546.51,80.67 547.26,82.09 548.01,80.11 548.77,82.77 549.52,87.43 550.27,81.52 551.02,88.05 551.77,86.31 552.52,82.80 553.27,86.84 554.02,87.35 554.77,84.87 555.52,79.08 556.28,83.25 557.03,77.55 557.78,82.34 558.53,83.82 559.28,83.25 560.03,81.04 560.78,86.38 561.53,83.32 562.28,82.18 563.03,86.22 563.78,85.69 564.54,85.73 565.29,81.73 566.04,104.54 566.79,104.16 567.54,105.01 568.29,104.58 569.04,105.95 569.79,104.23 570.54,100.89 571.29,101.32 572.05,105.31 572.80,104.77 573.55,105.91 574.30,105.61 575.05,105.91 575.80,98.78" fill="none" stroke="#8ab8ff" stroke-width="1.1"/><polygon points="61.40,110.5 61.40,112.48 62.15,114.05 62.90,112.33 63.65,113.52 64.40,113.11 65.15,127.22 65.91,112.88 66.66,116.32 67.41,112.68 68.16,112.98 68.91,112.83 69.66,113.09 70.41,117.18 71.16,112.95 71.91,113.08 72.66,113.49 73.42,112.70 74.17,112.45 74.92,112.67 75.67,112.43 76.42,113.62 77.17,112.83 77.92,112.88 78.67,116.75 79.42,112.58 80.17,112.99 80.92,112.97 81.68,112.54 82.43,112.68 83.18,144.96 83.93,143.62 84.68,143.77 85.43,191.06 86.18,143.38 86.93,143.03 87.68,143.08 88.43,143.44 89.19,143.64 89.94,144.54 90.69,143.05 91.44,145.79 92.19,144.19 92.94,145.51 93.69,143.95 94.44,151.84 95.19,144.52 95.94,143.67 96.69,144.48 97.45,146.25 98.20,143.13 98.95,145.56 99.70,145.07 100.45,143.09 101.20,146.08 101.95,144.44 102.70,143.69 103.45,144.44 104.20,144.32 104.96,143.84 105.71,143.16 106.46,144.34 107.21,143.43 107.96,143.09 108.71,143.06 109.46,143.49 110.21,144.40 110.96,112.91 111.71,112.44 112.46,112.42 113.22,112.77 113.97,119.45 114.72,112.56 115.47,112.50 116.22,113.37 116.97,112.47 117.72,125.70 118.47,112.93 119.22,112.35 119.97,113.74 120.72,113.06 121.48,112.84 122.23,112.56 122.98,112.78 123.73,112.33 124.48,112.72 125.23,119.08 125.98,112.57 126.73,113.12 127.48,112.96 128.23,113.39 128.99,112.50 129.74,112.57 130.49,112.94 131.24,112.76 131.99,113.29 132.74,112.85 133.49,127.22 134.24,112.61 134.99,112.88 135.74,112.41 136.49,112.33 137.25,112.59 138.00,112.61 138.75,113.92 139.50,112.45 140.25,113.02 141.00,113.04 141.75,113.56 142.50,112.87 143.25,112.40 144.00,113.30 144.76,114.18 145.51,113.21 146.26,113.20 147.01,119.04 147.76,113.12 148.51,113.06 149.26,113.02 150.01,112.36 150.76,112.88 151.51,112.36 152.26,113.36 153.02,113.79 153.77,121.11 154.52,112.89 155.27,113.21 156.02,113.74 156.77,114.16 157.52,117.12 158.27,112.71 159.02,112.48 159.77,113.09 160.53,112.74 161.28,129.35 162.03,113.64 162.78,113.10 163.53,112.50 164.28,113.14 165.03,112.68 165.78,113.28 166.53,112.46 167.28,112.92 168.03,112.70 168.79,112.35 169.54,112.59 170.29,112.56 171.04,112.42 171.79,112.94 172.54,115.47 173.29,113.18 174.04,112.68 174.79,113.77 175.54,112.60 176.30,119.58 177.05,113.40 177.80,112.92 178.55,114.68 179.30,146.07 180.05,113.51 180.80,113.47 181.55,112.96 182.30,122.32 183.05,112.61 183.80,116.26 184.56,113.25 185.31,113.84 186.06,115.61 186.81,112.80 187.56,113.12 188.31,119.22 189.06,113.23 189.81,112.45 190.56,112.51 191.31,112.46 192.07,112.35 192.82,121.27 193.57,113.25 194.32,112.38 195.07,112.83 195.82,112.60 196.57,141.68 197.32,141.32 198.07,141.07 198.82,140.72 199.57,141.36 200.33,144.73 201.08,140.35 201.83,141.00 202.58,141.10 203.33,140.70 204.08,143.45 204.83,140.10 205.58,141.81 206.33,144.52 207.08,141.80 207.84,140.19 208.59,140.01 209.34,141.74 210.09,140.71 210.84,141.77 211.59,141.80 212.34,141.47 213.09,145.05 213.84,141.74 214.59,141.11 215.34,149.49 216.10,149.64 216.85,148.85 217.60,149.47 218.35,148.61 219.10,148.76 219.85,148.58 220.60,149.23 221.35,151.00 222.10,149.95 222.85,148.27 223.60,149.55 224.36,147.95 225.11,148.94 225.86,147.95 226.61,113.04 227.36,113.50 228.11,114.74 228.86,113.09 229.61,112.78 230.36,114.39 231.11,113.14 231.87,113.41 232.62,113.13 233.37,112.55 234.12,112.42 234.87,113.07 235.62,113.51 236.37,112.64 237.12,112.71 237.87,112.39 238.62,112.39 239.37,112.61 240.13,112.74 240.88,113.93 241.63,124.00 242.38,112.78 243.13,113.84 243.88,112.42 244.63,113.20 245.38,112.75 246.13,112.80 246.88,112.64 247.64,113.85 248.39,112.68 249.14,112.36 249.89,113.48 250.64,112.41 251.39,116.75 252.14,113.46 252.89,112.51 253.64,113.08 254.39,112.81 255.14,113.02 255.90,112.97 256.65,112.63 257.40,114.44 258.15,113.08 258.90,118.04 259.65,116.99 260.40,113.95 261.15,113.03 261.90,113.08 262.65,113.01 263.41,113.73 264.16,113.39 264.91,113.92 265.66,112.50 266.41,113.15 267.16,113.42 267.91,113.48 268.66,112.37 269.41,112.33 270.16,112.91 270.91,125.70 271.67,112.66 272.42,112.57 273.17,112.58 273.92,112.33 274.67,112.60 275.42,113.60 276.17,112.57 276.92,113.26 277.67,112.39 278.42,113.02 279.18,118.38 279.93,120.78 280.68,113.37 281.43,112.99 282.18,113.94 282.93,115.28 283.68,112.32 284.43,112.95 285.18,112.37 285.93,112.75 286.68,113.76 287.44,114.05 288.19,112.82 288.94,112.37 289.69,117.59 290.44,112.37 291.19,113.54 291.94,112.58 292.69,112.72 293.44,112.76 294.19,112.46 294.95,113.20 295.70,112.57 296.45,112.34 297.20,112.65 297.95,112.73 298.70,113.45 299.45,114.23 300.20,114.49 300.95,112.39 301.70,112.60 302.45,113.37 303.21,112.61 303.96,112.90 304.71,113.89 305.46,112.41 306.21,124.58 306.96,113.04 307.71,113.15 308.46,112.37 309.21,112.78 309.96,112.33 310.72,113.77 311.47,112.44 312.22,143.55 312.97,140.68 313.72,141.30 314.47,140.95 315.22,141.92 315.97,141.76 316.72,140.11 317.47,140.69 318.22,140.22 318.98,141.29 319.73,143.04 320.48,141.42 321.23,140.25 321.98,141.72 322.73,140.67 323.48,140.79 324.23,141.58 324.98,143.19 325.73,144.52 326.48,142.05 327.24,140.73 327.99,141.04 328.74,140.18 329.49,144.97 330.24,141.73 330.99,146.38 331.74,140.01 332.49,141.19 333.24,140.77 333.99,140.69 334.75,141.64 335.50,144.80 336.25,141.74 337.00,140.90 337.75,140.64 338.50,140.37 339.25,141.92 340.00,142.26 340.75,140.46 341.50,141.38 342.25,113.86 343.01,112.61 343.76,119.99 344.51,117.72 345.26,113.99 346.01,114.06 346.76,112.79 347.51,112.44 348.26,112.55 349.01,113.31 349.76,112.33 350.52,112.99 351.27,113.81 352.02,112.58 352.77,112.84 353.52,112.60 354.27,112.62 355.02,113.03 355.77,112.57 356.52,113.18 357.27,113.97 358.02,114.09 358.78,113.30 359.53,113.12 360.28,112.83 361.03,112.43 361.78,112.56 362.53,115.39 363.28,113.63 364.03,121.26 364.78,112.66 365.53,112.41 366.29,112.96 367.04,114.07 367.79,112.47 368.54,112.75 369.29,112.90 370.04,119.55 370.79,113.37 371.54,112.64 372.29,112.61 373.04,112.35 373.79,112.50 374.55,113.32 375.30,112.46 376.05,117.57 376.80,112.51 377.55,112.48 378.30,112.79 379.05,113.25 379.80,112.40 380.55,112.92 381.30,113.97 382.06,124.57 382.81,112.48 383.56,112.88 384.31,112.37 385.06,113.98 385.81,113.26 386.56,113.34 387.31,112.97 388.06,112.45 388.81,112.36 389.56,113.07 390.32,121.80 391.07,113.82 391.82,112.74 392.57,113.76 393.32,114.27 394.07,113.49 394.82,113.27 395.57,112.58 396.32,114.26 397.07,113.89 397.83,122.01 398.58,113.10 399.33,114.04 400.08,112.44 400.83,112.84 401.58,112.96 402.33,113.87 403.08,112.39 403.83,113.38 404.58,115.62 405.33,112.43 406.09,113.47 406.84,112.97 407.59,113.05 408.34,114.26 409.09,114.38 409.84,112.80 410.59,113.31 411.34,118.51 412.09,112.77 412.84,113.54 413.60,113.56 414.35,112.63 415.10,116.65 415.85,114.37 416.60,122.47 417.35,112.74 418.10,113.30 418.85,113.07 419.60,112.83 420.35,112.81 421.10,113.17 421.86,113.64 422.61,112.62 423.36,113.21 424.11,112.50 424.86,141.73 425.61,141.02 426.36,141.01 427.11,141.24 427.86,140.32 428.61,141.54 429.36,141.33 430.12,142.11 430.87,140.87 431.62,140.57 432.37,141.96 433.12,140.32 433.87,140.33 434.62,140.00 435.37,140.51 436.12,141.95 436.87,140.35 437.63,140.20 438.38,142.83 439.13,142.24 439.88,141.19 440.63,143.84 441.38,142.33 442.13,144.78 442.88,140.19 443.63,140.81 444.38,143.57 445.13,140.32 445.89,141.35 446.64,141.31 447.39,141.38 448.14,143.30 448.89,140.22 449.64,140.72 450.39,140.53 451.14,140.52 451.89,142.35 452.64,140.22 453.40,140.43 454.15,113.41 454.90,119.86 455.65,112.96 456.40,113.83 457.15,113.54 457.90,112.68 458.65,114.05 459.40,112.91 460.15,112.33 460.90,114.04 461.66,112.52 462.41,113.19 463.16,112.71 463.91,114.15 464.66,113.49 465.41,113.12 466.16,112.73 466.91,113.15 467.66,113.10 468.41,113.38 469.17,112.86 469.92,120.64 470.67,116.39 471.42,112.45 472.17,112.89 472.92,113.70 473.67,112.39 474.42,112.32 475.17,115.08 475.92,114.00 476.67,113.55 477.43,113.25 478.18,114.48 478.93,114.55 479.68,114.72 480.43,112.86 481.18,114.41 481.93,124.47 482.68,112.45 483.43,114.15 484.18,112.77 484.94,112.68 485.69,126.61 486.44,113.05 487.19,112.48 487.94,112.46 488.69,112.34 489.44,113.28 490.19,112.72 490.94,113.35 491.69,113.70 492.44,112.76 493.20,112.99 493.95,112.46 494.70,112.37 495.45,113.44 496.20,112.94 496.95,113.07 497.70,112.38 498.45,112.93 499.20,113.26 499.95,113.58 500.71,113.20 501.46,113.11 502.21,113.30 502.96,112.53 503.71,114.17 504.46,116.22 505.21,112.70 505.96,112.84 506.71,113.60 507.46,112.69 508.21,112.59 508.97,112.76 509.72,112.73 510.47,112.34 511.22,112.35 511.97,115.94 512.72,112.94 513.47,112.89 514.22,114.32 514.97,113.98 515.72,113.58 516.48,120.21 517.23,113.76 517.98,112.98 518.73,118.88 519.48,112.77 520.23,113.41 520.98,112.56 521.73,112.44 522.48,112.52 523.23,112.79 523.98,113.17 524.74,113.42 525.49,112.82 526.24,113.63 526.99,113.86 527.74,113.97 528.49,112.71 529.24,113.68 529.99,116.39 530.74,113.01 531.49,112.73 532.24,113.64 533.00,112.34 533.75,113.03 534.50,113.33 535.25,119.16 536.00,113.35 536.75,112.76 537.50,140.68 538.25,140.47 539.00,140.13 539.75,142.02 540.51,141.82 541.26,142.14 542.01,144.75 542.76,143.90 543.51,140.36 544.26,140.57 545.01,142.53 545.76,145.63 546.51,140.52 547.26,140.36 548.01,144.76 548.77,140.68 549.52,141.89 550.27,140.04 551.02,140.50 551.77,140.36 552.52,140.15 553.27,142.08 554.02,143.17 554.77,140.79 555.52,141.95 556.28,141.72 557.03,140.87 557.78,141.19 558.53,141.79 559.28,140.02 560.03,142.01 560.78,141.49 561.53,141.06 562.28,142.31 563.03,141.02 563.78,143.50 564.54,140.52 565.29,141.57 566.04,113.15 566.79,113.70 567.54,113.72 568.29,113.83 569.04,112.55 569.79,112.71 570.54,113.09 571.29,112.99 572.05,118.03 572.80,112.32 573.55,112.82 574.30,112.76 575.05,112.34 575.80,112.86 575.80,110.5" fill="#ff780a" fill-opacity=".42"/><polyline points="61.40,112.48 62.15,114.05 62.90,112.33 63.65,113.52 64.40,113.11 65.15,127.22 65.91,112.88 66.66,116.32 67.41,112.68 68.16,112.98 68.91,112.83 69.66,113.09 70.41,117.18 71.16,112.95 71.91,113.08 72.66,113.49 73.42,112.70 74.17,112.45 74.92,112.67 75.67,112.43 76.42,113.62 77.17,112.83 77.92,112.88 78.67,116.75 79.42,112.58 80.17,112.99 80.92,112.97 81.68,112.54 82.43,112.68 83.18,144.96 83.93,143.62 84.68,143.77 85.43,191.06 86.18,143.38 86.93,143.03 87.68,143.08 88.43,143.44 89.19,143.64 89.94,144.54 90.69,143.05 91.44,145.79 92.19,144.19 92.94,145.51 93.69,143.95 94.44,151.84 95.19,144.52 95.94,143.67 96.69,144.48 97.45,146.25 98.20,143.13 98.95,145.56 99.70,145.07 100.45,143.09 101.20,146.08 101.95,144.44 102.70,143.69 103.45,144.44 104.20,144.32 104.96,143.84 105.71,143.16 106.46,144.34 107.21,143.43 107.96,143.09 108.71,143.06 109.46,143.49 110.21,144.40 110.96,112.91 111.71,112.44 112.46,112.42 113.22,112.77 113.97,119.45 114.72,112.56 115.47,112.50 116.22,113.37 116.97,112.47 117.72,125.70 118.47,112.93 119.22,112.35 119.97,113.74 120.72,113.06 121.48,112.84 122.23,112.56 122.98,112.78 123.73,112.33 124.48,112.72 125.23,119.08 125.98,112.57 126.73,113.12 127.48,112.96 128.23,113.39 128.99,112.50 129.74,112.57 130.49,112.94 131.24,112.76 131.99,113.29 132.74,112.85 133.49,127.22 134.24,112.61 134.99,112.88 135.74,112.41 136.49,112.33 137.25,112.59 138.00,112.61 138.75,113.92 139.50,112.45 140.25,113.02 141.00,113.04 141.75,113.56 142.50,112.87 143.25,112.40 144.00,113.30 144.76,114.18 145.51,113.21 146.26,113.20 147.01,119.04 147.76,113.12 148.51,113.06 149.26,113.02 150.01,112.36 150.76,112.88 151.51,112.36 152.26,113.36 153.02,113.79 153.77,121.11 154.52,112.89 155.27,113.21 156.02,113.74 156.77,114.16 157.52,117.12 158.27,112.71 159.02,112.48 159.77,113.09 160.53,112.74 161.28,129.35 162.03,113.64 162.78,113.10 163.53,112.50 164.28,113.14 165.03,112.68 165.78,113.28 166.53,112.46 167.28,112.92 168.03,112.70 168.79,112.35 169.54,112.59 170.29,112.56 171.04,112.42 171.79,112.94 172.54,115.47 173.29,113.18 174.04,112.68 174.79,113.77 175.54,112.60 176.30,119.58 177.05,113.40 177.80,112.92 178.55,114.68 179.30,146.07 180.05,113.51 180.80,113.47 181.55,112.96 182.30,122.32 183.05,112.61 183.80,116.26 184.56,113.25 185.31,113.84 186.06,115.61 186.81,112.80 187.56,113.12 188.31,119.22 189.06,113.23 189.81,112.45 190.56,112.51 191.31,112.46 192.07,112.35 192.82,121.27 193.57,113.25 194.32,112.38 195.07,112.83 195.82,112.60 196.57,141.68 197.32,141.32 198.07,141.07 198.82,140.72 199.57,141.36 200.33,144.73 201.08,140.35 201.83,141.00 202.58,141.10 203.33,140.70 204.08,143.45 204.83,140.10 205.58,141.81 206.33,144.52 207.08,141.80 207.84,140.19 208.59,140.01 209.34,141.74 210.09,140.71 210.84,141.77 211.59,141.80 212.34,141.47 213.09,145.05 213.84,141.74 214.59,141.11 215.34,149.49 216.10,149.64 216.85,148.85 217.60,149.47 218.35,148.61 219.10,148.76 219.85,148.58 220.60,149.23 221.35,151.00 222.10,149.95 222.85,148.27 223.60,149.55 224.36,147.95 225.11,148.94 225.86,147.95 226.61,113.04 227.36,113.50 228.11,114.74 228.86,113.09 229.61,112.78 230.36,114.39 231.11,113.14 231.87,113.41 232.62,113.13 233.37,112.55 234.12,112.42 234.87,113.07 235.62,113.51 236.37,112.64 237.12,112.71 237.87,112.39 238.62,112.39 239.37,112.61 240.13,112.74 240.88,113.93 241.63,124.00 242.38,112.78 243.13,113.84 243.88,112.42 244.63,113.20 245.38,112.75 246.13,112.80 246.88,112.64 247.64,113.85 248.39,112.68 249.14,112.36 249.89,113.48 250.64,112.41 251.39,116.75 252.14,113.46 252.89,112.51 253.64,113.08 254.39,112.81 255.14,113.02 255.90,112.97 256.65,112.63 257.40,114.44 258.15,113.08 258.90,118.04 259.65,116.99 260.40,113.95 261.15,113.03 261.90,113.08 262.65,113.01 263.41,113.73 264.16,113.39 264.91,113.92 265.66,112.50 266.41,113.15 267.16,113.42 267.91,113.48 268.66,112.37 269.41,112.33 270.16,112.91 270.91,125.70 271.67,112.66 272.42,112.57 273.17,112.58 273.92,112.33 274.67,112.60 275.42,113.60 276.17,112.57 276.92,113.26 277.67,112.39 278.42,113.02 279.18,118.38 279.93,120.78 280.68,113.37 281.43,112.99 282.18,113.94 282.93,115.28 283.68,112.32 284.43,112.95 285.18,112.37 285.93,112.75 286.68,113.76 287.44,114.05 288.19,112.82 288.94,112.37 289.69,117.59 290.44,112.37 291.19,113.54 291.94,112.58 292.69,112.72 293.44,112.76 294.19,112.46 294.95,113.20 295.70,112.57 296.45,112.34 297.20,112.65 297.95,112.73 298.70,113.45 299.45,114.23 300.20,114.49 300.95,112.39 301.70,112.60 302.45,113.37 303.21,112.61 303.96,112.90 304.71,113.89 305.46,112.41 306.21,124.58 306.96,113.04 307.71,113.15 308.46,112.37 309.21,112.78 309.96,112.33 310.72,113.77 311.47,112.44 312.22,143.55 312.97,140.68 313.72,141.30 314.47,140.95 315.22,141.92 315.97,141.76 316.72,140.11 317.47,140.69 318.22,140.22 318.98,141.29 319.73,143.04 320.48,141.42 321.23,140.25 321.98,141.72 322.73,140.67 323.48,140.79 324.23,141.58 324.98,143.19 325.73,144.52 326.48,142.05 327.24,140.73 327.99,141.04 328.74,140.18 329.49,144.97 330.24,141.73 330.99,146.38 331.74,140.01 332.49,141.19 333.24,140.77 333.99,140.69 334.75,141.64 335.50,144.80 336.25,141.74 337.00,140.90 337.75,140.64 338.50,140.37 339.25,141.92 340.00,142.26 340.75,140.46 341.50,141.38 342.25,113.86 343.01,112.61 343.76,119.99 344.51,117.72 345.26,113.99 346.01,114.06 346.76,112.79 347.51,112.44 348.26,112.55 349.01,113.31 349.76,112.33 350.52,112.99 351.27,113.81 352.02,112.58 352.77,112.84 353.52,112.60 354.27,112.62 355.02,113.03 355.77,112.57 356.52,113.18 357.27,113.97 358.02,114.09 358.78,113.30 359.53,113.12 360.28,112.83 361.03,112.43 361.78,112.56 362.53,115.39 363.28,113.63 364.03,121.26 364.78,112.66 365.53,112.41 366.29,112.96 367.04,114.07 367.79,112.47 368.54,112.75 369.29,112.90 370.04,119.55 370.79,113.37 371.54,112.64 372.29,112.61 373.04,112.35 373.79,112.50 374.55,113.32 375.30,112.46 376.05,117.57 376.80,112.51 377.55,112.48 378.30,112.79 379.05,113.25 379.80,112.40 380.55,112.92 381.30,113.97 382.06,124.57 382.81,112.48 383.56,112.88 384.31,112.37 385.06,113.98 385.81,113.26 386.56,113.34 387.31,112.97 388.06,112.45 388.81,112.36 389.56,113.07 390.32,121.80 391.07,113.82 391.82,112.74 392.57,113.76 393.32,114.27 394.07,113.49 394.82,113.27 395.57,112.58 396.32,114.26 397.07,113.89 397.83,122.01 398.58,113.10 399.33,114.04 400.08,112.44 400.83,112.84 401.58,112.96 402.33,113.87 403.08,112.39 403.83,113.38 404.58,115.62 405.33,112.43 406.09,113.47 406.84,112.97 407.59,113.05 408.34,114.26 409.09,114.38 409.84,112.80 410.59,113.31 411.34,118.51 412.09,112.77 412.84,113.54 413.60,113.56 414.35,112.63 415.10,116.65 415.85,114.37 416.60,122.47 417.35,112.74 418.10,113.30 418.85,113.07 419.60,112.83 420.35,112.81 421.10,113.17 421.86,113.64 422.61,112.62 423.36,113.21 424.11,112.50 424.86,141.73 425.61,141.02 426.36,141.01 427.11,141.24 427.86,140.32 428.61,141.54 429.36,141.33 430.12,142.11 430.87,140.87 431.62,140.57 432.37,141.96 433.12,140.32 433.87,140.33 434.62,140.00 435.37,140.51 436.12,141.95 436.87,140.35 437.63,140.20 438.38,142.83 439.13,142.24 439.88,141.19 440.63,143.84 441.38,142.33 442.13,144.78 442.88,140.19 443.63,140.81 444.38,143.57 445.13,140.32 445.89,141.35 446.64,141.31 447.39,141.38 448.14,143.30 448.89,140.22 449.64,140.72 450.39,140.53 451.14,140.52 451.89,142.35 452.64,140.22 453.40,140.43 454.15,113.41 454.90,119.86 455.65,112.96 456.40,113.83 457.15,113.54 457.90,112.68 458.65,114.05 459.40,112.91 460.15,112.33 460.90,114.04 461.66,112.52 462.41,113.19 463.16,112.71 463.91,114.15 464.66,113.49 465.41,113.12 466.16,112.73 466.91,113.15 467.66,113.10 468.41,113.38 469.17,112.86 469.92,120.64 470.67,116.39 471.42,112.45 472.17,112.89 472.92,113.70 473.67,112.39 474.42,112.32 475.17,115.08 475.92,114.00 476.67,113.55 477.43,113.25 478.18,114.48 478.93,114.55 479.68,114.72 480.43,112.86 481.18,114.41 481.93,124.47 482.68,112.45 483.43,114.15 484.18,112.77 484.94,112.68 485.69,126.61 486.44,113.05 487.19,112.48 487.94,112.46 488.69,112.34 489.44,113.28 490.19,112.72 490.94,113.35 491.69,113.70 492.44,112.76 493.20,112.99 493.95,112.46 494.70,112.37 495.45,113.44 496.20,112.94 496.95,113.07 497.70,112.38 498.45,112.93 499.20,113.26 499.95,113.58 500.71,113.20 501.46,113.11 502.21,113.30 502.96,112.53 503.71,114.17 504.46,116.22 505.21,112.70 505.96,112.84 506.71,113.60 507.46,112.69 508.21,112.59 508.97,112.76 509.72,112.73 510.47,112.34 511.22,112.35 511.97,115.94 512.72,112.94 513.47,112.89 514.22,114.32 514.97,113.98 515.72,113.58 516.48,120.21 517.23,113.76 517.98,112.98 518.73,118.88 519.48,112.77 520.23,113.41 520.98,112.56 521.73,112.44 522.48,112.52 523.23,112.79 523.98,113.17 524.74,113.42 525.49,112.82 526.24,113.63 526.99,113.86 527.74,113.97 528.49,112.71 529.24,113.68 529.99,116.39 530.74,113.01 531.49,112.73 532.24,113.64 533.00,112.34 533.75,113.03 534.50,113.33 535.25,119.16 536.00,113.35 536.75,112.76 537.50,140.68 538.25,140.47 539.00,140.13 539.75,142.02 540.51,141.82 541.26,142.14 542.01,144.75 542.76,143.90 543.51,140.36 544.26,140.57 545.01,142.53 545.76,145.63 546.51,140.52 547.26,140.36 548.01,144.76 548.77,140.68 549.52,141.89 550.27,140.04 551.02,140.50 551.77,140.36 552.52,140.15 553.27,142.08 554.02,143.17 554.77,140.79 555.52,141.95 556.28,141.72 557.03,140.87 557.78,141.19 558.53,141.79 559.28,140.02 560.03,142.01 560.78,141.49 561.53,141.06 562.28,142.31 563.03,141.02 563.78,143.50 564.54,140.52 565.29,141.57 566.04,113.15 566.79,113.70 567.54,113.72 568.29,113.83 569.04,112.55 569.79,112.71 570.54,113.09 571.29,112.99 572.05,118.03 572.80,112.32 573.55,112.82 574.30,112.76 575.05,112.34 575.80,112.86" fill="none" stroke="#ff780a" stroke-width="1.1"/><polygon points="61.40,110.5 61.40,111.49 62.15,112.27 62.90,111.42 63.65,112.01 64.40,111.81 65.15,119.62 65.91,111.69 66.66,113.41 67.41,111.59 68.16,111.74 68.91,111.67 69.66,111.79 70.41,113.84 71.16,111.72 71.91,111.79 72.66,112.00 73.42,111.60 74.17,111.48 74.92,111.59 75.67,111.47 76.42,112.06 77.17,111.66 77.92,111.69 78.67,113.62 79.42,111.54 80.17,111.74 80.92,111.74 81.68,111.52 82.43,111.59 83.18,125.04 83.93,126.10 84.68,125.01 85.43,168.26 86.18,125.47 86.93,124.80 87.68,125.71 88.43,125.24 89.19,124.87 89.94,125.21 90.69,124.56 91.44,124.97 92.19,125.10 92.94,125.18 93.69,126.01 94.44,124.97 95.19,125.27 95.94,125.18 96.69,126.25 97.45,124.81 98.20,124.68 98.95,124.54 99.70,124.58 100.45,125.17 101.20,125.82 101.95,124.52 102.70,125.32 103.45,124.76 104.20,125.55 104.96,125.96 105.71,124.84 106.46,124.87 107.21,126.84 107.96,125.50 108.71,124.61 109.46,125.21 110.21,125.26 110.96,111.70 111.71,111.47 112.46,111.46 113.22,111.64 113.97,114.98 114.72,111.53 115.47,111.50 116.22,111.94 116.97,111.48 117.72,112.01 118.47,111.71 119.22,111.43 119.97,112.12 120.72,111.78 121.48,111.67 122.23,111.53 122.98,111.64 123.73,111.41 124.48,111.61 125.23,114.79 125.98,111.53 126.73,111.81 127.48,111.73 128.23,111.94 128.99,111.50 129.74,111.54 130.49,111.72 131.24,111.63 131.99,111.90 132.74,111.68 133.49,111.43 134.24,111.55 134.99,111.69 135.74,111.45 136.49,111.42 137.25,111.55 138.00,111.56 138.75,112.21 139.50,111.48 140.25,111.76 141.00,111.77 141.75,112.03 142.50,111.68 143.25,111.45 144.00,111.90 144.76,112.34 145.51,111.86 146.26,111.85 147.01,114.77 147.76,111.81 148.51,111.78 149.26,111.76 150.01,111.43 150.76,111.69 151.51,111.43 152.26,111.93 153.02,112.14 153.77,115.81 154.52,111.70 155.27,111.86 156.02,112.12 156.77,112.33 157.52,113.81 158.27,111.60 159.02,111.49 159.77,111.79 160.53,111.62 161.28,129.35 162.03,112.07 162.78,111.80 163.53,111.50 164.28,111.82 165.03,111.59 165.78,111.89 166.53,111.48 167.28,111.71 168.03,111.60 168.79,111.42 169.54,111.54 170.29,111.53 171.04,111.46 171.79,111.72 172.54,112.99 173.29,111.84 174.04,111.59 174.79,112.14 175.54,111.55 176.30,115.04 177.05,111.95 177.80,111.71 178.55,112.59 179.30,128.74 180.05,112.01 180.80,111.98 181.55,111.73 182.30,116.41 183.05,111.56 183.80,113.38 184.56,111.87 185.31,112.17 186.06,113.05 186.81,111.65 187.56,111.81 188.31,114.86 189.06,111.87 189.81,111.47 190.56,111.51 191.31,111.48 192.07,111.43 192.82,115.89 193.57,111.87 194.32,111.44 195.07,111.67 195.82,111.55 196.57,122.71 197.32,123.86 198.07,123.71 198.82,122.91 199.57,124.16 200.33,123.15 201.08,124.31 201.83,124.20 202.58,124.16 203.33,122.95 204.08,123.03 204.83,124.39 205.58,122.77 206.33,122.79 207.08,123.79 207.84,122.97 208.59,123.25 209.34,122.84 210.09,123.82 210.84,123.90 211.59,123.50 212.34,123.42 213.09,123.25 213.84,123.89 214.59,123.06 215.34,126.80 216.10,127.49 216.85,126.80 217.60,126.35 218.35,125.76 219.10,125.85 219.85,127.13 220.60,126.60 221.35,126.79 222.10,126.27 222.85,126.05 223.60,127.96 224.36,126.89 225.11,126.84 225.86,126.22 226.61,111.77 227.36,112.00 228.11,112.62 228.86,111.79 229.61,111.64 230.36,112.44 231.11,111.82 231.87,111.95 232.62,111.81 233.37,111.53 234.12,111.46 234.87,111.78 235.62,112.00 236.37,111.57 237.12,111.60 237.87,111.44 238.62,111.45 239.37,111.56 240.13,111.62 240.88,112.22 241.63,117.25 242.38,111.64 243.13,112.17 243.88,111.46 244.63,111.85 245.38,111.62 246.13,111.65 246.88,111.57 247.64,112.18 248.39,111.59 249.14,111.43 249.89,111.99 250.64,111.45 251.39,113.63 252.14,111.98 252.89,111.50 253.64,111.79 254.39,111.66 255.14,111.76 255.90,111.73 256.65,111.57 257.40,112.47 258.15,111.79 258.90,114.27 259.65,113.74 260.40,112.23 261.15,111.77 261.90,111.79 262.65,111.75 263.41,112.12 264.16,111.95 264.91,112.21 265.66,111.50 266.41,111.83 267.16,111.96 267.91,111.99 268.66,111.43 269.41,111.41 270.16,111.71 270.91,117.71 271.67,111.58 272.42,111.54 273.17,111.54 273.92,111.41 274.67,111.55 275.42,112.05 276.17,111.54 276.92,111.88 277.67,111.44 278.42,111.76 279.18,114.44 279.93,115.64 280.68,111.93 281.43,111.75 282.18,112.22 282.93,112.89 283.68,111.41 284.43,111.73 285.18,111.43 285.93,111.63 286.68,112.13 287.44,112.28 288.19,111.66 288.94,111.44 289.69,114.05 290.44,111.44 291.19,112.02 291.94,111.54 292.69,111.61 293.44,111.63 294.19,111.48 294.95,111.85 295.70,111.53 296.45,111.42 297.20,111.57 297.95,111.62 298.70,111.98 299.45,112.36 300.20,112.50 300.95,111.45 301.70,111.55 302.45,111.94 303.21,111.55 303.96,111.70 304.71,112.20 305.46,111.45 306.21,117.54 306.96,111.77 307.71,111.83 308.46,111.44 309.21,111.64 309.96,111.41 310.72,112.13 311.47,111.47 312.22,123.50 312.97,124.13 313.72,123.60 314.47,123.19 315.22,122.66 315.97,122.70 316.72,124.21 317.47,122.69 318.22,124.32 318.98,122.85 319.73,122.75 320.48,123.17 321.23,124.13 321.98,123.21 322.73,123.99 323.48,123.99 324.23,122.73 324.98,124.79 325.73,122.96 326.48,123.65 327.24,122.67 327.99,124.07 328.74,123.02 329.49,123.85 330.24,123.64 330.99,123.69 331.74,123.08 332.49,123.56 333.24,122.99 333.99,123.86 334.75,124.09 335.50,123.80 336.25,123.20 337.00,122.94 337.75,123.03 338.50,122.67 339.25,123.90 340.00,124.09 340.75,123.34 341.50,123.40 342.25,112.18 343.01,111.56 343.76,115.25 344.51,114.11 345.26,112.25 346.01,112.28 346.76,111.65 347.51,111.47 348.26,111.53 349.01,111.91 349.76,111.42 350.52,111.75 351.27,112.16 352.02,111.54 352.77,111.67 353.52,111.55 354.27,111.56 355.02,111.76 355.77,111.54 356.52,111.84 357.27,112.24 358.02,112.29 358.78,111.90 359.53,111.81 360.28,111.66 361.03,111.47 361.78,111.53 362.53,112.95 363.28,112.07 364.03,115.88 364.78,111.58 365.53,111.46 366.29,111.73 367.04,112.28 367.79,111.48 368.54,111.63 369.29,111.70 370.04,115.03 370.79,111.94 371.54,111.57 372.29,111.56 373.04,111.42 373.79,111.50 374.55,111.91 375.30,111.48 376.05,114.03 376.80,111.50 377.55,111.49 378.30,111.64 379.05,111.88 379.80,111.45 380.55,111.71 381.30,112.24 382.06,117.53 382.81,111.49 383.56,111.69 384.31,111.43 385.06,112.24 385.81,111.88 386.56,111.92 387.31,111.74 388.06,111.47 388.81,111.43 389.56,111.79 390.32,116.15 391.07,112.16 391.82,111.62 392.57,112.13 393.32,112.39 394.07,112.00 394.82,111.89 395.57,111.54 396.32,112.38 397.07,112.20 397.83,116.25 398.58,111.80 399.33,112.27 400.08,111.47 400.83,111.67 401.58,111.73 402.33,112.19 403.08,111.45 403.83,111.94 404.58,113.06 405.33,111.47 406.09,111.99 406.84,111.74 407.59,111.77 408.34,112.38 409.09,112.44 409.84,111.65 410.59,111.90 411.34,114.50 412.09,111.63 412.84,112.02 413.60,112.03 414.35,111.56 415.10,113.57 415.85,112.44 416.60,116.49 417.35,111.62 418.10,111.90 418.85,111.79 419.60,111.67 420.35,111.65 421.10,111.83 421.86,112.07 422.61,111.56 423.36,111.86 424.11,111.50 424.86,123.21 425.61,123.65 426.36,122.86 427.11,123.23 427.86,122.89 428.61,124.10 429.36,124.60 430.12,123.07 430.87,123.74 431.62,124.98 432.37,123.17 433.12,123.07 433.87,122.69 434.62,122.89 435.37,123.97 436.12,123.91 436.87,123.18 437.63,122.92 438.38,123.23 439.13,122.73 439.88,122.85 440.63,122.69 441.38,123.22 442.13,123.37 442.88,123.03 443.63,122.79 444.38,123.17 445.13,123.20 445.89,122.73 446.64,123.01 447.39,122.86 448.14,122.83 448.89,123.52 449.64,123.84 450.39,122.69 451.14,123.72 451.89,124.05 452.64,123.23 453.40,122.70 454.15,111.96 454.90,115.18 455.65,111.73 456.40,112.17 457.15,112.02 457.90,111.59 458.65,112.28 459.40,111.71 460.15,111.42 460.90,112.27 461.66,111.51 462.41,111.85 463.16,111.61 463.91,112.32 464.66,111.99 465.41,111.81 466.16,111.61 466.91,111.83 467.66,111.80 468.41,111.94 469.17,111.68 469.92,115.57 470.67,113.44 471.42,111.47 472.17,111.69 472.92,112.10 473.67,111.44 474.42,111.41 475.17,112.79 475.92,112.25 476.67,112.03 477.43,111.88 478.18,112.49 478.93,112.53 479.68,112.61 480.43,111.68 481.18,112.45 481.93,117.48 482.68,111.47 483.43,112.33 484.18,111.63 484.94,111.59 485.69,119.62 486.44,111.78 487.19,111.49 487.94,111.48 488.69,111.42 489.44,111.89 490.19,111.61 490.94,111.93 491.69,112.10 492.44,111.63 493.20,111.74 493.95,111.48 494.70,111.44 495.45,111.97 496.20,111.72 496.95,111.78 497.70,111.44 498.45,111.71 499.20,111.88 499.95,112.04 500.71,111.85 501.46,111.81 502.21,111.90 502.96,111.51 503.71,112.33 504.46,113.36 505.21,111.60 505.96,111.67 506.71,112.05 507.46,111.60 508.21,111.55 508.97,111.63 509.72,111.62 510.47,111.42 511.22,111.42 511.97,113.22 512.72,111.72 513.47,111.70 514.22,112.41 514.97,112.24 515.72,112.04 516.48,115.35 517.23,112.13 517.98,111.74 518.73,114.69 519.48,111.63 520.23,111.95 520.98,111.53 521.73,111.47 522.48,111.51 523.23,111.64 523.98,111.83 524.74,111.96 525.49,111.66 526.24,112.07 526.99,112.18 527.74,112.24 528.49,111.60 529.24,112.09 529.99,113.45 530.74,111.75 531.49,111.61 532.24,112.07 533.00,111.42 533.75,111.77 534.50,111.91 535.25,114.83 536.00,111.92 536.75,111.63 537.50,123.70 538.25,123.16 539.00,123.62 539.75,122.79 540.51,123.04 541.26,123.39 542.01,122.83 542.76,123.18 543.51,123.54 544.26,123.15 545.01,123.77 545.76,123.02 546.51,123.72 547.26,122.86 548.01,124.36 548.77,122.99 549.52,122.87 550.27,123.18 551.02,123.73 551.77,124.20 552.52,123.91 553.27,123.93 554.02,123.50 554.77,123.82 555.52,123.57 556.28,123.03 557.03,123.76 557.78,123.50 558.53,124.15 559.28,123.67 560.03,123.03 560.78,122.95 561.53,123.08 562.28,122.88 563.03,123.16 563.78,122.67 564.54,124.24 565.29,124.45 566.04,111.83 566.79,112.10 567.54,112.11 568.29,112.16 569.04,111.52 569.79,111.61 570.54,111.79 571.29,111.74 572.05,114.26 572.80,111.41 573.55,111.66 574.30,111.63 575.05,111.42 575.80,111.68 575.80,110.5" fill="#5794f2" fill-opacity=".42"/><polyline points="61.40,111.49 62.15,112.27 62.90,111.42 63.65,112.01 64.40,111.81 65.15,119.62 65.91,111.69 66.66,113.41 67.41,111.59 68.16,111.74 68.91,111.67 69.66,111.79 70.41,113.84 71.16,111.72 71.91,111.79 72.66,112.00 73.42,111.60 74.17,111.48 74.92,111.59 75.67,111.47 76.42,112.06 77.17,111.66 77.92,111.69 78.67,113.62 79.42,111.54 80.17,111.74 80.92,111.74 81.68,111.52 82.43,111.59 83.18,125.04 83.93,126.10 84.68,125.01 85.43,168.26 86.18,125.47 86.93,124.80 87.68,125.71 88.43,125.24 89.19,124.87 89.94,125.21 90.69,124.56 91.44,124.97 92.19,125.10 92.94,125.18 93.69,126.01 94.44,124.97 95.19,125.27 95.94,125.18 96.69,126.25 97.45,124.81 98.20,124.68 98.95,124.54 99.70,124.58 100.45,125.17 101.20,125.82 101.95,124.52 102.70,125.32 103.45,124.76 104.20,125.55 104.96,125.96 105.71,124.84 106.46,124.87 107.21,126.84 107.96,125.50 108.71,124.61 109.46,125.21 110.21,125.26 110.96,111.70 111.71,111.47 112.46,111.46 113.22,111.64 113.97,114.98 114.72,111.53 115.47,111.50 116.22,111.94 116.97,111.48 117.72,112.01 118.47,111.71 119.22,111.43 119.97,112.12 120.72,111.78 121.48,111.67 122.23,111.53 122.98,111.64 123.73,111.41 124.48,111.61 125.23,114.79 125.98,111.53 126.73,111.81 127.48,111.73 128.23,111.94 128.99,111.50 129.74,111.54 130.49,111.72 131.24,111.63 131.99,111.90 132.74,111.68 133.49,111.43 134.24,111.55 134.99,111.69 135.74,111.45 136.49,111.42 137.25,111.55 138.00,111.56 138.75,112.21 139.50,111.48 140.25,111.76 141.00,111.77 141.75,112.03 142.50,111.68 143.25,111.45 144.00,111.90 144.76,112.34 145.51,111.86 146.26,111.85 147.01,114.77 147.76,111.81 148.51,111.78 149.26,111.76 150.01,111.43 150.76,111.69 151.51,111.43 152.26,111.93 153.02,112.14 153.77,115.81 154.52,111.70 155.27,111.86 156.02,112.12 156.77,112.33 157.52,113.81 158.27,111.60 159.02,111.49 159.77,111.79 160.53,111.62 161.28,129.35 162.03,112.07 162.78,111.80 163.53,111.50 164.28,111.82 165.03,111.59 165.78,111.89 166.53,111.48 167.28,111.71 168.03,111.60 168.79,111.42 169.54,111.54 170.29,111.53 171.04,111.46 171.79,111.72 172.54,112.99 173.29,111.84 174.04,111.59 174.79,112.14 175.54,111.55 176.30,115.04 177.05,111.95 177.80,111.71 178.55,112.59 179.30,128.74 180.05,112.01 180.80,111.98 181.55,111.73 182.30,116.41 183.05,111.56 183.80,113.38 184.56,111.87 185.31,112.17 186.06,113.05 186.81,111.65 187.56,111.81 188.31,114.86 189.06,111.87 189.81,111.47 190.56,111.51 191.31,111.48 192.07,111.43 192.82,115.89 193.57,111.87 194.32,111.44 195.07,111.67 195.82,111.55 196.57,122.71 197.32,123.86 198.07,123.71 198.82,122.91 199.57,124.16 200.33,123.15 201.08,124.31 201.83,124.20 202.58,124.16 203.33,122.95 204.08,123.03 204.83,124.39 205.58,122.77 206.33,122.79 207.08,123.79 207.84,122.97 208.59,123.25 209.34,122.84 210.09,123.82 210.84,123.90 211.59,123.50 212.34,123.42 213.09,123.25 213.84,123.89 214.59,123.06 215.34,126.80 216.10,127.49 216.85,126.80 217.60,126.35 218.35,125.76 219.10,125.85 219.85,127.13 220.60,126.60 221.35,126.79 222.10,126.27 222.85,126.05 223.60,127.96 224.36,126.89 225.11,126.84 225.86,126.22 226.61,111.77 227.36,112.00 228.11,112.62 228.86,111.79 229.61,111.64 230.36,112.44 231.11,111.82 231.87,111.95 232.62,111.81 233.37,111.53 234.12,111.46 234.87,111.78 235.62,112.00 236.37,111.57 237.12,111.60 237.87,111.44 238.62,111.45 239.37,111.56 240.13,111.62 240.88,112.22 241.63,117.25 242.38,111.64 243.13,112.17 243.88,111.46 244.63,111.85 245.38,111.62 246.13,111.65 246.88,111.57 247.64,112.18 248.39,111.59 249.14,111.43 249.89,111.99 250.64,111.45 251.39,113.63 252.14,111.98 252.89,111.50 253.64,111.79 254.39,111.66 255.14,111.76 255.90,111.73 256.65,111.57 257.40,112.47 258.15,111.79 258.90,114.27 259.65,113.74 260.40,112.23 261.15,111.77 261.90,111.79 262.65,111.75 263.41,112.12 264.16,111.95 264.91,112.21 265.66,111.50 266.41,111.83 267.16,111.96 267.91,111.99 268.66,111.43 269.41,111.41 270.16,111.71 270.91,117.71 271.67,111.58 272.42,111.54 273.17,111.54 273.92,111.41 274.67,111.55 275.42,112.05 276.17,111.54 276.92,111.88 277.67,111.44 278.42,111.76 279.18,114.44 279.93,115.64 280.68,111.93 281.43,111.75 282.18,112.22 282.93,112.89 283.68,111.41 284.43,111.73 285.18,111.43 285.93,111.63 286.68,112.13 287.44,112.28 288.19,111.66 288.94,111.44 289.69,114.05 290.44,111.44 291.19,112.02 291.94,111.54 292.69,111.61 293.44,111.63 294.19,111.48 294.95,111.85 295.70,111.53 296.45,111.42 297.20,111.57 297.95,111.62 298.70,111.98 299.45,112.36 300.20,112.50 300.95,111.45 301.70,111.55 302.45,111.94 303.21,111.55 303.96,111.70 304.71,112.20 305.46,111.45 306.21,117.54 306.96,111.77 307.71,111.83 308.46,111.44 309.21,111.64 309.96,111.41 310.72,112.13 311.47,111.47 312.22,123.50 312.97,124.13 313.72,123.60 314.47,123.19 315.22,122.66 315.97,122.70 316.72,124.21 317.47,122.69 318.22,124.32 318.98,122.85 319.73,122.75 320.48,123.17 321.23,124.13 321.98,123.21 322.73,123.99 323.48,123.99 324.23,122.73 324.98,124.79 325.73,122.96 326.48,123.65 327.24,122.67 327.99,124.07 328.74,123.02 329.49,123.85 330.24,123.64 330.99,123.69 331.74,123.08 332.49,123.56 333.24,122.99 333.99,123.86 334.75,124.09 335.50,123.80 336.25,123.20 337.00,122.94 337.75,123.03 338.50,122.67 339.25,123.90 340.00,124.09 340.75,123.34 341.50,123.40 342.25,112.18 343.01,111.56 343.76,115.25 344.51,114.11 345.26,112.25 346.01,112.28 346.76,111.65 347.51,111.47 348.26,111.53 349.01,111.91 349.76,111.42 350.52,111.75 351.27,112.16 352.02,111.54 352.77,111.67 353.52,111.55 354.27,111.56 355.02,111.76 355.77,111.54 356.52,111.84 357.27,112.24 358.02,112.29 358.78,111.90 359.53,111.81 360.28,111.66 361.03,111.47 361.78,111.53 362.53,112.95 363.28,112.07 364.03,115.88 364.78,111.58 365.53,111.46 366.29,111.73 367.04,112.28 367.79,111.48 368.54,111.63 369.29,111.70 370.04,115.03 370.79,111.94 371.54,111.57 372.29,111.56 373.04,111.42 373.79,111.50 374.55,111.91 375.30,111.48 376.05,114.03 376.80,111.50 377.55,111.49 378.30,111.64 379.05,111.88 379.80,111.45 380.55,111.71 381.30,112.24 382.06,117.53 382.81,111.49 383.56,111.69 384.31,111.43 385.06,112.24 385.81,111.88 386.56,111.92 387.31,111.74 388.06,111.47 388.81,111.43 389.56,111.79 390.32,116.15 391.07,112.16 391.82,111.62 392.57,112.13 393.32,112.39 394.07,112.00 394.82,111.89 395.57,111.54 396.32,112.38 397.07,112.20 397.83,116.25 398.58,111.80 399.33,112.27 400.08,111.47 400.83,111.67 401.58,111.73 402.33,112.19 403.08,111.45 403.83,111.94 404.58,113.06 405.33,111.47 406.09,111.99 406.84,111.74 407.59,111.77 408.34,112.38 409.09,112.44 409.84,111.65 410.59,111.90 411.34,114.50 412.09,111.63 412.84,112.02 413.60,112.03 414.35,111.56 415.10,113.57 415.85,112.44 416.60,116.49 417.35,111.62 418.10,111.90 418.85,111.79 419.60,111.67 420.35,111.65 421.10,111.83 421.86,112.07 422.61,111.56 423.36,111.86 424.11,111.50 424.86,123.21 425.61,123.65 426.36,122.86 427.11,123.23 427.86,122.89 428.61,124.10 429.36,124.60 430.12,123.07 430.87,123.74 431.62,124.98 432.37,123.17 433.12,123.07 433.87,122.69 434.62,122.89 435.37,123.97 436.12,123.91 436.87,123.18 437.63,122.92 438.38,123.23 439.13,122.73 439.88,122.85 440.63,122.69 441.38,123.22 442.13,123.37 442.88,123.03 443.63,122.79 444.38,123.17 445.13,123.20 445.89,122.73 446.64,123.01 447.39,122.86 448.14,122.83 448.89,123.52 449.64,123.84 450.39,122.69 451.14,123.72 451.89,124.05 452.64,123.23 453.40,122.70 454.15,111.96 454.90,115.18 455.65,111.73 456.40,112.17 457.15,112.02 457.90,111.59 458.65,112.28 459.40,111.71 460.15,111.42 460.90,112.27 461.66,111.51 462.41,111.85 463.16,111.61 463.91,112.32 464.66,111.99 465.41,111.81 466.16,111.61 466.91,111.83 467.66,111.80 468.41,111.94 469.17,111.68 469.92,115.57 470.67,113.44 471.42,111.47 472.17,111.69 472.92,112.10 473.67,111.44 474.42,111.41 475.17,112.79 475.92,112.25 476.67,112.03 477.43,111.88 478.18,112.49 478.93,112.53 479.68,112.61 480.43,111.68 481.18,112.45 481.93,117.48 482.68,111.47 483.43,112.33 484.18,111.63 484.94,111.59 485.69,119.62 486.44,111.78 487.19,111.49 487.94,111.48 488.69,111.42 489.44,111.89 490.19,111.61 490.94,111.93 491.69,112.10 492.44,111.63 493.20,111.74 493.95,111.48 494.70,111.44 495.45,111.97 496.20,111.72 496.95,111.78 497.70,111.44 498.45,111.71 499.20,111.88 499.95,112.04 500.71,111.85 501.46,111.81 502.21,111.90 502.96,111.51 503.71,112.33 504.46,113.36 505.21,111.60 505.96,111.67 506.71,112.05 507.46,111.60 508.21,111.55 508.97,111.63 509.72,111.62 510.47,111.42 511.22,111.42 511.97,113.22 512.72,111.72 513.47,111.70 514.22,112.41 514.97,112.24 515.72,112.04 516.48,115.35 517.23,112.13 517.98,111.74 518.73,114.69 519.48,111.63 520.23,111.95 520.98,111.53 521.73,111.47 522.48,111.51 523.23,111.64 523.98,111.83 524.74,111.96 525.49,111.66 526.24,112.07 526.99,112.18 527.74,112.24 528.49,111.60 529.24,112.09 529.99,113.45 530.74,111.75 531.49,111.61 532.24,112.07 533.00,111.42 533.75,111.77 534.50,111.91 535.25,114.83 536.00,111.92 536.75,111.63 537.50,123.70 538.25,123.16 539.00,123.62 539.75,122.79 540.51,123.04 541.26,123.39 542.01,122.83 542.76,123.18 543.51,123.54 544.26,123.15 545.01,123.77 545.76,123.02 546.51,123.72 547.26,122.86 548.01,124.36 548.77,122.99 549.52,122.87 550.27,123.18 551.02,123.73 551.77,124.20 552.52,123.91 553.27,123.93 554.02,123.50 554.77,123.82 555.52,123.57 556.28,123.03 557.03,123.76 557.78,123.50 558.53,124.15 559.28,123.67 560.03,123.03 560.78,122.95 561.53,123.08 562.28,122.88 563.03,123.16 563.78,122.67 564.54,124.24 565.29,124.45 566.04,111.83 566.79,112.10 567.54,112.11 568.29,112.16 569.04,111.52 569.79,111.61 570.54,111.79 571.29,111.74 572.05,114.26 572.80,111.41 573.55,111.66 574.30,111.63 575.05,111.42 575.80,111.68" fill="none" stroke="#5794f2" stroke-width="1"/><path d="M61.40 110.5 H575.80" stroke="#e8566a" stroke-opacity=".55" stroke-width="1"/><path d="M111.50 49.00 V208.50" stroke="rgba(240,250,255,0.09)" stroke-width="1"/><path d="M175.50 49.00 V208.50" stroke="rgba(240,250,255,0.09)" stroke-width="1"/><path d="M239.50 49.00 V208.50" stroke="rgba(240,250,255,0.09)" stroke-width="1"/><path d="M304.50 49.00 V208.50" stroke="rgba(240,250,255,0.09)" stroke-width="1"/><path d="M368.50 49.00 V208.50" stroke="rgba(240,250,255,0.09)" stroke-width="1"/><path d="M433.50 49.00 V208.50" stroke="rgba(240,250,255,0.09)" stroke-width="1"/><path d="M497.50 49.00 V208.50" stroke="rgba(240,250,255,0.09)" stroke-width="1"/><path d="M561.50 49.00 V208.50" stroke="rgba(240,250,255,0.09)" stroke-width="1"/><path d="M57.00 49.50 H575.80" stroke="rgba(240,250,255,0.09)" stroke-width="1"/><path d="M57.00 79.50 H575.80" stroke="rgba(240,250,255,0.09)" stroke-width="1"/><path d="M57.00 110.50 H575.80" stroke="rgba(240,250,255,0.09)" stroke-width="1"/><path d="M57.00 140.50 H575.80" stroke="rgba(240,250,255,0.09)" stroke-width="1"/><path d="M57.00 171.50 H575.80" stroke="rgba(240,250,255,0.09)" stroke-width="1"/><path d="M57.00 201.50 H575.80" stroke="rgba(240,250,255,0.09)" stroke-width="1"/></svg>
<span class="t" style="left:80.74px;top:626px;font-size:12.5px;line-height:19px;color:#ccccdc;transform:scaleX(1.0457);">2 Mb/s</span>
<span class="t" style="left:81.22px;top:656px;font-size:12.5px;line-height:19px;color:#ccccdc;transform:scaleX(1.0329);">1 Mb/s</span>
<span class="t" style="left:91.39px;top:687px;font-size:12.5px;line-height:19px;color:#ccccdc;transform:scaleX(1.0547);">0 b/s</span>
<span class="t" style="left:77.03px;top:717px;font-size:12.5px;line-height:19px;color:#ccccdc;transform:scaleX(1.0300);">-1 Mb/s</span>
<span class="t" style="left:77.03px;top:748px;font-size:12.5px;line-height:19px;color:#ccccdc;transform:scaleX(1.0300);">-2 Mb/s</span>
<span class="t" style="left:77.03px;top:778px;font-size:12.5px;line-height:19px;color:#ccccdc;transform:scaleX(1.0300);">-3 Mb/s</span>
<span class="t" style="left:165.04px;top:796px;font-size:12.5px;line-height:19px;color:#ccccdc;transform:scaleX(0.9550);">12:00</span>
<span class="t" style="left:229.04px;top:796px;font-size:12.5px;line-height:19px;color:#ccccdc;transform:scaleX(0.9550);">15:00</span>
<span class="t" style="left:293.04px;top:796px;font-size:12.5px;line-height:19px;color:#ccccdc;transform:scaleX(0.9550);">18:00</span>
<span class="t" style="left:358.20px;top:796px;font-size:12.5px;line-height:19px;color:#ccccdc;transform:scaleX(0.9550);">21:00</span>
<span class="t" style="left:422.26px;top:796px;font-size:12.5px;line-height:19px;color:#ccccdc;transform:scaleX(0.9550);">00:00</span>
<span class="t" style="left:487.26px;top:796px;font-size:12.5px;line-height:19px;color:#ccccdc;transform:scaleX(0.9550);">03:00</span>
<span class="t" style="left:551.26px;top:796px;font-size:12.5px;line-height:19px;color:#ccccdc;transform:scaleX(0.9550);">06:00</span>
<span class="t" style="left:615.26px;top:796px;font-size:12.5px;line-height:19px;color:#ccccdc;transform:scaleX(0.9550);">09:00</span>
<div class="b" style="left:82px;top:825px;width:14px;height:4px;background:#73bf69;border-radius:1px;"></div>
<span class="t" style="left:103.38px;top:817px;font-size:12.5px;line-height:19px;color:#ccccdc;transform:scaleX(0.9836);">recv enp0s25</span>
<div class="b" style="left:186.4px;top:825px;width:14px;height:4px;background:#f2cc0c;border-radius:1px;"></div>
<span class="t" style="left:207.86px;top:817px;font-size:12.5px;line-height:19px;color:#ccccdc;transform:scaleX(1.0149);">recv lo</span>
<div class="b" style="left:254.4px;top:825px;width:14px;height:4px;background:#8ab8ff;border-radius:1px;"></div>
<span class="t" style="left:276.27px;top:817px;font-size:12.5px;line-height:19px;color:#ccccdc;transform:scaleX(0.9964);">recv zos</span>
<div class="b" style="left:332.1px;top:825px;width:14px;height:4px;background:#ff780a;border-radius:1px;"></div>
<span class="t" style="left:354.11px;top:817px;font-size:12.5px;line-height:19px;color:#ccccdc;transform:scaleX(0.9845);">trans enp0s25</span>
<div class="b" style="left:441.8px;top:825px;width:14px;height:4px;background:#f2495c;border-radius:1px;"></div>
<span class="t" style="left:464.01px;top:817px;font-size:12.5px;line-height:19px;color:#ccccdc;">trans lo</span>
<div class="b" style="left:514.7px;top:825px;width:14px;height:4px;background:#5794f2;border-radius:1px;"></div>
<span class="t" style="left:536.91px;top:817px;font-size:12.5px;line-height:19px;color:#ccccdc;transform:scaleX(0.9945);">trans zos</span>
<div class="b" style="left:669px;top:587px;width:592px;height:258px;background:#181b1f;border:1px solid #25282d;border-radius:3px;box-sizing:border-box;"></div>
<svg class="b" style="left:670px;top:588px;border-top-left-radius:2px;" width="32" height="32" viewBox="0 0 32 32"><path d="M0 0 H32 L0 32 Z" fill="#25282f"/></svg>
<span class="t" style="left:676.23px;top:591px;font-size:11px;line-height:16px;color:#b3b5c6;font-weight:700;font-family:'DejaVu Serif','Liberation Serif',serif;will-change:transform;">i</span>
<span class="t" style="left:892.86px;top:592px;font-size:15.5px;line-height:23px;color:#ccccdc;-webkit-text-stroke:0.35px #ccccdc;transform:scaleX(0.8933);">Disk Space Used Basic</span>
<svg class="b" style="left:669px;top:587px;" width="587" height="258" viewBox="0 0 587 258"><rect x="48.60" y="102.00" width="526.80" height="103.00" fill="#f2cc0c" fill-opacity="0.4"/><path d="M48.60 102.50 H575.40" stroke="#d0ae0e" stroke-width="1"/><path d="M48.60 204.50 H575.40" stroke="#84a037" stroke-opacity=".85" stroke-width="1"/><path d="M100.50 49.00 V208.50" stroke="rgba(240,250,255,0.09)" stroke-width="1"/><path d="M166.50 49.00 V208.50" stroke="rgba(240,250,255,0.09)" stroke-width="1"/><path d="M232.50 49.00 V208.50" stroke="rgba(240,250,255,0.09)" stroke-width="1"/><path d="M298.50 49.00 V208.50" stroke="rgba(240,250,255,0.09)" stroke-width="1"/><path d="M363.50 49.00 V208.50" stroke="rgba(240,250,255,0.09)" stroke-width="1"/><path d="M429.50 49.00 V208.50" stroke="rgba(240,250,255,0.09)" stroke-width="1"/><path d="M495.50 49.00 V208.50" stroke="rgba(240,250,255,0.09)" stroke-width="1"/><path d="M561.50 49.00 V208.50" stroke="rgba(240,250,255,0.09)" stroke-width="1"/><path d="M44.20 49.50 H575.40" stroke="rgba(240,250,255,0.09)" stroke-width="1"/><path d="M44.20 80.50 H575.40" stroke="rgba(240,250,255,0.09)" stroke-width="1"/><path d="M44.20 111.50 H575.40" stroke="rgba(240,250,255,0.09)" stroke-width="1"/><path d="M44.20 142.50 H575.40" stroke="rgba(240,250,255,0.09)" stroke-width="1"/><path d="M44.20 173.50 H575.40" stroke="rgba(240,250,255,0.09)" stroke-width="1"/><path d="M44.20 204.50 H575.40" stroke="rgba(240,250,255,0.09)" stroke-width="1"/></svg>
<span class="t" style="left:678.01px;top:626px;font-size:12.5px;line-height:19px;color:#ccccdc;transform:scaleX(0.9350);">100%</span>
<span class="t" style="left:685.11px;top:657px;font-size:12.5px;line-height:19px;color:#ccccdc;transform:scaleX(0.9109);">80%</span>
<span class="t" style="left:685.02px;top:688px;font-size:12.5px;line-height:19px;color:#ccccdc;transform:scaleX(0.9144);">60%</span>
<span class="t" style="left:685.34px;top:719px;font-size:12.5px;line-height:19px;color:#ccccdc;transform:scaleX(0.9013);">40%</span>
<span class="t" style="left:685.03px;top:750px;font-size:12.5px;line-height:19px;color:#ccccdc;transform:scaleX(0.9141);">20%</span>
<span class="t" style="left:692.18px;top:781px;font-size:12.5px;line-height:19px;color:#ccccdc;transform:scaleX(0.8691);">0%</span>
<span class="t" style="left:754.04px;top:796px;font-size:12.5px;line-height:19px;color:#ccccdc;transform:scaleX(0.9550);">12:00</span>
<span class="t" style="left:820.04px;top:796px;font-size:12.5px;line-height:19px;color:#ccccdc;transform:scaleX(0.9550);">15:00</span>
<span class="t" style="left:886.04px;top:796px;font-size:12.5px;line-height:19px;color:#ccccdc;transform:scaleX(0.9550);">18:00</span>
<span class="t" style="left:952.20px;top:796px;font-size:12.5px;line-height:19px;color:#ccccdc;transform:scaleX(0.9550);">21:00</span>
<span class="t" style="left:1017.26px;top:796px;font-size:12.5px;line-height:19px;color:#ccccdc;transform:scaleX(0.9550);">00:00</span>
<span class="t" style="left:1083.26px;top:796px;font-size:12.5px;line-height:19px;color:#ccccdc;transform:scaleX(0.9550);">03:00</span>
<span class="t" style="left:1149.26px;top:796px;font-size:12.5px;line-height:19px;color:#ccccdc;transform:scaleX(0.9550);">06:00</span>
<span class="t" style="left:1215.26px;top:796px;font-size:12.5px;line-height:19px;color:#ccccdc;transform:scaleX(0.9550);">09:00</span>
<div class="b" style="left:682px;top:825px;width:14px;height:4px;background:#73bf69;border-radius:1px;"></div>
<span class="t" style="left:704.20px;top:817px;font-size:12.5px;line-height:19px;color:#ccccdc;transform:scaleX(0.9934);">/mnt/3da87d94-9e09-4694-883c-83e11768a1bc</span>
<div class="b" style="left:977.2px;top:825px;width:14px;height:4px;background:#f2cc0c;border-radius:1px;"></div>
<span class="t" style="left:999.80px;top:817px;font-size:12.5px;line-height:19px;color:#ccccdc;transform:scaleX(1.0619);">/</span>
</body></html>
